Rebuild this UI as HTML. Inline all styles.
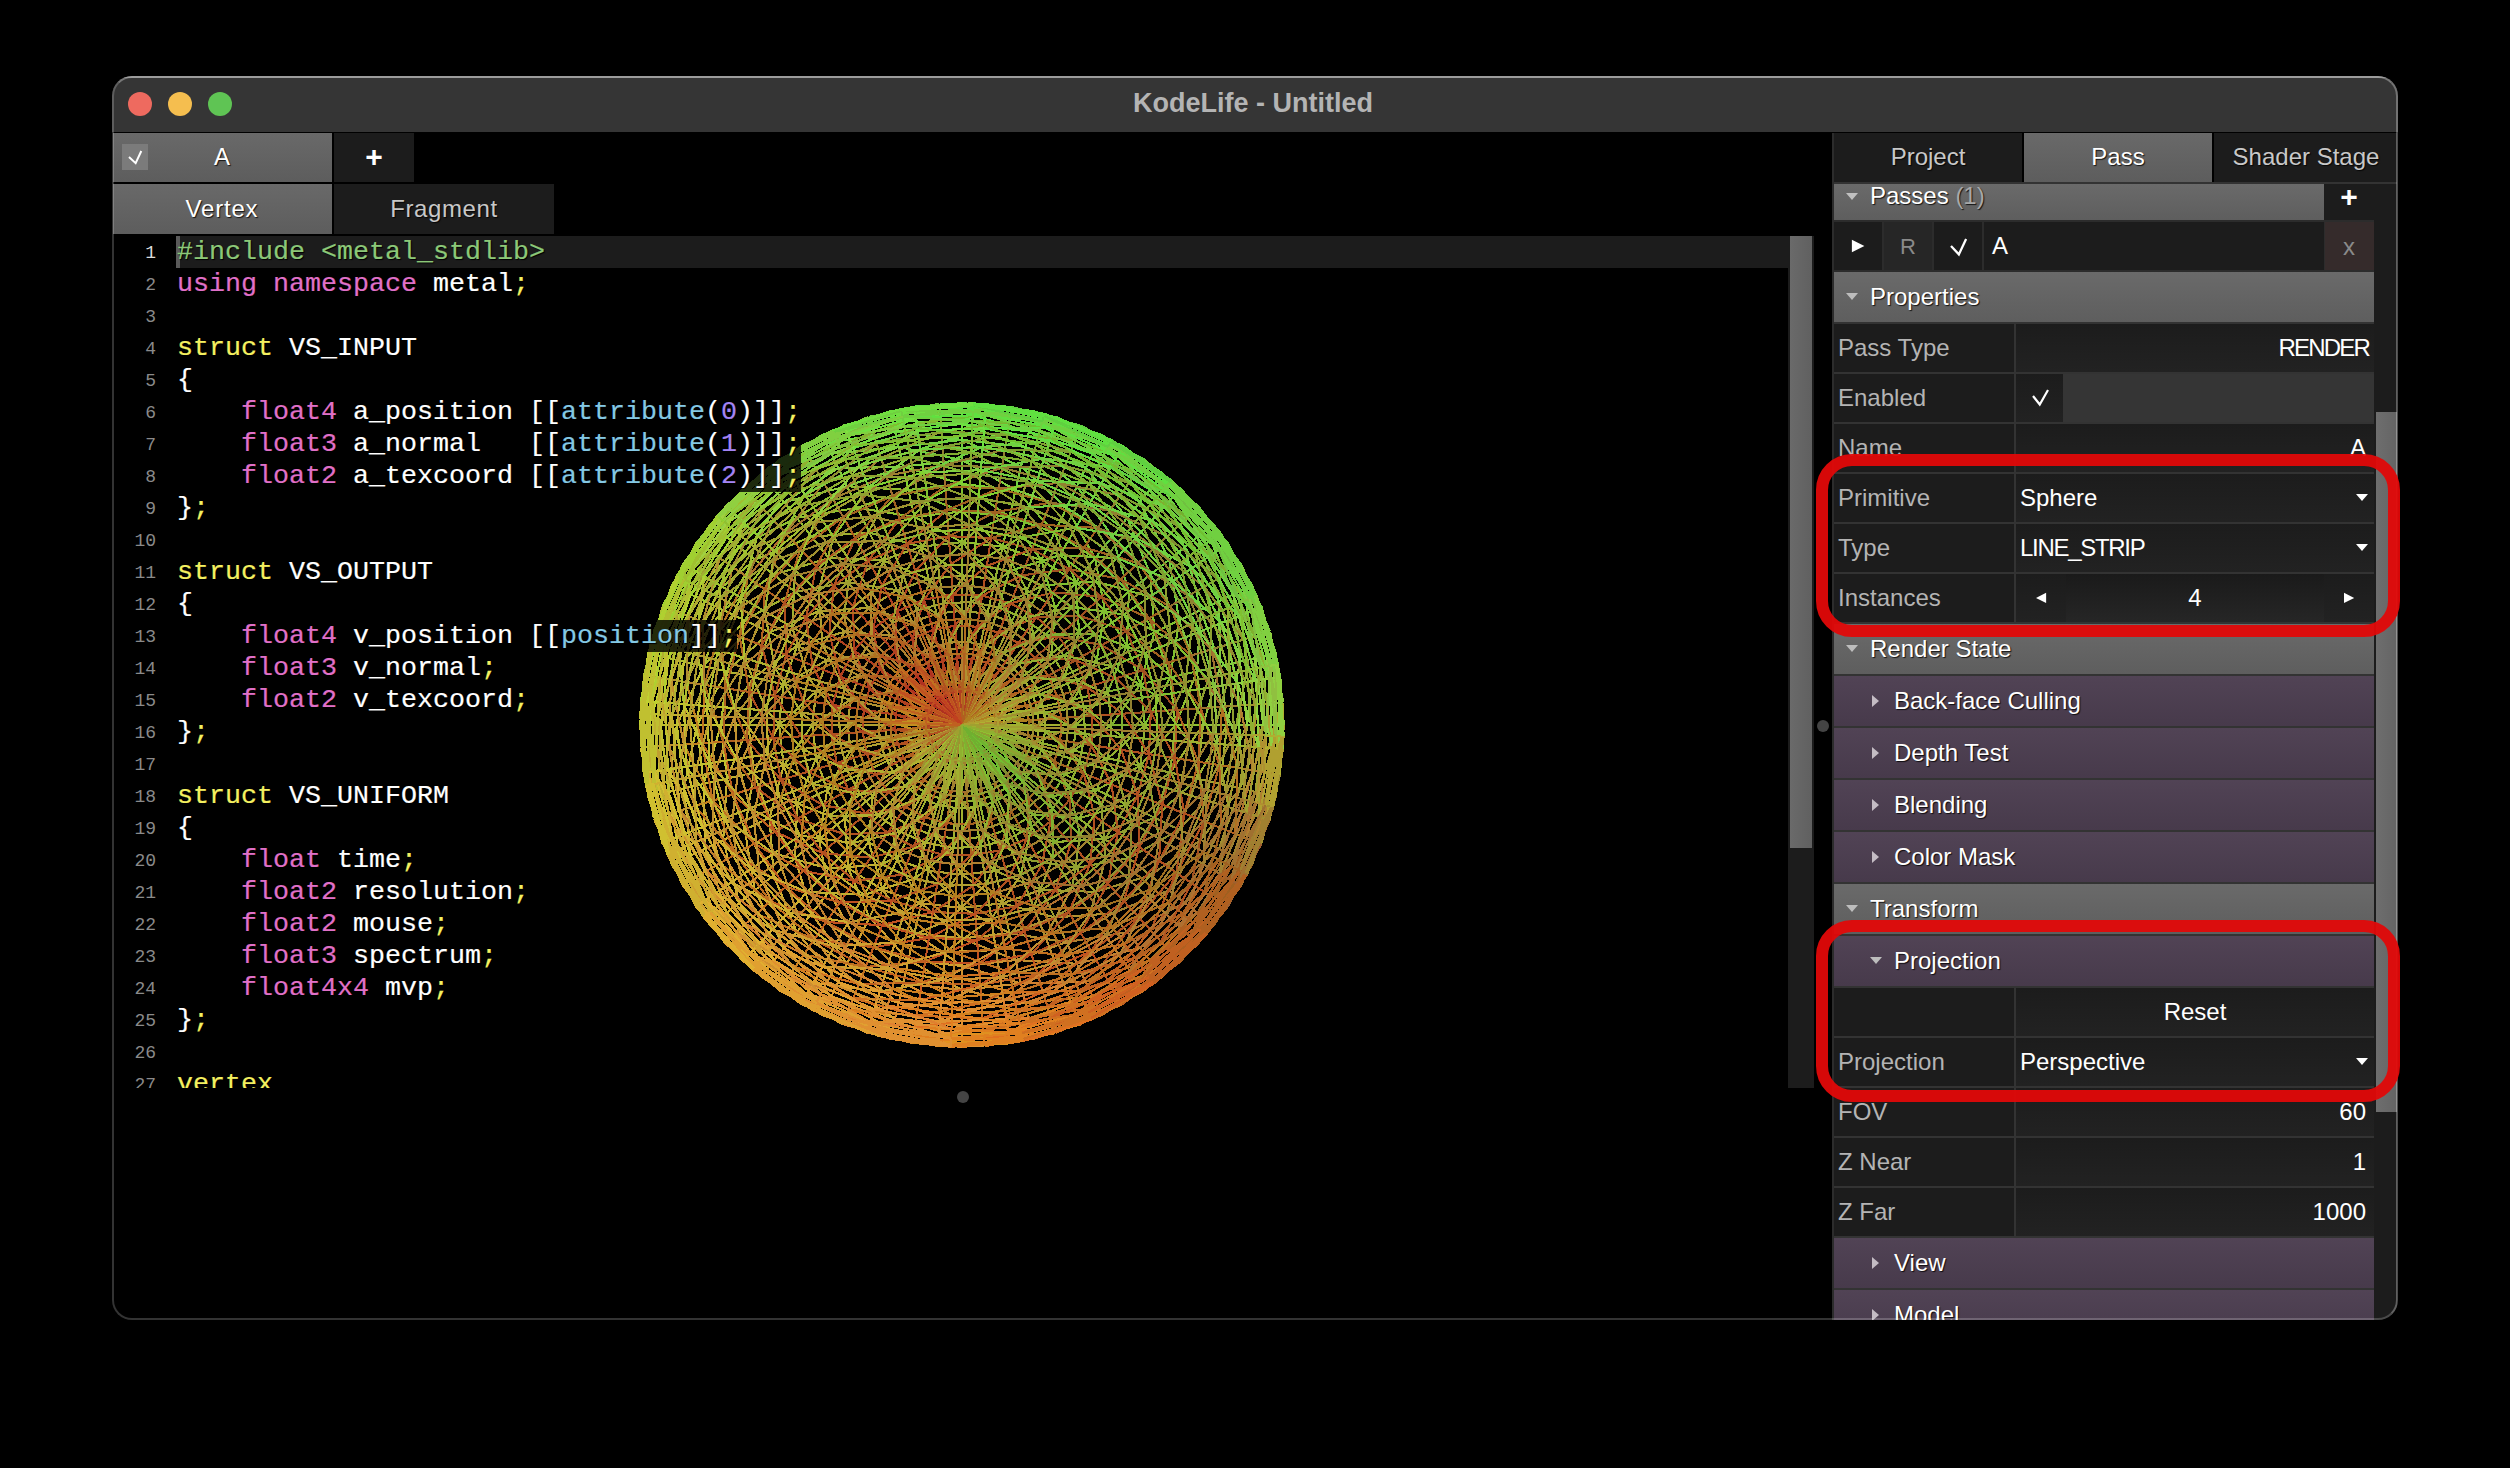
<!DOCTYPE html><html><head><meta charset="utf-8"><style>html,body{margin:0;padding:0;background:#000;}body{width:2510px;height:1468px;overflow:hidden;position:relative;font-family:'Liberation Sans',sans-serif;}div{box-sizing:border-box}</style></head><body>
<div style="position:absolute;left:112px;top:76px;width:2286px;height:1244px;border-radius:20px;overflow:hidden;background:#000;">
<div style="position:absolute;left:-112px;top:-76px;width:2510px;height:1468px;">
<div style="position:absolute;left:112px;top:76px;width:2286px;height:56px;background:#353535;"></div>
<div style="position:absolute;left:112px;top:76px;width:2286px;height:2px;background:#6e6e6e;"></div>
<div style="position:absolute;left:128px;top:92px;width:24px;height:24px;background:#ee6a5f;border-radius:50%;"></div>
<div style="position:absolute;left:168px;top:92px;width:24px;height:24px;background:#f5be4f;border-radius:50%;"></div>
<div style="position:absolute;left:208px;top:92px;width:24px;height:24px;background:#5fc454;border-radius:50%;"></div>
<div style="position:absolute;left:953.0px;width:600px;text-align:center;top:83.0px;height:40px;line-height:40px;font-size:27px;color:#b4b4b4;white-space:pre;font-weight:bold;">KodeLife - Untitled</div>
<div style="position:absolute;left:113px;top:133px;width:219px;height:49px;background:linear-gradient(#696969,#5d5d5d);"></div>
<div style="position:absolute;left:122px;top:144px;width:26px;height:26px;background:#7b7b7b;"></div>
<svg style="position:absolute;left:125.6px;top:148.2px" width="18.30000000000001" height="18.200000000000017"><polyline points="3,9.100000000000009 9.642000000000007,15.200000000000017 15.300000000000011,3" fill="none" stroke="#fff" stroke-width="2.0" stroke-linecap="butt" stroke-linejoin="miter"/></svg>
<div style="position:absolute;left:-78.0px;width:600px;text-align:center;top:137.0px;height:40px;line-height:40px;font-size:24px;color:#fff;white-space:pre;text-shadow:1px 1px 1px rgba(0,0,0,.8);">A</div>
<div style="position:absolute;left:334px;top:133px;width:80px;height:49px;background:#1c1c1c;"></div>
<div style="position:absolute;left:74.0px;width:600px;text-align:center;top:137.0px;height:40px;line-height:40px;font-size:30px;color:#fff;white-space:pre;font-weight:bold;">+</div>
<div style="position:absolute;left:113px;top:184px;width:219px;height:50px;background:linear-gradient(#696969,#5d5d5d);"></div>
<div style="position:absolute;left:-78.0px;width:600px;text-align:center;top:189.0px;height:40px;line-height:40px;font-size:24px;color:#fff;white-space:pre;text-shadow:1px 1px 1px rgba(0,0,0,.8);letter-spacing:0.8px;">Vertex</div>
<div style="position:absolute;left:334px;top:184px;width:220px;height:50px;background:#1c1c1c;"></div>
<div style="position:absolute;left:144.0px;width:600px;text-align:center;top:189.0px;height:40px;line-height:40px;font-size:24px;color:#c8c8c8;white-space:pre;text-shadow:1px 1px 1px rgba(0,0,0,.8);letter-spacing:0.6px;">Fragment</div>
<svg style="position:absolute;left:0;top:0" width="2510" height="1468" viewBox="0 0 2510 1468"><g stroke-width="2.1" fill="none" shape-rendering="crispEdges"><path stroke="rgb(176,176,48)" d="M1000.8 725.0L999.8 716.4M999.8 716.4L997.0 708.2M927.0 741.8L931.7 749.2M892.6 758.4L901.8 773.0M859.1 774.5L872.7 796.2M872.7 796.2L890.8 814.3M890.8 814.3L912.5 827.9M912.5 827.9L936.6 836.3M812.4 725.0L816.1 758.3M816.1 758.3L827.2 789.9M827.2 789.9L845.0 818.3M845.0 818.3L868.7 842.0M868.7 842.0L897.1 859.8M897.1 859.8L928.7 870.9M797.2 645.6L783.7 684.3M783.7 684.3L779.1 725.0M779.1 725.0L783.7 765.7M795.1 591.9L769.6 632.4M769.6 632.4L753.8 677.5M753.8 677.5L748.5 725.0M962.0 725.0L1000.8 725.0M962.0 725.0L999.8 716.4M962.0 725.0L999.8 716.4M927.0 741.8L901.8 773.0M892.6 758.4L859.1 774.5M892.6 758.4L872.7 796.2M901.8 773.0L872.7 796.2M901.8 773.0L890.8 814.3M914.0 785.2L890.8 814.3M914.0 785.2L912.5 827.9M850.7 750.4L827.2 789.9M859.1 774.5L827.2 789.9M859.1 774.5L845.0 818.3M872.7 796.2L845.0 818.3M872.7 796.2L868.7 842.0M890.8 814.3L868.7 842.0M890.8 814.3L897.1 859.8M912.5 827.9L897.1 859.8M912.5 827.9L928.7 870.9M936.6 836.3L928.7 870.9M936.6 836.3L962.0 874.6M816.1 691.7L779.1 725.0M812.4 725.0L779.1 725.0M812.4 725.0L783.7 765.7M816.1 758.3L783.7 765.7M816.1 758.3L797.2 804.4M827.2 789.9L797.2 804.4M819.0 611.0L769.6 632.4M797.2 645.6L769.6 632.4M797.2 645.6L753.8 677.5M783.7 684.3L753.8 677.5M783.7 684.3L748.5 725.0M779.1 725.0L748.5 725.0M769.6 632.4L744.8 620.4M769.6 632.4L727.0 671.4M753.8 677.5L727.0 671.4M753.8 677.5L721.0 725.0"/><path stroke="rgb(176,160,48)" d="M997.0 708.2L992.3 700.8M992.3 700.8L986.2 694.7M924.2 733.6L927.0 741.8M884.9 725.0L886.9 742.1M886.9 742.1L892.6 758.4M850.7 699.6L847.8 725.0M847.8 725.0L850.7 750.4M850.7 750.4L859.1 774.5M897.1 590.2L868.7 608.0M845.0 631.7L827.2 660.1M827.2 660.1L816.1 691.7M816.1 691.7L812.4 725.0M928.7 870.9L962.0 874.6M962.0 874.6L995.3 870.9M819.0 611.0L797.2 645.6M962.0 907.9L1002.7 903.3M1002.7 903.3L1041.4 889.8M1266.8 794.6L1274.6 725.0M1273.6 796.1L1281.7 725.0M1275.9 796.7L1284.0 725.0M962.0 725.0L997.0 708.2M962.0 725.0L997.0 708.2M962.0 725.0L992.3 700.8M962.0 725.0L992.3 700.8M962.0 725.0L927.0 741.8M962.0 725.0L927.0 741.8M924.2 733.6L886.9 742.1M924.2 733.6L892.6 758.4M927.0 741.8L892.6 758.4M884.9 725.0L847.8 725.0M884.9 725.0L850.7 750.4M886.9 742.1L850.7 750.4M886.9 742.1L859.1 774.5M850.7 699.6L816.1 691.7M850.7 699.6L812.4 725.0M847.8 725.0L812.4 725.0M847.8 725.0L816.1 758.3M850.7 750.4L816.1 758.3M962.0 839.2L962.0 874.6M868.7 608.0L819.0 611.0M845.0 631.7L819.0 611.0M845.0 631.7L797.2 645.6M827.2 660.1L797.2 645.6M827.2 660.1L783.7 684.3M816.1 691.7L783.7 684.3M897.1 859.8L921.3 903.3M928.7 870.9L921.3 903.3M928.7 870.9L962.0 907.9M962.0 874.6L962.0 907.9M962.0 874.6L1002.7 903.3M995.3 870.9L1002.7 903.3M1002.7 903.3L1009.5 933.2M1002.7 903.3L1054.6 917.4M1255.5 792.0L1274.6 725.0M1266.8 794.6L1281.7 725.0M1273.6 796.1L1284.0 725.0"/><path stroke="rgb(176,144,48)" d="M986.2 694.7L978.8 690.0M978.8 690.0L970.6 687.2M923.2 725.0L924.2 733.6M979.1 649.9L962.0 647.9M962.0 647.9L944.9 649.9M936.6 613.7L912.5 622.1M859.1 675.5L850.7 699.6M868.7 608.0L845.0 631.7M1009.5 933.2L1054.6 917.4M962.0 725.0L986.2 694.7M962.0 725.0L986.2 694.7M962.0 725.0L924.2 733.6M962.0 725.0L924.2 733.6M978.8 690.0L995.4 655.6M978.8 690.0L979.1 649.9M970.6 687.2L979.1 649.9M970.6 687.2L962.0 647.9M923.2 725.0L886.9 742.1M962.0 647.9L936.6 613.7M944.9 649.9L936.6 613.7M892.6 691.6L850.7 699.6M886.9 707.9L850.7 699.6M886.9 707.9L847.8 725.0M912.5 622.1L897.1 590.2M912.5 622.1L868.7 608.0M890.8 635.7L868.7 608.0M890.8 635.7L845.0 631.7M872.7 653.8L845.0 631.7M872.7 653.8L827.2 660.1M859.1 675.5L827.2 660.1M859.1 675.5L816.1 691.7M1009.5 933.2L1066.6 942.2M1054.6 917.4L1066.6 942.2M1054.6 917.4L1112.3 913.4"/><path stroke="rgb(176,128,32)" d="M970.6 687.2L962.0 686.2M962.0 725.0L970.6 687.2M962.0 725.0L970.6 687.2M962.0 686.2L944.9 649.9M953.4 687.2L944.9 649.9M901.8 677.0L872.7 653.8"/><path stroke="rgb(176,112,32)" d="M962.0 686.2L953.4 687.2M928.6 655.6L914.0 664.8M1149.7 960.4L1197.4 912.7M953.4 687.2L928.6 655.6M945.2 690.0L928.6 655.6M914.0 664.8L872.7 653.8"/><path stroke="rgb(192,112,32)" d="M953.4 687.2L945.2 690.0M927.0 708.2L924.2 716.4M914.0 664.8L901.8 677.0M901.8 677.0L892.6 691.6M1085.7 981.9L1139.8 947.9M1092.6 996.3L1149.7 960.4M962.0 725.0L962.0 686.2M962.0 725.0L962.0 686.2M962.0 725.0L953.4 687.2M962.0 725.0L953.4 687.2M962.0 725.0L924.2 716.4M962.0 725.0L924.2 716.4M945.2 690.0L914.0 664.8M931.7 700.8L892.6 691.6M927.0 708.2L892.6 691.6M1085.7 981.9L1149.7 960.4M1139.8 947.9L1149.7 960.4"/><path stroke="rgb(192,96,32)" d="M945.2 690.0L937.8 694.7M931.7 700.8L927.0 708.2M1156.9 969.4L1206.4 919.9M1161.3 974.9L1211.9 924.3M1162.8 976.7L1213.7 925.8M962.0 725.0L945.2 690.0M962.0 725.0L945.2 690.0M962.0 725.0L927.0 708.2M962.0 725.0L927.0 708.2M937.8 694.7L914.0 664.8M937.8 694.7L901.8 677.0M931.7 700.8L901.8 677.0M1149.7 960.4L1156.9 969.4M1149.7 960.4L1206.4 919.9M1156.9 969.4L1161.3 974.9M1156.9 969.4L1211.9 924.3M1161.3 974.9L1162.8 976.7M1161.3 974.9L1213.7 925.8"/><path stroke="rgb(192,80,32)" d="M937.8 694.7L931.7 700.8M962.0 725.0L937.8 694.7M962.0 725.0L937.8 694.7M962.0 725.0L931.7 700.8M962.0 725.0L931.7 700.8"/><path stroke="rgb(192,128,32)" d="M924.2 716.4L923.2 725.0M892.6 691.6L886.9 707.9M962.0 725.0L923.2 725.0M962.0 725.0L923.2 725.0M927.0 708.2L886.9 707.9M924.2 716.4L886.9 707.9"/><path stroke="rgb(160,192,48)" d="M931.7 749.2L937.8 755.3M937.8 755.3L945.2 760.0M796.8 517.8L754.8 559.8M754.8 559.8L723.2 610.0M739.1 547.2L705.1 601.3M962.0 725.0L937.8 755.3M962.0 725.0L937.8 755.3M811.7 536.6L754.8 559.8M773.6 574.7L754.8 559.8M773.6 574.7L723.2 610.0M754.8 559.8L739.1 547.2M754.8 559.8L705.1 601.3M723.2 610.0L705.1 601.3"/><path stroke="rgb(160,176,48)" d="M945.2 760.0L953.4 762.8M999.8 733.6L1000.8 725.0M1039.1 725.0L1037.1 707.9M1037.1 707.9L1031.4 691.6M1031.4 691.6L1022.2 677.0M901.8 773.0L914.0 785.2M914.0 785.2L928.6 794.4M928.6 794.4L944.9 800.1M944.9 800.1L962.0 802.1M1037.1 742.1L1039.1 725.0M936.6 836.3L962.0 839.2M962.0 839.2L987.4 836.3M995.3 579.1L962.0 575.4M962.0 575.4L928.7 579.1M921.3 546.7L882.6 560.2M869.4 532.6L828.9 558.1M828.9 558.1L795.1 591.9M811.7 536.6L773.6 574.7M773.6 574.7L744.8 620.4M1197.0 778.6L1203.0 725.0M1220.4 784.0L1227.0 725.0M962.0 725.0L931.7 749.2M962.0 725.0L931.7 749.2M962.0 725.0L1000.8 725.0M1000.8 725.0L1039.1 725.0M1000.8 725.0L1037.1 707.9M999.8 716.4L1037.1 707.9M999.8 716.4L1031.4 691.6M931.7 749.2L901.8 773.0M931.7 749.2L914.0 785.2M937.8 755.3L914.0 785.2M937.8 755.3L928.6 794.4M945.2 760.0L928.6 794.4M945.2 760.0L944.9 800.1M953.4 762.8L944.9 800.1M953.4 762.8L962.0 802.1M999.8 733.6L1039.1 725.0M1039.1 725.0L1076.2 725.0M1039.1 725.0L1073.3 699.6M1037.1 707.9L1073.3 699.6M928.6 794.4L912.5 827.9M928.6 794.4L936.6 836.3M944.9 800.1L936.6 836.3M944.9 800.1L962.0 839.2M962.0 802.1L962.0 839.2M962.0 802.1L987.4 836.3M987.4 613.7L995.3 579.1M962.0 839.2L995.3 870.9M987.4 836.3L995.3 870.9M987.4 836.3L1026.9 859.8M962.0 575.4L921.3 546.7M928.7 579.1L921.3 546.7M928.7 579.1L882.6 560.2M882.6 560.2L869.4 532.6M882.6 560.2L828.9 558.1M848.0 582.0L828.9 558.1M819.0 611.0L795.1 591.9M869.4 532.6L811.7 536.6M828.9 558.1L811.7 536.6M828.9 558.1L773.6 574.7M795.1 591.9L773.6 574.7M795.1 591.9L744.8 620.4M1170.2 772.5L1203.0 725.0M1197.0 778.6L1227.0 725.0M1220.4 784.0L1247.1 725.0M1240.0 788.4L1263.1 725.0"/><path stroke="rgb(144,176,48)" d="M953.4 762.8L962.0 763.8M962.0 763.8L970.6 762.8M997.0 741.8L999.8 733.6M962.0 802.1L979.1 800.1M979.1 800.1L995.4 794.4M1031.4 758.4L1037.1 742.1M1076.2 725.0L1073.3 699.6M1073.3 699.6L1064.9 675.5M1064.9 675.5L1051.3 653.8M1051.3 653.8L1033.2 635.7M1033.2 635.7L1011.5 622.1M987.4 836.3L1011.5 827.9M1011.5 827.9L1033.2 814.3M1064.9 774.5L1073.3 750.4M1073.3 750.4L1076.2 725.0M1111.6 725.0L1107.9 691.7M1055.3 608.0L1026.9 590.2M1026.9 590.2L995.3 579.1M1026.9 859.8L1055.3 842.0M1079.0 818.3L1096.8 789.9M1096.8 789.9L1107.9 758.3M1107.9 758.3L1111.6 725.0M962.0 542.1L921.3 546.7M1140.3 765.7L1144.9 725.0M1170.2 772.5L1175.5 725.0M962.0 725.0L999.8 733.6M962.0 725.0L999.8 733.6M962.0 763.8L962.0 802.1M962.0 763.8L979.1 800.1M970.6 762.8L979.1 800.1M997.0 741.8L1037.1 742.1M999.8 733.6L1037.1 742.1M1037.1 707.9L1064.9 675.5M1031.4 691.6L1064.9 675.5M1031.4 691.6L1051.3 653.8M1022.2 677.0L1051.3 653.8M979.1 800.1L987.4 836.3M979.1 800.1L1011.5 827.9M995.4 794.4L1011.5 827.9M1031.4 758.4L1073.3 750.4M1037.1 742.1L1073.3 750.4M1037.1 742.1L1076.2 725.0M1076.2 725.0L1111.6 725.0M1076.2 725.0L1107.9 691.7M1073.3 699.6L1107.9 691.7M1073.3 699.6L1096.8 660.1M1064.9 675.5L1096.8 660.1M1064.9 675.5L1079.0 631.7M1051.3 653.8L1079.0 631.7M1051.3 653.8L1055.3 608.0M1033.2 635.7L1055.3 608.0M1033.2 635.7L1026.9 590.2M1011.5 622.1L1026.9 590.2M1011.5 622.1L995.3 579.1M1011.5 827.9L1026.9 859.8M1011.5 827.9L1055.3 842.0M1064.9 774.5L1096.8 789.9M1064.9 774.5L1107.9 758.3M1073.3 750.4L1107.9 758.3M1073.3 750.4L1111.6 725.0M1026.9 590.2L1041.4 560.2M1026.9 590.2L1002.7 546.7M995.3 579.1L1002.7 546.7M995.3 579.1L962.0 542.1M962.0 575.4L962.0 542.1M1055.3 842.0L1105.0 839.0M1079.0 818.3L1105.0 839.0M1079.0 818.3L1126.8 804.4M1096.8 789.9L1126.8 804.4M1096.8 789.9L1140.3 765.7M1107.9 758.3L1140.3 765.7M1107.9 758.3L1144.9 725.0M921.3 546.7L914.5 516.8M921.3 546.7L869.4 532.6M1140.3 765.7L1175.5 725.0"/><path stroke="rgb(128,192,48)" d="M970.6 762.8L978.8 760.0M992.3 749.2L997.0 741.8M1144.9 725.0L1140.3 684.3M1140.3 684.3L1126.8 645.6M1126.8 645.6L1105.0 611.0M1105.0 611.0L1076.0 582.0M1076.0 582.0L1041.4 560.2M1170.2 677.5L1154.4 632.4M1154.4 632.4L1128.9 591.9M1095.1 558.1L1054.6 532.6M1054.6 532.6L1009.5 516.8M1009.5 516.8L962.0 511.5M962.0 484.0L908.4 490.0M962.0 725.0L970.6 762.8M962.0 725.0L970.6 762.8M962.0 725.0L997.0 741.8M962.0 725.0L997.0 741.8M978.8 760.0L995.4 794.4M978.8 760.0L1010.0 785.2M992.3 749.2L1031.4 758.4M1096.8 660.1L1105.0 611.0M1079.0 631.7L1105.0 611.0M1079.0 631.7L1076.0 582.0M1055.3 608.0L1076.0 582.0M1055.3 608.0L1041.4 560.2M1144.9 725.0L1170.2 677.5M1140.3 684.3L1170.2 677.5M1140.3 684.3L1154.4 632.4M1126.8 645.6L1154.4 632.4M1126.8 645.6L1128.9 591.9M1105.0 611.0L1128.9 591.9M1105.0 611.0L1095.1 558.1M1076.0 582.0L1095.1 558.1M1076.0 582.0L1054.6 532.6M1041.4 560.2L1054.6 532.6M1041.4 560.2L1009.5 516.8M1002.7 546.7L1009.5 516.8M1170.2 677.5L1197.0 671.4M1170.2 677.5L1179.2 620.4M1154.4 632.4L1179.2 620.4M1154.4 632.4L1150.4 574.7M1095.1 558.1L1066.6 507.8M1054.6 532.6L1066.6 507.8M1054.6 532.6L1015.6 490.0M1009.5 516.8L1015.6 490.0M1009.5 516.8L962.0 484.0M962.0 511.5L962.0 484.0M962.0 511.5L908.4 490.0"/><path stroke="rgb(112,192,48)" d="M978.8 760.0L986.2 755.3M986.2 755.3L992.3 749.2M1010.0 785.2L1022.2 773.0M962.0 725.0L978.8 760.0M962.0 725.0L978.8 760.0M962.0 725.0L986.2 755.3M962.0 725.0L986.2 755.3M962.0 725.0L992.3 749.2M962.0 725.0L992.3 749.2M986.2 755.3L1010.0 785.2M986.2 755.3L1022.2 773.0M992.3 749.2L1022.2 773.0"/><path stroke="rgb(160,160,48)" d="M1022.2 677.0L1010.0 664.8M1010.0 664.8L995.4 655.6M1011.5 622.1L987.4 613.7M987.4 613.7L962.0 610.8M962.0 610.8L936.6 613.7M928.7 579.1L897.1 590.2M995.3 870.9L1026.9 859.8M882.6 560.2L848.0 582.0M848.0 582.0L819.0 611.0M1041.4 889.8L1076.0 868.0M1240.0 788.4L1247.1 725.0M1255.5 792.0L1263.1 725.0M997.0 708.2L1031.4 691.6M997.0 708.2L1022.2 677.0M992.3 700.8L1022.2 677.0M992.3 700.8L1010.0 664.8M986.2 694.7L1010.0 664.8M1010.0 664.8L1033.2 635.7M1010.0 664.8L1011.5 622.1M995.4 655.6L1011.5 622.1M995.4 655.6L987.4 613.7M979.1 649.9L987.4 613.7M979.1 649.9L962.0 610.8M987.4 613.7L962.0 575.4M962.0 610.8L962.0 575.4M962.0 610.8L928.7 579.1M936.6 613.7L928.7 579.1M936.6 613.7L897.1 590.2M897.1 590.2L882.6 560.2M897.1 590.2L848.0 582.0M868.7 608.0L848.0 582.0M995.3 870.9L1041.4 889.8M1026.9 859.8L1041.4 889.8M848.0 582.0L795.1 591.9M1041.4 889.8L1054.6 917.4M1041.4 889.8L1095.1 891.9M1076.0 868.0L1095.1 891.9M1170.2 772.5L1197.0 778.6M1197.0 778.6L1220.4 784.0M1220.4 784.0L1240.0 788.4"/><path stroke="rgb(160,144,48)" d="M995.4 655.6L979.1 649.9M1054.6 917.4L1095.1 891.9M1112.3 913.4L1150.4 875.3M1179.2 829.6L1197.0 778.6M1200.8 840.0L1220.4 784.0M1218.9 848.7L1240.0 788.4M986.2 694.7L995.4 655.6M962.0 647.9L962.0 610.8M1095.1 891.9L1112.3 913.4M1095.1 891.9L1150.4 875.3M1128.9 858.1L1150.4 875.3M1179.2 829.6L1220.4 784.0M1200.8 840.0L1240.0 788.4M1240.0 788.4L1255.5 792.0M1255.5 792.0L1266.8 794.6M1266.8 794.6L1273.6 796.1M1273.6 796.1L1275.9 796.7"/><path stroke="rgb(176,128,48)" d="M944.9 649.9L928.6 655.6M912.5 622.1L890.8 635.7M890.8 635.7L872.7 653.8M872.7 653.8L859.1 675.5M1066.6 942.2L1112.3 913.4M1127.2 932.2L1169.2 890.2M962.0 725.0L978.8 690.0M962.0 725.0L978.8 690.0M962.0 686.2L962.0 647.9M944.9 649.9L912.5 622.1M928.6 655.6L912.5 622.1M928.6 655.6L890.8 635.7M914.0 664.8L890.8 635.7M901.8 677.0L859.1 675.5M892.6 691.6L859.1 675.5M1066.6 942.2L1127.2 932.2M1112.3 913.4L1127.2 932.2"/><path stroke="rgb(192,144,32)" d="M886.9 707.9L884.9 725.0M924.2 716.4L884.9 725.0M923.2 725.0L884.9 725.0"/><path stroke="rgb(128,176,48)" d="M995.4 794.4L1010.0 785.2M1022.2 773.0L1031.4 758.4M1033.2 814.3L1051.3 796.2M1051.3 796.2L1064.9 774.5M1107.9 691.7L1096.8 660.1M1096.8 660.1L1079.0 631.7M1079.0 631.7L1055.3 608.0M1055.3 842.0L1079.0 818.3M970.6 762.8L995.4 794.4M997.0 741.8L1031.4 758.4M995.4 794.4L1033.2 814.3M1010.0 785.2L1033.2 814.3M1010.0 785.2L1051.3 796.2M1022.2 773.0L1051.3 796.2M1022.2 773.0L1064.9 774.5M1031.4 758.4L1064.9 774.5M1033.2 814.3L1055.3 842.0M1033.2 814.3L1079.0 818.3M1051.3 796.2L1079.0 818.3M1051.3 796.2L1096.8 789.9M1111.6 725.0L1144.9 725.0M1111.6 725.0L1140.3 684.3M1107.9 691.7L1140.3 684.3M1107.9 691.7L1126.8 645.6M1096.8 660.1L1126.8 645.6"/><path stroke="rgb(144,192,48)" d="M1041.4 560.2L1002.7 546.7M1002.7 546.7L962.0 542.1M1175.5 725.0L1170.2 677.5M962.0 511.5L914.5 516.8M914.5 516.8L869.4 532.6M1203.0 725.0L1197.0 671.4M908.4 490.0L857.4 507.8M857.4 507.8L811.7 536.6M847.0 486.2L796.8 517.8M962.0 725.0L945.2 760.0M962.0 725.0L945.2 760.0M962.0 725.0L953.4 762.8M962.0 725.0L953.4 762.8M962.0 725.0L962.0 763.8M962.0 725.0L962.0 763.8M1144.9 725.0L1175.5 725.0M1002.7 546.7L962.0 511.5M962.0 542.1L962.0 511.5M962.0 542.1L914.5 516.8M1175.5 725.0L1203.0 725.0M1175.5 725.0L1197.0 671.4M914.5 516.8L908.4 490.0M914.5 516.8L857.4 507.8M869.4 532.6L857.4 507.8M908.4 490.0L847.0 486.2M857.4 507.8L847.0 486.2M857.4 507.8L796.8 517.8M811.7 536.6L796.8 517.8M796.8 517.8L784.2 502.1M796.8 517.8L739.1 547.2"/><path stroke="rgb(192,176,48)" d="M783.7 765.7L797.2 804.4M797.2 804.4L819.0 839.0M819.0 839.0L848.0 868.0M848.0 868.0L882.6 889.8M748.5 725.0L753.8 772.5M753.8 772.5L769.6 817.6M769.6 817.6L795.1 858.1M795.1 858.1L828.9 891.9M828.9 891.9L869.4 917.4M727.0 778.6L744.8 829.6M827.2 789.9L819.0 839.0M845.0 818.3L819.0 839.0M845.0 818.3L848.0 868.0M868.7 842.0L848.0 868.0M868.7 842.0L882.6 889.8M897.1 859.8L882.6 889.8M779.1 725.0L753.8 772.5M783.7 765.7L753.8 772.5M783.7 765.7L769.6 817.6M797.2 804.4L769.6 817.6M797.2 804.4L795.1 858.1M819.0 839.0L795.1 858.1M819.0 839.0L828.9 891.9M848.0 868.0L828.9 891.9M848.0 868.0L869.4 917.4M748.5 725.0L727.0 778.6M753.8 772.5L727.0 778.6M753.8 772.5L744.8 829.6M769.6 817.6L744.8 829.6M769.6 817.6L773.6 875.3M795.1 858.1L773.6 875.3M727.0 778.6L723.2 840.0"/><path stroke="rgb(192,160,48)" d="M882.6 889.8L921.3 903.3M921.3 903.3L962.0 907.9M869.4 917.4L914.5 933.2M914.5 933.2L962.0 938.5M962.0 938.5L1009.5 933.2M882.6 889.8L869.4 917.4M882.6 889.8L914.5 933.2M921.3 903.3L914.5 933.2M921.3 903.3L962.0 938.5M962.0 907.9L962.0 938.5M962.0 907.9L1009.5 933.2"/><path stroke="rgb(144,160,48)" d="M1076.0 868.0L1105.0 839.0M1105.0 839.0L1126.8 804.4M1126.8 804.4L1140.3 765.7M1154.4 817.6L1170.2 772.5M1022.2 677.0L1033.2 635.7M1026.9 859.8L1076.0 868.0M1055.3 842.0L1076.0 868.0M1076.0 868.0L1128.9 858.1M1105.0 839.0L1128.9 858.1M1105.0 839.0L1154.4 817.6M1126.8 804.4L1154.4 817.6M1126.8 804.4L1170.2 772.5M1140.3 765.7L1170.2 772.5M1154.4 817.6L1197.0 778.6"/><path stroke="rgb(112,192,64)" d="M1128.9 591.9L1095.1 558.1M1179.2 620.4L1150.4 574.7M1128.9 591.9L1150.4 574.7M1128.9 591.9L1112.3 536.6M1095.1 558.1L1112.3 536.6"/><path stroke="rgb(144,144,48)" d="M1095.1 891.9L1128.9 858.1M1128.9 858.1L1154.4 817.6M1128.9 858.1L1179.2 829.6M1154.4 817.6L1179.2 829.6"/><path stroke="rgb(128,192,64)" d="M1197.0 671.4L1179.2 620.4M1197.0 671.4L1220.4 666.0M1197.0 671.4L1200.8 610.0"/><path stroke="rgb(112,208,64)" d="M1150.4 574.7L1112.3 536.6M1112.3 536.6L1066.6 507.8M1200.8 610.0L1169.2 559.8M1169.2 559.8L1127.2 517.8M1127.2 517.8L1077.0 486.2M1077.0 486.2L1021.0 466.6M1021.0 466.6L962.0 460.0M1218.9 601.3L1184.9 547.2M1184.9 547.2L1139.8 502.1M1139.8 502.1L1085.7 468.1M1085.7 468.1L1025.4 447.0M1025.4 447.0L962.0 439.9M962.0 439.9L898.6 447.0M1233.3 594.4L1197.4 537.3M1197.4 537.3L1149.7 489.6M1243.7 589.3L1206.4 530.1M1206.4 530.1L1156.9 480.6M1250.0 586.3L1211.9 525.7M1211.9 525.7L1161.3 475.1M1252.1 585.3L1213.7 524.2M1213.7 524.2L1162.8 473.3M1179.2 620.4L1169.2 559.8M1150.4 574.7L1169.2 559.8M1150.4 574.7L1127.2 517.8M1112.3 536.6L1127.2 517.8M1112.3 536.6L1077.0 486.2M1066.6 507.8L1077.0 486.2M1066.6 507.8L1021.0 466.6M1015.6 490.0L1021.0 466.6M1200.8 610.0L1218.9 601.3M1200.8 610.0L1184.9 547.2M1169.2 559.8L1184.9 547.2M1169.2 559.8L1139.8 502.1M1127.2 517.8L1139.8 502.1M1127.2 517.8L1085.7 468.1M1077.0 486.2L1085.7 468.1M1077.0 486.2L1025.4 447.0M1021.0 466.6L1025.4 447.0M1021.0 466.6L962.0 439.9M962.0 460.0L962.0 439.9M962.0 460.0L898.6 447.0M1218.9 601.3L1233.3 594.4M1218.9 601.3L1197.4 537.3M1184.9 547.2L1197.4 537.3M1184.9 547.2L1149.7 489.6M1139.8 502.1L1149.7 489.6M1139.8 502.1L1092.6 453.7M1085.7 468.1L1029.0 431.5M962.0 439.9L895.0 431.5M898.6 447.0L895.0 431.5M1233.3 594.4L1243.7 589.3M1233.3 594.4L1206.4 530.1M1197.4 537.3L1206.4 530.1M1197.4 537.3L1156.9 480.6M1243.7 589.3L1250.0 586.3M1243.7 589.3L1211.9 525.7M1206.4 530.1L1211.9 525.7M1206.4 530.1L1161.3 475.1M1250.0 586.3L1252.1 585.3M1250.0 586.3L1213.7 524.2M1211.9 525.7L1213.7 524.2M1211.9 525.7L1162.8 473.3"/><path stroke="rgb(128,208,64)" d="M1066.6 507.8L1015.6 490.0M1220.4 666.0L1200.8 610.0M962.0 460.0L903.0 466.6M903.0 466.6L847.0 486.2M1240.0 661.6L1218.9 601.3M898.6 447.0L838.3 468.1M1255.5 658.0L1233.3 594.4M895.0 431.5L831.4 453.7M831.4 453.7L774.3 489.6M1266.8 655.4L1243.7 589.3M826.3 443.3L767.1 480.6M1273.6 653.9L1250.0 586.3M823.3 437.0L762.7 475.1M1275.9 653.3L1252.1 585.3M822.3 434.9L761.2 473.3M1179.2 620.4L1200.8 610.0M1015.6 490.0L962.0 460.0M962.0 484.0L962.0 460.0M1220.4 666.0L1240.0 661.6M1220.4 666.0L1218.9 601.3M903.0 466.6L898.6 447.0M903.0 466.6L838.3 468.1M847.0 486.2L838.3 468.1M1240.0 661.6L1255.5 658.0M1240.0 661.6L1233.3 594.4M898.6 447.0L831.4 453.7M838.3 468.1L831.4 453.7M1255.5 658.0L1266.8 655.4M1255.5 658.0L1243.7 589.3M831.4 453.7L767.1 480.6M1266.8 655.4L1273.6 653.9M1266.8 655.4L1250.0 586.3M826.3 443.3L762.7 475.1M1273.6 653.9L1275.9 653.3M1273.6 653.9L1252.1 585.3M823.3 437.0L761.2 473.3"/><path stroke="rgb(128,208,48)" d="M1015.6 490.0L962.0 484.0M962.0 484.0L903.0 466.6M908.4 490.0L903.0 466.6"/><path stroke="rgb(176,192,48)" d="M744.8 620.4L727.0 671.4M727.0 671.4L721.0 725.0M723.2 610.0L703.6 666.0M705.1 601.3L684.0 661.6M744.8 620.4L723.2 610.0M744.8 620.4L703.6 666.0M727.0 671.4L703.6 666.0M723.2 610.0L684.0 661.6M703.6 666.0L684.0 661.6M705.1 601.3L668.5 658.0M684.0 661.6L668.5 658.0"/><path stroke="rgb(192,192,48)" d="M721.0 725.0L727.0 778.6M703.6 666.0L697.0 725.0M697.0 725.0L703.6 784.0M684.0 661.6L676.9 725.0M676.9 725.0L684.0 788.4M668.5 658.0L660.9 725.0M660.9 725.0L668.5 792.0M649.4 725.0L657.2 794.6M642.3 725.0L650.4 796.1M640.0 725.0L648.1 796.7M748.5 725.0L721.0 725.0M727.0 671.4L697.0 725.0M721.0 725.0L697.0 725.0M721.0 725.0L703.6 784.0M727.0 778.6L703.6 784.0M703.6 666.0L676.9 725.0M697.0 725.0L676.9 725.0M697.0 725.0L684.0 788.4M703.6 784.0L684.0 788.4M684.0 661.6L660.9 725.0M676.9 725.0L660.9 725.0M676.9 725.0L668.5 792.0M660.9 725.0L649.4 725.0M660.9 725.0L657.2 794.6M649.4 725.0L642.3 725.0M649.4 725.0L650.4 796.1M642.3 725.0L640.0 725.0M642.3 725.0L648.1 796.7"/><path stroke="rgb(208,176,48)" d="M744.8 829.6L773.6 875.3M773.6 875.3L811.7 913.4M703.6 784.0L723.2 840.0M723.2 840.0L754.8 890.2M754.8 890.2L796.8 932.2M705.1 848.7L739.1 902.8M739.1 902.8L784.2 947.9M690.7 855.6L726.6 912.7M680.3 860.7L717.6 919.9M674.0 863.7L712.1 924.3M671.9 864.7L710.3 925.8M795.1 858.1L811.7 913.4M828.9 891.9L811.7 913.4M744.8 829.6L723.2 840.0M744.8 829.6L754.8 890.2M773.6 875.3L754.8 890.2M773.6 875.3L796.8 932.2M811.7 913.4L796.8 932.2M723.2 840.0L705.1 848.7M723.2 840.0L739.1 902.8M754.8 890.2L739.1 902.8M754.8 890.2L784.2 947.9M796.8 932.2L784.2 947.9M705.1 848.7L690.7 855.6M705.1 848.7L726.6 912.7M739.1 902.8L726.6 912.7M690.7 855.6L717.6 919.9M680.3 860.7L712.1 924.3M674.0 863.7L710.3 925.8"/><path stroke="rgb(208,160,48)" d="M811.7 913.4L857.4 942.2M857.4 942.2L908.4 960.0M908.4 960.0L962.0 966.0M796.8 932.2L847.0 963.8M847.0 963.8L903.0 983.4M828.9 891.9L857.4 942.2M869.4 917.4L857.4 942.2M869.4 917.4L908.4 960.0M914.5 933.2L908.4 960.0M914.5 933.2L962.0 966.0M962.0 938.5L962.0 966.0M811.7 913.4L847.0 963.8M857.4 942.2L847.0 963.8M857.4 942.2L903.0 983.4M908.4 960.0L903.0 983.4M908.4 960.0L962.0 990.0M796.8 932.2L838.3 981.9"/><path stroke="rgb(208,144,48)" d="M962.0 966.0L1015.6 960.0M903.0 983.4L962.0 990.0M962.0 990.0L1021.0 983.4M962.0 966.0L962.0 990.0M962.0 966.0L1021.0 983.4M1015.6 960.0L1021.0 983.4M962.0 990.0L1025.4 1003.0"/><path stroke="rgb(192,144,48)" d="M1015.6 960.0L1066.6 942.2M962.0 938.5L1015.6 960.0M1009.5 933.2L1015.6 960.0M1015.6 960.0L1077.0 963.8"/><path stroke="rgb(160,128,48)" d="M1150.4 875.3L1179.2 829.6M1169.2 890.2L1200.8 840.0M1233.3 855.6L1255.5 792.0M1243.7 860.7L1266.8 794.6M1250.0 863.7L1273.6 796.1M1252.1 864.7L1275.9 796.7M1112.3 913.4L1169.2 890.2M1150.4 875.3L1169.2 890.2M1150.4 875.3L1200.8 840.0M1179.2 829.6L1200.8 840.0M1200.8 840.0L1218.9 848.7M1218.9 848.7L1255.5 792.0M1233.3 855.6L1266.8 794.6M1243.7 860.7L1273.6 796.1M1250.0 863.7L1275.9 796.7"/><path stroke="rgb(144,192,64)" d="M1227.0 725.0L1220.4 666.0M1203.0 725.0L1227.0 725.0M1203.0 725.0L1220.4 666.0M1227.0 725.0L1247.1 725.0"/><path stroke="rgb(192,128,48)" d="M1021.0 983.4L1077.0 963.8M1077.0 963.8L1127.2 932.2M1066.6 942.2L1077.0 963.8M1077.0 963.8L1085.7 981.9M1077.0 963.8L1139.8 947.9"/><path stroke="rgb(144,208,64)" d="M1247.1 725.0L1240.0 661.6M838.3 468.1L784.2 502.1M1263.1 725.0L1255.5 658.0M774.3 489.6L726.6 537.3M1274.6 725.0L1266.8 655.4M767.1 480.6L717.6 530.1M1281.7 725.0L1273.6 653.9M762.7 475.1L712.1 525.7M1284.0 725.0L1275.9 653.3M761.2 473.3L710.3 524.2M1227.0 725.0L1240.0 661.6M847.0 486.2L784.2 502.1M1247.1 725.0L1263.1 725.0M1247.1 725.0L1255.5 658.0M838.3 468.1L774.3 489.6M784.2 502.1L774.3 489.6M784.2 502.1L726.6 537.3M1263.1 725.0L1274.6 725.0M1263.1 725.0L1266.8 655.4M774.3 489.6L767.1 480.6M774.3 489.6L717.6 530.1M726.6 537.3L717.6 530.1M1274.6 725.0L1281.7 725.0M1274.6 725.0L1273.6 653.9M767.1 480.6L762.7 475.1M767.1 480.6L712.1 525.7M717.6 530.1L712.1 525.7M1281.7 725.0L1284.0 725.0M1281.7 725.0L1275.9 653.3M762.7 475.1L761.2 473.3M762.7 475.1L710.3 524.2M712.1 525.7L710.3 524.2"/><path stroke="rgb(144,208,48)" d="M784.2 502.1L739.1 547.2"/><path stroke="rgb(208,192,48)" d="M684.0 788.4L705.1 848.7M668.5 792.0L690.7 855.6M657.2 794.6L680.3 860.7M650.4 796.1L674.0 863.7M648.1 796.7L671.9 864.7M703.6 784.0L705.1 848.7M684.0 788.4L668.5 792.0M684.0 788.4L690.7 855.6M668.5 792.0L657.2 794.6M668.5 792.0L680.3 860.7M690.7 855.6L680.3 860.7M657.2 794.6L650.4 796.1M657.2 794.6L674.0 863.7M680.3 860.7L674.0 863.7M650.4 796.1L648.1 796.7M650.4 796.1L671.9 864.7M674.0 863.7L671.9 864.7"/><path stroke="rgb(224,160,48)" d="M784.2 947.9L838.3 981.9M838.3 981.9L898.6 1003.0M774.3 960.4L831.4 996.3M831.4 996.3L895.0 1018.5M767.1 969.4L826.3 1006.7M826.3 1006.7L892.4 1029.8M762.7 974.9L823.3 1013.0M823.3 1013.0L890.9 1036.6M761.2 976.7L822.3 1015.1M822.3 1015.1L890.3 1038.9M847.0 963.8L838.3 981.9M847.0 963.8L898.6 1003.0M903.0 983.4L898.6 1003.0M784.2 947.9L774.3 960.4M784.2 947.9L831.4 996.3M838.3 981.9L831.4 996.3M838.3 981.9L895.0 1018.5M774.3 960.4L767.1 969.4M774.3 960.4L826.3 1006.7M831.4 996.3L826.3 1006.7M831.4 996.3L892.4 1029.8M767.1 969.4L762.7 974.9M767.1 969.4L823.3 1013.0M826.3 1006.7L823.3 1013.0M826.3 1006.7L890.9 1036.6M762.7 974.9L761.2 976.7M762.7 974.9L822.3 1015.1M823.3 1013.0L822.3 1015.1M823.3 1013.0L890.3 1038.9"/><path stroke="rgb(224,144,48)" d="M898.6 1003.0L962.0 1010.1M962.0 1010.1L1025.4 1003.0M895.0 1018.5L962.0 1026.1M892.4 1029.8L962.0 1037.6M890.9 1036.6L962.0 1044.7M890.3 1038.9L962.0 1047.0M903.0 983.4L962.0 1010.1M962.0 990.0L962.0 1010.1M898.6 1003.0L895.0 1018.5M898.6 1003.0L962.0 1026.1M962.0 1010.1L962.0 1026.1M895.0 1018.5L892.4 1029.8M895.0 1018.5L962.0 1037.6M892.4 1029.8L890.9 1036.6M892.4 1029.8L962.0 1044.7M890.9 1036.6L890.3 1038.9M890.9 1036.6L962.0 1047.0"/><path stroke="rgb(208,128,48)" d="M1025.4 1003.0L1085.7 981.9M1021.0 983.4L1025.4 1003.0M1021.0 983.4L1085.7 981.9"/><path stroke="rgb(176,112,48)" d="M1139.8 947.9L1184.9 902.8M1127.2 932.2L1139.8 947.9M1127.2 932.2L1184.9 902.8M1139.8 947.9L1197.4 912.7M1184.9 902.8L1197.4 912.7"/><path stroke="rgb(160,112,48)" d="M1184.9 902.8L1218.9 848.7M1197.4 912.7L1233.3 855.6M1169.2 890.2L1184.9 902.8M1169.2 890.2L1218.9 848.7M1184.9 902.8L1233.3 855.6M1218.9 848.7L1233.3 855.6M1233.3 855.6L1243.7 860.7M1243.7 860.7L1250.0 863.7M1250.0 863.7L1252.1 864.7"/><path stroke="rgb(96,208,64)" d="M1149.7 489.6L1092.6 453.7M1085.7 468.1L1092.6 453.7"/><path stroke="rgb(96,224,64)" d="M1092.6 453.7L1029.0 431.5M1029.0 431.5L962.0 423.9M1156.9 480.6L1097.7 443.3M1097.7 443.3L1031.6 420.2M1031.6 420.2L962.0 412.4M1161.3 475.1L1100.7 437.0M1100.7 437.0L1033.1 413.4M1033.1 413.4L962.0 405.3M1162.8 473.3L1101.7 434.9M1101.7 434.9L1033.7 411.1M1033.7 411.1L962.0 403.0M1149.7 489.6L1156.9 480.6M1149.7 489.6L1097.7 443.3M1092.6 453.7L1097.7 443.3M1092.6 453.7L1031.6 420.2M1029.0 431.5L1031.6 420.2M1029.0 431.5L962.0 412.4M962.0 423.9L962.0 412.4M1156.9 480.6L1161.3 475.1M1156.9 480.6L1100.7 437.0M1097.7 443.3L1100.7 437.0M1097.7 443.3L1033.1 413.4M1031.6 420.2L1033.1 413.4M1031.6 420.2L962.0 405.3M962.0 412.4L962.0 405.3M1161.3 475.1L1162.8 473.3M1161.3 475.1L1101.7 434.9M1100.7 437.0L1101.7 434.9M1100.7 437.0L1033.7 411.1M1033.1 413.4L1033.7 411.1M1033.1 413.4L962.0 403.0M962.0 405.3L962.0 403.0"/><path stroke="rgb(112,224,64)" d="M962.0 423.9L895.0 431.5M962.0 412.4L892.4 420.2M892.4 420.2L826.3 443.3M962.0 405.3L890.9 413.4M890.9 413.4L823.3 437.0M962.0 403.0L890.3 411.1M890.3 411.1L822.3 434.9M1025.4 447.0L1029.0 431.5M1025.4 447.0L962.0 423.9M962.0 439.9L962.0 423.9M962.0 423.9L892.4 420.2M895.0 431.5L892.4 420.2M895.0 431.5L826.3 443.3M962.0 412.4L890.9 413.4M892.4 420.2L890.9 413.4M892.4 420.2L823.3 437.0M962.0 405.3L890.3 411.1M890.9 413.4L890.3 411.1M890.9 413.4L822.3 434.9"/><path stroke="rgb(160,208,48)" d="M726.6 537.3L690.7 594.4M717.6 530.1L680.3 589.3M712.1 525.7L674.0 586.3M710.3 524.2L671.9 585.3M739.1 547.2L726.6 537.3M739.1 547.2L690.7 594.4M705.1 601.3L690.7 594.4M726.6 537.3L680.3 589.3M690.7 594.4L680.3 589.3M717.6 530.1L674.0 586.3M680.3 589.3L674.0 586.3M712.1 525.7L671.9 585.3M674.0 586.3L671.9 585.3"/><path stroke="rgb(176,208,48)" d="M690.7 594.4L668.5 658.0M680.3 589.3L657.2 655.4M674.0 586.3L650.4 653.9M671.9 585.3L648.1 653.3M690.7 594.4L657.2 655.4M668.5 658.0L657.2 655.4M680.3 589.3L650.4 653.9M657.2 655.4L650.4 653.9M674.0 586.3L648.1 653.3M650.4 653.9L648.1 653.3"/><path stroke="rgb(224,176,48)" d="M726.6 912.7L774.3 960.4M717.6 919.9L767.1 969.4M712.1 924.3L762.7 974.9M710.3 925.8L761.2 976.7M739.1 902.8L774.3 960.4M726.6 912.7L717.6 919.9M726.6 912.7L767.1 969.4M717.6 919.9L712.1 924.3M717.6 919.9L762.7 974.9M712.1 924.3L710.3 925.8M712.1 924.3L761.2 976.7"/><path stroke="rgb(224,128,32)" d="M962.0 1026.1L1029.0 1018.5M962.0 1037.6L1031.6 1029.8M962.0 1044.7L1033.1 1036.6M962.0 1047.0L1033.7 1038.9M962.0 1026.1L1031.6 1029.8M1029.0 1018.5L1031.6 1029.8M962.0 1037.6L1033.1 1036.6M1031.6 1029.8L1033.1 1036.6M962.0 1044.7L1033.7 1038.9M1033.1 1036.6L1033.7 1038.9"/><path stroke="rgb(208,128,32)" d="M1029.0 1018.5L1092.6 996.3M1025.4 1003.0L1029.0 1018.5M1025.4 1003.0L1092.6 996.3"/><path stroke="rgb(192,208,48)" d="M657.2 655.4L649.4 725.0M650.4 653.9L642.3 725.0M648.1 653.3L640.0 725.0M668.5 658.0L649.4 725.0M657.2 655.4L642.3 725.0M650.4 653.9L640.0 725.0"/><path stroke="rgb(208,112,32)" d="M1031.6 1029.8L1097.7 1006.7M1097.7 1006.7L1156.9 969.4M1033.1 1036.6L1100.7 1013.0M1100.7 1013.0L1161.3 974.9M1033.7 1038.9L1101.7 1015.1M1101.7 1015.1L1162.8 976.7M1085.7 981.9L1092.6 996.3M1029.0 1018.5L1097.7 1006.7M1092.6 996.3L1097.7 1006.7M1092.6 996.3L1156.9 969.4M1031.6 1029.8L1100.7 1013.0M1097.7 1006.7L1100.7 1013.0M1097.7 1006.7L1161.3 974.9M1033.1 1036.6L1101.7 1015.1M1100.7 1013.0L1101.7 1015.1M1100.7 1013.0L1162.8 976.7"/><path stroke="rgb(160,96,32)" d="M1206.4 919.9L1243.7 860.7M1211.9 924.3L1250.0 863.7M1213.7 925.8L1252.1 864.7M1197.4 912.7L1243.7 860.7M1206.4 919.9L1250.0 863.7M1211.9 924.3L1252.1 864.7"/><path stroke="rgb(224,128,48)" d="M962.0 1010.1L1029.0 1018.5"/><path stroke="rgb(128,224,64)" d="M831.4 453.7L826.3 443.3M826.3 443.3L823.3 437.0M823.3 437.0L822.3 434.9"/><path stroke="rgb(224,144,32)" d="M962.0 1026.1L962.0 1037.6M962.0 1037.6L962.0 1044.7M962.0 1044.7L962.0 1047.0"/><path stroke="rgb(176,96,32)" d="M1197.4 912.7L1206.4 919.9M1206.4 919.9L1211.9 924.3M1211.9 924.3L1213.7 925.8"/><path stroke="rgb(176,128,32)" d="M995.6 722.6L994.2 715.2M962.0 725.0L994.2 715.2M962.0 725.0L994.2 715.2M995.6 722.6L1028.8 720.3M994.2 715.2L1028.8 720.3"/><path stroke="rgb(176,112,32)" d="M994.2 715.2L991.2 708.3M991.2 708.3L986.8 702.2M1028.8 720.3L1026.1 705.6M1026.1 705.6L1020.1 691.8M924.0 780.1L937.2 787.2M937.2 787.2L951.7 791.2M747.5 577.2L720.0 628.7M720.0 628.7L704.6 684.9M1219.4 765.1L1221.9 706.8M1221.1 828.1L1237.5 767.9M962.0 725.0L991.2 708.3M962.0 725.0L991.2 708.3M994.2 715.2L1026.1 705.6M991.2 708.3L1020.1 691.8M991.2 708.3L1026.1 705.6M937.2 747.8L912.7 770.3M942.9 752.7L924.0 780.1M942.9 752.7L912.7 770.3M1028.8 720.3L1061.3 718.0M1026.1 705.6L1061.3 718.0M951.7 791.2L946.7 823.3M966.7 791.8L946.7 823.3M800.1 548.8L785.7 533.2M764.9 589.3L747.5 577.2M764.9 589.3L785.7 533.2M739.7 636.5L720.0 628.7M739.7 636.5L747.5 577.2M725.6 688.2L704.6 684.9M725.6 688.2L720.0 628.7M723.3 741.7L704.6 684.9M1221.9 706.8L1237.5 767.9M1219.4 765.1L1237.5 767.9M1237.5 767.9L1235.3 833.8M1235.3 833.8L1246.5 838.2"/><path stroke="rgb(176,96,32)" d="M986.8 702.2L981.1 697.3M929.8 734.8L932.8 741.7M932.8 741.7L937.2 747.8M1020.1 691.8L1011.3 679.7M1011.3 679.7L1000.0 669.9M903.9 758.2L912.7 770.3M912.7 770.3L924.0 780.1M1061.3 718.0L1057.2 696.1M1057.2 696.1L1048.4 675.7M1048.4 675.7L1035.3 657.7M888.7 792.3L905.6 806.9M905.6 806.9L925.2 817.4M925.2 817.4L946.7 823.3M946.7 823.3L969.0 824.3M1060.3 740.3L1061.3 718.0M899.5 518.8L855.2 537.9M761.8 645.3L749.1 691.9M749.1 691.9L747.1 740.1M747.1 740.1L755.8 787.5M843.3 517.2L800.1 548.8M800.1 548.8L764.9 589.3M764.9 589.3L739.7 636.5M739.7 636.5L725.6 688.2M725.6 688.2L723.3 741.7M1184.3 813.5L1198.4 761.8M1198.4 761.8L1200.7 708.3M1204.0 821.3L1219.4 765.1M1161.0 941.6L1204.2 891.9M1169.2 950.5L1214.2 898.7M1175.1 956.9L1221.4 903.7M1178.7 960.8L1225.7 906.7M1179.9 962.1L1227.2 907.7M962.0 725.0L986.8 702.2M962.0 725.0L981.1 697.3M962.0 725.0L986.8 702.2M962.0 725.0L981.1 697.3M962.0 725.0L932.8 741.7M962.0 725.0L932.8 741.7M986.8 702.2L1011.3 679.7M986.8 702.2L1020.1 691.8M981.1 697.3L1011.3 679.7M932.8 741.7L903.9 758.2M937.2 747.8L903.9 758.2M1026.1 705.6L1057.2 696.1M1020.1 691.8L1048.4 675.7M1020.1 691.8L1057.2 696.1M1011.3 679.7L1035.3 657.7M1011.3 679.7L1048.4 675.7M1000.0 669.9L1035.3 657.7M912.7 770.3L888.7 792.3M912.7 770.3L875.6 774.3M924.0 780.1L905.6 806.9M924.0 780.1L888.7 792.3M937.2 787.2L925.2 817.4M937.2 787.2L905.6 806.9M951.7 791.2L925.2 817.4M1061.3 718.0L1091.4 745.1M969.0 824.3L971.2 855.6M969.0 824.3L941.9 854.4M990.9 820.2L1000.0 850.3M990.9 820.2L971.2 855.6M1176.9 709.9L1198.4 761.8M855.2 537.9L843.3 517.2M816.2 566.4L800.1 548.8M816.2 566.4L843.3 517.2M784.6 602.8L764.9 589.3M784.6 602.8L800.1 548.8M761.8 645.3L739.7 636.5M761.8 645.3L764.9 589.3M749.1 691.9L725.6 688.2M749.1 691.9L739.7 636.5M747.1 740.1L723.3 741.7M747.1 740.1L725.6 688.2M755.8 787.5L723.3 741.7M1174.9 758.1L1198.4 761.8M1200.7 708.3L1219.4 765.1M1198.4 761.8L1219.4 765.1M1198.4 761.8L1204.0 821.3M1204.0 821.3L1221.1 828.1M1219.4 765.1L1221.1 828.1M1150.7 930.3L1161.0 941.6M1221.1 828.1L1235.3 833.8M1204.2 891.9L1214.2 898.7M1204.2 891.9L1169.2 950.5M1214.2 898.7L1221.4 903.7M1214.2 898.7L1175.1 956.9M1221.4 903.7L1225.7 906.7M1221.4 903.7L1178.7 960.8M1225.7 906.7L1227.2 907.7M1225.7 906.7L1179.9 962.1"/><path stroke="rgb(176,80,32)" d="M981.1 697.3L974.4 693.7M974.4 693.7L967.2 691.7M928.4 727.4L929.8 734.8M1000.0 669.9L986.8 662.8M986.8 662.8L972.3 658.8M895.2 729.7L897.9 744.4M897.9 744.4L903.9 758.2M1035.3 657.7L1018.4 643.1M1018.4 643.1L998.8 632.6M998.8 632.6L977.3 626.7M977.3 626.7L955.0 625.7M862.7 732.0L866.8 753.9M866.8 753.9L875.6 774.3M875.6 774.3L888.7 792.3M1092.6 715.8L1087.3 687.0M1058.4 636.4L1036.3 617.1M1036.3 617.1L1010.4 603.3M1010.4 603.3L982.1 595.6M982.1 595.6L952.8 594.4M832.6 704.9L831.4 734.2M831.4 734.2L836.7 763.0M836.7 763.0L848.3 789.9M848.3 789.9L865.6 813.6M865.6 813.6L887.7 832.9M887.7 832.9L913.6 846.7M913.6 846.7L941.9 854.4M941.9 854.4L971.2 855.6M971.2 855.6L1000.0 850.3M1000.0 850.3L1026.9 838.7M1091.4 745.1L1092.6 715.8M1053.3 592.4L1021.5 575.4M1021.5 575.4L986.8 565.9M986.8 565.9L950.7 564.4M950.7 564.4L915.3 570.9M915.3 570.9L882.2 585.2M882.2 585.2L853.1 606.5M829.4 633.7L812.4 665.5M812.4 665.5L802.9 700.2M802.9 700.2L801.4 736.3M801.4 736.3L807.9 771.7M807.9 771.7L822.2 804.8M822.2 804.8L843.5 833.9M843.5 833.9L870.7 857.6M870.7 857.6L902.5 874.6M902.5 874.6L937.2 884.1M937.2 884.1L973.3 885.6M973.3 885.6L1008.7 879.1M1008.7 879.1L1041.8 864.8M1041.8 864.8L1070.9 843.5M1094.6 816.3L1111.6 784.5M1111.6 784.5L1121.1 749.8M1121.1 749.8L1122.6 713.7M991.1 538.0L948.8 536.2M948.8 536.2L907.1 543.9M907.1 543.9L868.2 560.6M868.2 560.6L833.9 585.6M833.9 585.6L806.1 617.6M806.1 617.6L786.2 655.0M786.2 655.0L775.0 695.9M775.0 695.9L773.2 738.2M773.2 738.2L780.9 779.9M780.9 779.9L797.6 818.8M797.6 818.8L822.6 853.1M822.6 853.1L854.6 880.9M854.6 880.9L892.0 900.8M892.0 900.8L932.9 912.0M932.9 912.0L975.2 913.8M975.2 913.8L1016.9 906.1M1016.9 906.1L1055.8 889.4M1055.8 889.4L1090.1 864.4M1090.1 864.4L1117.9 832.4M1117.9 832.4L1137.8 795.0M1137.8 795.0L1149.0 754.1M1149.0 754.1L1150.8 711.8M855.2 537.9L816.2 566.4M816.2 566.4L784.6 602.8M784.6 602.8L761.8 645.3M977.1 939.9L1024.5 931.2M1024.5 931.2L1068.8 912.1M1068.8 912.1L1107.8 883.6M1107.8 883.6L1139.4 847.2M1139.4 847.2L1162.2 804.7M1162.2 804.7L1174.9 758.1M1174.9 758.1L1176.9 709.9M1031.4 954.0L1080.7 932.8M1080.7 932.8L1123.9 901.2M1123.9 901.2L1159.1 860.7M1159.1 860.7L1184.3 813.5M1091.2 951.2L1138.3 916.8M1138.3 916.8L1176.5 872.8M1176.5 872.8L1204.0 821.3M1100.3 967.2L1150.7 930.3M1150.7 930.3L1191.6 883.2M962.0 725.0L974.4 693.7M962.0 725.0L974.4 693.7M962.0 725.0L928.4 727.4M962.0 725.0L929.8 734.8M962.0 725.0L928.4 727.4M962.0 725.0L929.8 734.8M981.1 697.3L1000.0 669.9M974.4 693.7L986.8 662.8M974.4 693.7L1000.0 669.9M967.2 691.7L972.3 658.8M967.2 691.7L986.8 662.8M928.4 727.4L895.2 729.7M929.8 734.8L897.9 744.4M929.8 734.8L895.2 729.7M932.8 741.7L897.9 744.4M1000.0 669.9L1018.4 643.1M986.8 662.8L998.8 632.6M986.8 662.8L1018.4 643.1M972.3 658.8L977.3 626.7M972.3 658.8L998.8 632.6M895.2 729.7L862.7 732.0M897.9 744.4L866.8 753.9M897.9 744.4L862.7 732.0M903.9 758.2L875.6 774.3M903.9 758.2L866.8 753.9M1018.4 643.1L1036.3 617.1M1018.4 643.1L1058.4 636.4M998.8 632.6L1010.4 603.3M998.8 632.6L1036.3 617.1M977.3 626.7L982.1 595.6M977.3 626.7L1010.4 603.3M955.0 625.7L982.1 595.6M862.7 732.0L831.4 734.2M866.8 753.9L836.7 763.0M866.8 753.9L831.4 734.2M875.6 774.3L848.3 789.9M875.6 774.3L836.7 763.0M888.7 792.3L865.6 813.6M888.7 792.3L848.3 789.9M905.6 806.9L887.7 832.9M905.6 806.9L865.6 813.6M925.2 817.4L913.6 846.7M925.2 817.4L887.7 832.9M946.7 823.3L941.9 854.4M946.7 823.3L913.6 846.7M1092.6 715.8L1122.6 713.7M1092.6 715.8L1121.1 749.8M1087.3 687.0L1116.1 678.3M1087.3 687.0L1122.6 713.7M1075.7 660.1L1116.1 678.3M1036.3 617.1L1053.3 592.4M1010.4 603.3L1021.5 575.4M1010.4 603.3L1053.3 592.4M982.1 595.6L986.8 565.9M982.1 595.6L1021.5 575.4M952.8 594.4L950.7 564.4M952.8 594.4L986.8 565.9M924.0 599.7L915.3 570.9M924.0 599.7L950.7 564.4M832.6 704.9L802.9 700.2M831.4 734.2L801.4 736.3M831.4 734.2L802.9 700.2M836.7 763.0L807.9 771.7M836.7 763.0L801.4 736.3M848.3 789.9L822.2 804.8M848.3 789.9L807.9 771.7M865.6 813.6L843.5 833.9M865.6 813.6L822.2 804.8M887.7 832.9L870.7 857.6M887.7 832.9L843.5 833.9M913.6 846.7L902.5 874.6M913.6 846.7L870.7 857.6M941.9 854.4L937.2 884.1M941.9 854.4L902.5 874.6M971.2 855.6L973.3 885.6M971.2 855.6L937.2 884.1M1000.0 850.3L1008.7 879.1M1000.0 850.3L973.3 885.6M1026.9 838.7L1041.8 864.8M1026.9 838.7L1008.7 879.1M1050.6 821.4L1041.8 864.8M1069.9 799.3L1094.6 816.3M1083.7 773.4L1111.6 784.5M1083.7 773.4L1094.6 816.3M1091.4 745.1L1121.1 749.8M1091.4 745.1L1111.6 784.5M1122.6 713.7L1149.0 754.1M986.8 565.9L991.1 538.0M986.8 565.9L1032.0 549.2M950.7 564.4L948.8 536.2M950.7 564.4L991.1 538.0M915.3 570.9L907.1 543.9M915.3 570.9L948.8 536.2M882.2 585.2L868.2 560.6M882.2 585.2L907.1 543.9M853.1 606.5L833.9 585.6M853.1 606.5L868.2 560.6M829.4 633.7L806.1 617.6M829.4 633.7L833.9 585.6M812.4 665.5L786.2 655.0M812.4 665.5L806.1 617.6M802.9 700.2L775.0 695.9M802.9 700.2L786.2 655.0M801.4 736.3L773.2 738.2M801.4 736.3L775.0 695.9M807.9 771.7L780.9 779.9M807.9 771.7L773.2 738.2M822.2 804.8L797.6 818.8M822.2 804.8L780.9 779.9M843.5 833.9L822.6 853.1M843.5 833.9L797.6 818.8M870.7 857.6L854.6 880.9M870.7 857.6L822.6 853.1M902.5 874.6L892.0 900.8M902.5 874.6L854.6 880.9M937.2 884.1L932.9 912.0M937.2 884.1L892.0 900.8M973.3 885.6L975.2 913.8M973.3 885.6L932.9 912.0M1008.7 879.1L1016.9 906.1M1008.7 879.1L975.2 913.8M1041.8 864.8L1055.8 889.4M1041.8 864.8L1016.9 906.1M1070.9 843.5L1090.1 864.4M1070.9 843.5L1055.8 889.4M1094.6 816.3L1117.9 832.4M1094.6 816.3L1090.1 864.4M1111.6 784.5L1137.8 795.0M1111.6 784.5L1117.9 832.4M1121.1 749.8L1149.0 754.1M1121.1 749.8L1137.8 795.0M1150.8 711.8L1174.9 758.1M907.1 543.9L899.5 518.8M907.1 543.9L946.9 510.1M868.2 560.6L855.2 537.9M868.2 560.6L899.5 518.8M833.9 585.6L816.2 566.4M833.9 585.6L855.2 537.9M806.1 617.6L784.6 602.8M806.1 617.6L816.2 566.4M786.2 655.0L761.8 645.3M786.2 655.0L784.6 602.8M775.0 695.9L749.1 691.9M775.0 695.9L761.8 645.3M773.2 738.2L747.1 740.1M773.2 738.2L749.1 691.9M780.9 779.9L755.8 787.5M780.9 779.9L747.1 740.1M797.6 818.8L774.9 831.8M797.6 818.8L755.8 787.5M975.2 913.8L977.1 939.9M1016.9 906.1L1024.5 931.2M1016.9 906.1L977.1 939.9M1055.8 889.4L1068.8 912.1M1055.8 889.4L1024.5 931.2M1090.1 864.4L1107.8 883.6M1090.1 864.4L1068.8 912.1M1117.9 832.4L1139.4 847.2M1117.9 832.4L1107.8 883.6M1137.8 795.0L1162.2 804.7M1137.8 795.0L1139.4 847.2M1149.0 754.1L1174.9 758.1M1149.0 754.1L1162.2 804.7M1024.5 931.2L1031.4 954.0M1068.8 912.1L1080.7 932.8M1068.8 912.1L1031.4 954.0M1107.8 883.6L1123.9 901.2M1107.8 883.6L1080.7 932.8M1139.4 847.2L1159.1 860.7M1139.4 847.2L1123.9 901.2M1162.2 804.7L1184.3 813.5M1162.2 804.7L1159.1 860.7M1174.9 758.1L1184.3 813.5M1080.7 932.8L1091.2 951.2M1123.9 901.2L1138.3 916.8M1123.9 901.2L1091.2 951.2M1159.1 860.7L1176.5 872.8M1159.1 860.7L1138.3 916.8M1184.3 813.5L1204.0 821.3M1184.3 813.5L1176.5 872.8M1138.3 916.8L1150.7 930.3M1138.3 916.8L1100.3 967.2M1176.5 872.8L1191.6 883.2M1176.5 872.8L1150.7 930.3M1191.6 883.2L1204.2 891.9M1191.6 883.2L1161.0 941.6"/><path stroke="rgb(176,64,32)" d="M967.2 691.7L959.6 691.4M959.6 691.4L952.2 692.8M952.2 692.8L945.3 695.8M934.3 705.9L930.7 712.6M930.7 712.6L928.7 719.8M928.7 719.8L928.4 727.4M972.3 658.8L957.3 658.2M957.3 658.2L942.6 660.9M942.6 660.9L928.8 666.9M928.8 666.9L916.7 675.7M916.7 675.7L906.9 687.0M906.9 687.0L899.8 700.2M899.8 700.2L895.8 714.7M895.8 714.7L895.2 729.7M955.0 625.7L933.1 629.8M933.1 629.8L912.7 638.6M912.7 638.6L894.7 651.7M894.7 651.7L880.1 668.6M880.1 668.6L869.6 688.2M869.6 688.2L863.7 709.7M863.7 709.7L862.7 732.0M952.8 594.4L924.0 599.7M924.0 599.7L897.1 611.3M897.1 611.3L873.4 628.6M873.4 628.6L854.1 650.7M854.1 650.7L840.3 676.6M840.3 676.6L832.6 704.9M853.1 606.5L829.4 633.7M962.0 725.0L967.2 691.7M962.0 725.0L959.6 691.4M962.0 725.0L967.2 691.7M962.0 725.0L952.2 692.8M962.0 725.0L959.6 691.4M962.0 725.0L952.2 692.8M962.0 725.0L930.7 712.6M962.0 725.0L928.7 719.8M962.0 725.0L930.7 712.6M962.0 725.0L928.7 719.8M959.6 691.4L957.3 658.2M959.6 691.4L972.3 658.8M952.2 692.8L942.6 660.9M952.2 692.8L957.3 658.2M945.3 695.8L928.8 666.9M945.3 695.8L942.6 660.9M930.7 712.6L899.8 700.2M930.7 712.6L906.9 687.0M928.7 719.8L895.8 714.7M928.7 719.8L899.8 700.2M928.4 727.4L895.8 714.7M957.3 658.2L955.0 625.7M957.3 658.2L977.3 626.7M942.6 660.9L933.1 629.8M942.6 660.9L955.0 625.7M928.8 666.9L912.7 638.6M928.8 666.9L933.1 629.8M916.7 675.7L894.7 651.7M916.7 675.7L912.7 638.6M906.9 687.0L880.1 668.6M906.9 687.0L894.7 651.7M899.8 700.2L869.6 688.2M899.8 700.2L880.1 668.6M895.8 714.7L863.7 709.7M895.8 714.7L869.6 688.2M895.2 729.7L863.7 709.7M955.0 625.7L952.8 594.4M933.1 629.8L924.0 599.7M933.1 629.8L952.8 594.4M912.7 638.6L897.1 611.3M912.7 638.6L924.0 599.7M894.7 651.7L873.4 628.6M894.7 651.7L897.1 611.3M880.1 668.6L854.1 650.7M880.1 668.6L873.4 628.6M869.6 688.2L840.3 676.6M869.6 688.2L854.1 650.7M863.7 709.7L832.6 704.9M863.7 709.7L840.3 676.6M862.7 732.0L832.6 704.9M897.1 611.3L882.2 585.2M897.1 611.3L915.3 570.9M873.4 628.6L853.1 606.5M873.4 628.6L882.2 585.2M854.1 650.7L829.4 633.7M854.1 650.7L853.1 606.5M840.3 676.6L812.4 665.5M840.3 676.6L829.4 633.7M832.6 704.9L812.4 665.5"/><path stroke="rgb(176,48,32)" d="M945.3 695.8L939.2 700.2M939.2 700.2L934.3 705.9M962.0 725.0L945.3 695.8M962.0 725.0L939.2 700.2M962.0 725.0L945.3 695.8M962.0 725.0L934.3 705.9M962.0 725.0L939.2 700.2M962.0 725.0L934.3 705.9M939.2 700.2L916.7 675.7M939.2 700.2L928.8 666.9M934.3 705.9L906.9 687.0M934.3 705.9L916.7 675.7"/><path stroke="rgb(176,112,48)" d="M937.2 747.8L942.9 752.7M785.7 533.2L747.5 577.2M1235.3 833.8L1252.7 770.2M962.0 725.0L937.2 747.8M962.0 725.0L937.2 747.8M949.6 756.3L924.0 780.1M1252.7 770.2L1246.5 838.2M1246.5 838.2L1254.6 841.5"/><path stroke="rgb(160,128,48)" d="M942.9 752.7L949.6 756.3M949.6 756.3L956.8 758.3M966.7 791.8L981.4 789.1M1024.2 749.8L1028.2 735.3M943.8 465.1L886.4 475.7M886.4 475.7L832.8 498.8M773.3 519.7L732.4 566.8M962.0 725.0L942.9 752.7M962.0 725.0L942.9 752.7M995.6 722.6L1028.2 735.3M956.8 758.3L951.7 791.2M956.8 758.3L937.2 787.2M964.4 758.6L966.7 791.8M964.4 758.6L951.7 791.2M971.8 757.2L966.7 791.8M995.3 730.2L1028.2 735.3M995.3 730.2L1024.2 749.8M1221.9 706.8L1240.2 705.5M1211.3 649.4L1240.2 705.5M832.8 498.8L823.7 482.8M832.8 498.8L881.1 458.1M785.7 533.2L773.3 519.7M785.7 533.2L823.7 482.8M747.5 577.2L773.3 519.7M1259.5 843.4L1261.2 844.1"/><path stroke="rgb(160,144,48)" d="M956.8 758.3L964.4 758.6M993.3 737.4L995.3 730.2M995.3 730.2L995.6 722.6M1240.2 705.5L1228.9 644.1M823.7 482.8L773.3 519.7M1261.2 844.1L1280.2 774.5M962.0 725.0L949.6 756.3M962.0 725.0L956.8 758.3M962.0 725.0L949.6 756.3M962.0 725.0L956.8 758.3M1240.2 705.5L1255.4 704.4M773.3 519.7L763.0 508.4M773.3 519.7L816.1 469.5M732.4 566.8L719.8 558.1M732.4 566.8L763.0 508.4M1278.4 774.2L1261.2 844.1"/><path stroke="rgb(144,144,48)" d="M964.4 758.6L971.8 757.2M971.8 757.2L978.7 754.2M989.7 744.1L993.3 737.4M1228.9 644.1L1204.2 586.7M1204.2 586.7L1167.3 536.3M1167.3 536.3L1120.2 495.4M1120.2 495.4L1065.1 465.9M1065.1 465.9L1004.9 449.5M1004.9 449.5L942.5 446.8M942.5 446.8L881.1 458.1M881.1 458.1L823.7 482.8M978.7 754.2L995.2 783.1M978.7 754.2L981.4 789.1M984.8 749.8L995.2 783.1M989.7 744.1L1017.1 763.0M993.3 737.4L1024.2 749.8M993.3 737.4L1017.1 763.0M1228.9 644.1L1243.5 639.6M1228.9 644.1L1255.4 704.4M1204.2 586.7L1243.5 639.6M823.7 482.8L816.1 469.5M823.7 482.8L876.6 443.5"/><path stroke="rgb(128,160,48)" d="M978.7 754.2L984.8 749.8M984.8 749.8L989.7 744.1M1217.5 579.1L1178.6 526.0M1178.6 526.0L1128.9 482.8M1128.9 482.8L1070.8 451.7M1070.8 451.7L1007.2 434.3M1007.2 434.3L941.4 431.6M941.4 431.6L876.6 443.5M962.0 725.0L978.7 754.2M962.0 725.0L978.7 754.2M962.0 725.0L989.7 744.1M962.0 725.0L989.7 744.1M1204.2 586.7L1217.5 579.1M1167.3 536.3L1178.6 526.0M1120.2 495.4L1128.9 482.8M1120.2 495.4L1178.6 526.0M1065.1 465.9L1070.8 451.7M1065.1 465.9L1128.9 482.8M1004.9 449.5L1007.2 434.3M1004.9 449.5L1070.8 451.7M942.5 446.8L941.4 431.6M942.5 446.8L1007.2 434.3"/><path stroke="rgb(160,112,48)" d="M951.7 791.2L966.7 791.8M1138.2 563.1L1097.7 527.9M1221.9 706.8L1211.3 649.4M832.8 498.8L785.7 533.2M949.6 756.3L937.2 787.2M995.2 783.1L1011.3 811.4M1200.7 708.3L1221.9 706.8M1191.0 655.6L1211.3 649.4M1191.0 655.6L1221.9 706.8M1169.8 606.3L1211.3 649.4M998.8 488.6L1002.1 467.6M998.8 488.6L1058.3 483.0M945.3 486.3L943.8 465.1M945.3 486.3L1002.1 467.6M892.6 496.0L886.4 475.7M892.6 496.0L943.8 465.1M843.3 517.2L832.8 498.8M843.3 517.2L886.4 475.7M1254.6 841.5L1259.5 843.4"/><path stroke="rgb(144,128,48)" d="M981.4 789.1L995.2 783.1M995.2 783.1L1007.3 774.3M1007.3 774.3L1017.1 763.0M1017.1 763.0L1024.2 749.8M1211.3 649.4L1188.2 595.8M1188.2 595.8L1153.8 548.7M1153.8 548.7L1109.8 510.5M1109.8 510.5L1058.3 483.0M1058.3 483.0L1002.1 467.6M1002.1 467.6L943.8 465.1M971.8 757.2L981.4 789.1M1211.3 649.4L1228.9 644.1M1188.2 595.8L1204.2 586.7M1188.2 595.8L1228.9 644.1M1153.8 548.7L1167.3 536.3M1153.8 548.7L1204.2 586.7M1109.8 510.5L1120.2 495.4M1109.8 510.5L1167.3 536.3M1058.3 483.0L1065.1 465.9M1058.3 483.0L1120.2 495.4M1002.1 467.6L1004.9 449.5M1002.1 467.6L1065.1 465.9M943.8 465.1L942.5 446.8M943.8 465.1L1004.9 449.5M886.4 475.7L881.1 458.1M886.4 475.7L942.5 446.8"/><path stroke="rgb(160,112,32)" d="M1028.2 735.3L1028.8 720.3M1011.3 811.4L1029.3 798.3M1029.3 798.3L1043.9 781.4M1043.9 781.4L1054.4 761.8M1200.7 708.3L1191.0 655.6M1191.0 655.6L1169.8 606.3M1169.8 606.3L1138.2 563.1M1097.7 527.9L1050.5 502.7M1050.5 502.7L998.8 488.6M998.8 488.6L945.3 486.3M945.3 486.3L892.6 496.0M1028.8 720.3L1060.3 740.3M966.7 791.8L969.0 824.3M981.4 789.1L990.9 820.2M981.4 789.1L969.0 824.3M995.2 783.1L990.9 820.2M1024.2 749.8L1054.4 761.8M1024.2 749.8L1043.9 781.4M1028.2 735.3L1060.3 740.3M1028.2 735.3L1054.4 761.8M800.1 548.8L832.8 498.8"/><path stroke="rgb(160,96,32)" d="M969.0 824.3L990.9 820.2M990.9 820.2L1011.3 811.4M1054.4 761.8L1060.3 740.3M1176.9 709.9L1168.2 662.5M1168.2 662.5L1149.1 618.2M1149.1 618.2L1120.6 579.2M1120.6 579.2L1084.2 547.6M1084.2 547.6L1041.7 524.8M1041.7 524.8L995.1 512.1M995.1 512.1L946.9 510.1M946.9 510.1L899.5 518.8M892.6 496.0L843.3 517.2M1191.6 883.2L1221.1 828.1M1204.2 891.9L1235.3 833.8M1214.2 898.7L1246.5 838.2M1221.4 903.7L1254.6 841.5M1061.3 718.0L1092.6 715.8M1057.2 696.1L1087.3 687.0M1057.2 696.1L1092.6 715.8M1011.3 811.4L1026.9 838.7M1011.3 811.4L1000.0 850.3M1029.3 798.3L1050.6 821.4M1029.3 798.3L1026.9 838.7M1043.9 781.4L1069.9 799.3M1043.9 781.4L1050.6 821.4M1054.4 761.8L1083.7 773.4M1054.4 761.8L1069.9 799.3M1060.3 740.3L1091.4 745.1M1060.3 740.3L1083.7 773.4M1143.1 670.1L1168.2 662.5M1126.4 631.2L1149.1 618.2M1126.4 631.2L1168.2 662.5M1101.4 596.9L1120.6 579.2M1101.4 596.9L1149.1 618.2M1069.4 569.1L1084.2 547.6M1069.4 569.1L1120.6 579.2M1032.0 549.2L1041.7 524.8M1032.0 549.2L1084.2 547.6M991.1 538.0L995.1 512.1M991.1 538.0L1041.7 524.8M948.8 536.2L946.9 510.1M948.8 536.2L995.1 512.1M1176.9 709.9L1200.7 708.3M1168.2 662.5L1191.0 655.6M1168.2 662.5L1200.7 708.3M1149.1 618.2L1169.8 606.3M1149.1 618.2L1191.0 655.6M1120.6 579.2L1138.2 563.1M1120.6 579.2L1169.8 606.3M1084.2 547.6L1097.7 527.9M1084.2 547.6L1138.2 563.1M1041.7 524.8L1050.5 502.7M1041.7 524.8L1097.7 527.9M995.1 512.1L998.8 488.6M995.1 512.1L1050.5 502.7M946.9 510.1L945.3 486.3M946.9 510.1L998.8 488.6M899.5 518.8L892.6 496.0M899.5 518.8L945.3 486.3M855.2 537.9L892.6 496.0M1221.1 828.1L1204.2 891.9M1235.3 833.8L1214.2 898.7M1246.5 838.2L1221.4 903.7M1254.6 841.5L1225.7 906.7"/><path stroke="rgb(160,80,32)" d="M1087.3 687.0L1075.7 660.1M1075.7 660.1L1058.4 636.4M1026.9 838.7L1050.6 821.4M1050.6 821.4L1069.9 799.3M1069.9 799.3L1083.7 773.4M1083.7 773.4L1091.4 745.1M1122.6 713.7L1116.1 678.3M1116.1 678.3L1101.8 645.2M1101.8 645.2L1080.5 616.1M1080.5 616.1L1053.3 592.4M1070.9 843.5L1094.6 816.3M1150.8 711.8L1143.1 670.1M1143.1 670.1L1126.4 631.2M1126.4 631.2L1101.4 596.9M1101.4 596.9L1069.4 569.1M1069.4 569.1L1032.0 549.2M1032.0 549.2L991.1 538.0M1048.4 675.7L1075.7 660.1M1048.4 675.7L1087.3 687.0M1035.3 657.7L1058.4 636.4M1035.3 657.7L1075.7 660.1M1075.7 660.1L1101.8 645.2M1058.4 636.4L1080.5 616.1M1058.4 636.4L1101.8 645.2M1036.3 617.1L1080.5 616.1M1050.6 821.4L1070.9 843.5M1069.9 799.3L1070.9 843.5M1122.6 713.7L1150.8 711.8M1116.1 678.3L1143.1 670.1M1116.1 678.3L1150.8 711.8M1101.8 645.2L1126.4 631.2M1101.8 645.2L1143.1 670.1M1080.5 616.1L1101.4 596.9M1080.5 616.1L1126.4 631.2M1053.3 592.4L1069.4 569.1M1053.3 592.4L1101.4 596.9M1021.5 575.4L1032.0 549.2M1021.5 575.4L1069.4 569.1M1150.8 711.8L1176.9 709.9M1143.1 670.1L1176.9 709.9M1204.0 821.3L1191.6 883.2"/><path stroke="rgb(192,80,32)" d="M755.8 787.5L774.9 831.8M774.9 831.8L803.4 870.8M803.4 870.8L839.8 902.4M839.8 902.4L882.3 925.2M882.3 925.2L928.9 937.9M928.9 937.9L977.1 939.9M925.2 961.4L978.7 963.7M978.7 963.7L1031.4 954.0M1037.6 974.3L1091.2 951.2M822.6 853.1L803.4 870.8M822.6 853.1L774.9 831.8M854.6 880.9L839.8 902.4M854.6 880.9L803.4 870.8M892.0 900.8L882.3 925.2M892.0 900.8L839.8 902.4M932.9 912.0L928.9 937.9M932.9 912.0L882.3 925.2M975.2 913.8L928.9 937.9M882.3 925.2L873.5 947.3M882.3 925.2L826.3 922.1M928.9 937.9L925.2 961.4M928.9 937.9L873.5 947.3M977.1 939.9L978.7 963.7M977.1 939.9L925.2 961.4M1024.5 931.2L978.7 963.7M1031.4 954.0L1037.6 974.3M1031.4 954.0L980.2 984.9M1080.7 932.8L1037.6 974.3M1091.2 951.2L1100.3 967.2"/><path stroke="rgb(192,96,32)" d="M723.3 741.7L733.0 794.4M733.0 794.4L754.2 843.7M754.2 843.7L785.8 886.9M785.8 886.9L826.3 922.1M826.3 922.1L873.5 947.3M873.5 947.3L925.2 961.4M814.2 939.5L865.7 967.0M865.7 967.0L921.9 982.4M921.9 982.4L980.2 984.9M980.2 984.9L1037.6 974.3M981.5 1003.2L1042.9 991.9M1042.9 991.9L1100.3 967.2M1047.4 1006.5L1107.9 980.5M1107.9 980.5L1161.0 941.6M1113.8 990.9L1169.2 950.5M1118.2 998.5L1175.1 956.9M1120.8 1003.1L1178.7 960.8M1121.7 1004.6L1179.9 962.1M755.8 787.5L733.0 794.4M774.9 831.8L754.2 843.7M774.9 831.8L733.0 794.4M803.4 870.8L785.8 886.9M803.4 870.8L754.2 843.7M839.8 902.4L826.3 922.1M839.8 902.4L785.8 886.9M785.8 886.9L770.2 901.3M785.8 886.9L735.8 854.2M826.3 922.1L814.2 939.5M826.3 922.1L770.2 901.3M873.5 947.3L865.7 967.0M873.5 947.3L814.2 939.5M925.2 961.4L921.9 982.4M925.2 961.4L865.7 967.0M978.7 963.7L980.2 984.9M978.7 963.7L921.9 982.4M921.9 982.4L858.9 984.1M980.2 984.9L981.5 1003.2M1037.6 974.3L1042.9 991.9M1037.6 974.3L981.5 1003.2M1091.2 951.2L1042.9 991.9M1042.9 991.9L1047.4 1006.5M1100.3 967.2L1107.9 980.5M1100.3 967.2L1047.4 1006.5M1150.7 930.3L1107.9 980.5M1107.9 980.5L1113.8 990.9M1161.0 941.6L1169.2 950.5M1161.0 941.6L1113.8 990.9M1169.2 950.5L1175.1 956.9M1169.2 950.5L1118.2 998.5M1175.1 956.9L1178.7 960.8M1175.1 956.9L1120.8 1003.1M1178.7 960.8L1179.9 962.1M1178.7 960.8L1121.7 1004.6"/><path stroke="rgb(192,112,32)" d="M704.6 684.9L702.1 743.2M702.1 743.2L712.7 800.6M712.7 800.6L735.8 854.2M735.8 854.2L770.2 901.3M770.2 901.3L814.2 939.5M723.3 741.7L702.1 743.2M733.0 794.4L712.7 800.6M733.0 794.4L702.1 743.2M754.2 843.7L735.8 854.2M754.2 843.7L712.7 800.6M735.8 854.2L719.8 863.3M735.8 854.2L695.1 805.9M770.2 901.3L756.7 913.7M770.2 901.3L719.8 863.3M814.2 939.5L803.8 954.6M814.2 939.5L756.7 913.7M865.7 967.0L858.9 984.1M865.7 967.0L803.8 954.6"/><path stroke="rgb(176,128,48)" d="M732.4 566.8L702.9 621.9M702.9 621.9L686.5 682.1M1237.5 767.9L1240.2 705.5M1246.5 838.2L1264.6 772.1M1254.6 841.5L1273.2 773.4M747.5 577.2L732.4 566.8M720.0 628.7L702.9 621.9M720.0 628.7L732.4 566.8M704.6 684.9L686.5 682.1M704.6 684.9L702.9 621.9M1240.2 705.5L1252.7 770.2M1237.5 767.9L1252.7 770.2M1252.7 770.2L1264.6 772.1M1264.6 772.1L1254.6 841.5M1273.2 773.4L1259.5 843.4"/><path stroke="rgb(192,128,48)" d="M686.5 682.1L683.8 744.5M683.8 744.5L695.1 805.9M695.1 805.9L719.8 863.3M719.8 863.3L756.7 913.7M719.8 863.3L680.5 810.4"/><path stroke="rgb(208,112,32)" d="M756.7 913.7L803.8 954.6M803.8 954.6L858.9 984.1M858.9 984.1L919.1 1000.5M919.1 1000.5L981.5 1003.2M853.2 998.3L916.8 1015.7M916.8 1015.7L982.6 1018.4M982.6 1018.4L1047.4 1006.5M983.4 1030.5L1050.9 1018.1M1053.4 1026.4L1118.2 998.5M1054.9 1031.5L1120.8 1003.1M1055.4 1033.1L1121.7 1004.6M858.9 984.1L853.2 998.3M858.9 984.1L795.1 967.2M919.1 1000.5L916.8 1015.7M919.1 1000.5L853.2 998.3M981.5 1003.2L982.6 1018.4M981.5 1003.2L916.8 1015.7M982.6 1018.4L983.4 1030.5M1047.4 1006.5L1050.9 1018.1M1047.4 1006.5L983.4 1030.5M1050.9 1018.1L1053.4 1026.4M1053.4 1026.4L1054.9 1031.5M1118.2 998.5L1054.9 1031.5M1120.8 1003.1L1121.7 1004.6M1120.8 1003.1L1055.4 1033.1"/><path stroke="rgb(144,160,48)" d="M1255.4 704.4L1243.5 639.6M1243.5 639.6L1217.5 579.1M876.6 443.5L816.1 469.5M816.1 469.5L763.0 508.4M962.0 725.0L964.4 758.6M962.0 725.0L971.8 757.2M962.0 725.0L964.4 758.6M962.0 725.0L971.8 757.2M962.0 725.0L993.3 737.4M962.0 725.0L993.3 737.4M881.1 458.1L876.6 443.5M881.1 458.1L941.4 431.6M1243.5 639.6L1267.5 703.6"/><path stroke="rgb(160,160,48)" d="M763.0 508.4L719.8 558.1M962.0 725.0L995.3 730.2M962.0 725.0L995.3 730.2M719.8 558.1L709.8 551.3M719.8 558.1L754.8 499.5M688.7 616.2L709.8 551.3"/><path stroke="rgb(176,160,48)" d="M719.8 558.1L688.7 616.2M688.7 616.2L671.3 679.8M1264.6 772.1L1267.5 703.6M1273.2 773.4L1276.2 703.0M688.7 616.2L677.5 611.8M671.3 679.8L659.4 677.9M671.3 679.8L677.5 611.8M1267.5 703.6L1273.2 773.4M1273.2 773.4L1278.4 774.2M1278.4 774.2L1280.2 774.5"/><path stroke="rgb(192,160,48)" d="M671.3 679.8L668.6 745.6M656.5 746.4L668.9 813.9M668.6 745.6L656.5 746.4M668.6 745.6L659.4 677.9M680.5 810.4L668.9 813.9M680.5 810.4L656.5 746.4"/><path stroke="rgb(192,144,48)" d="M668.6 745.6L680.5 810.4M680.5 810.4L706.5 870.9M683.8 744.5L668.6 745.6M683.8 744.5L671.3 679.8M695.1 805.9L680.5 810.4M695.1 805.9L668.6 745.6"/><path stroke="rgb(208,144,48)" d="M706.5 870.9L745.4 924.0M736.5 932.2L788.3 977.2M706.5 870.9L696.1 876.8M706.5 870.9L668.9 813.9M745.4 924.0L736.5 932.2M745.4 924.0L696.1 876.8M795.1 967.2L788.3 977.2M795.1 967.2L736.5 932.2M788.3 977.2L730.1 938.1"/><path stroke="rgb(208,128,48)" d="M745.4 924.0L795.1 967.2M719.8 863.3L706.5 870.9M756.7 913.7L745.4 924.0M756.7 913.7L706.5 870.9M803.8 954.6L745.4 924.0M853.2 998.3L848.8 1009.5M853.2 998.3L788.3 977.2"/><path stroke="rgb(208,128,32)" d="M795.1 967.2L853.2 998.3M803.8 954.6L795.1 967.2M916.8 1015.7L848.8 1009.5"/><path stroke="rgb(176,144,48)" d="M1252.7 770.2L1255.4 704.4M1259.5 843.4L1278.4 774.2M962.0 725.0L995.6 722.6M962.0 725.0L995.6 722.6M702.9 621.9L688.7 616.2M702.9 621.9L719.8 558.1M686.5 682.1L671.3 679.8M686.5 682.1L688.7 616.2M1255.4 704.4L1264.6 772.1M1264.6 772.1L1273.2 773.4"/><path stroke="rgb(144,176,48)" d="M1267.5 703.6L1255.1 636.1M810.2 459.1L754.8 499.5M1243.5 639.6L1255.1 636.1M816.1 469.5L810.2 459.1M816.1 469.5L873.1 431.9M763.0 508.4L754.8 499.5M763.0 508.4L810.2 459.1M1255.1 636.1L1276.2 703.0"/><path stroke="rgb(128,176,48)" d="M1255.1 636.1L1227.9 573.2M1227.9 573.2L1187.5 517.8M873.1 431.9L810.2 459.1M1217.5 579.1L1227.9 573.2M1217.5 579.1L1255.1 636.1M1178.6 526.0L1187.5 517.8M1178.6 526.0L1227.9 573.2M1128.9 482.8L1187.5 517.8M1070.8 451.7L1135.7 472.8M1007.2 434.3L1075.2 440.5M941.4 431.6L940.6 419.5M941.4 431.6L1009.1 422.4M876.6 443.5L873.1 431.9M876.6 443.5L940.6 419.5"/><path stroke="rgb(112,176,48)" d="M1187.5 517.8L1135.7 472.8M962.0 725.0L984.8 749.8M962.0 725.0L984.8 749.8M1128.9 482.8L1135.7 472.8M1070.8 451.7L1075.2 440.5M1007.2 434.3L1009.1 422.4"/><path stroke="rgb(112,192,48)" d="M1135.7 472.8L1075.2 440.5M1075.2 440.5L1009.1 422.4M1009.1 422.4L940.6 419.5M1187.5 517.8L1235.5 568.8M1135.7 472.8L1193.9 511.9M1075.2 440.5L1140.7 465.6M1009.1 422.4L1078.5 432.4M940.6 419.5L1010.4 413.8"/><path stroke="rgb(128,192,48)" d="M940.6 419.5L873.1 431.9M1227.9 573.2L1263.4 633.6M873.1 431.9L940.0 410.8M810.2 459.1L870.6 423.6"/><path stroke="rgb(160,176,48)" d="M754.8 499.5L709.8 551.3M709.8 551.3L677.5 611.8M1255.4 704.4L1267.5 703.6M677.5 611.8L702.6 546.3"/><path stroke="rgb(176,176,48)" d="M677.5 611.8L659.4 677.9M1278.4 774.2L1281.5 702.6M1280.2 774.5L1283.2 702.5M677.5 611.8L669.4 608.5M659.4 677.9L669.4 608.5M1276.2 703.0L1278.4 774.2M1281.5 702.6L1280.2 774.5"/><path stroke="rgb(192,176,48)" d="M659.4 677.9L656.5 746.4M647.8 747.0L660.6 816.4M659.4 677.9L650.8 676.6M656.5 746.4L647.8 747.0M656.5 746.4L650.8 676.6M668.9 813.9L647.8 747.0"/><path stroke="rgb(208,160,48)" d="M668.9 813.9L696.1 876.8M696.1 876.8L736.5 932.2M688.5 881.2L730.1 938.1M696.1 876.8L688.5 881.2M696.1 876.8L660.6 816.4M736.5 932.2L730.1 938.1M736.5 932.2L688.5 881.2M730.1 938.1L683.9 883.8"/><path stroke="rgb(224,144,48)" d="M788.3 977.2L848.8 1009.5M783.3 984.4L845.5 1017.6M845.5 1017.6L913.6 1036.2M843.6 1022.5L912.8 1041.4M842.9 1024.2L912.5 1043.2M912.5 1043.2L984.5 1046.2M788.3 977.2L783.3 984.4M848.8 1009.5L845.5 1017.6M848.8 1009.5L783.3 984.4M845.5 1017.6L843.6 1022.5M845.5 1017.6L780.3 988.7M913.6 1036.2L912.8 1041.4M913.6 1036.2L843.6 1022.5M912.8 1041.4L912.5 1043.2M912.8 1041.4L842.9 1024.2"/><path stroke="rgb(224,128,32)" d="M848.8 1009.5L914.9 1027.6M914.9 1027.6L983.4 1030.5M913.6 1036.2L984.0 1039.2M984.4 1044.5L1054.9 1031.5M984.5 1046.2L1055.4 1033.1M916.8 1015.7L914.9 1027.6M914.9 1027.6L913.6 1036.2M983.4 1030.5L984.0 1039.2M983.4 1030.5L913.6 1036.2M984.0 1039.2L984.4 1044.5M984.0 1039.2L912.8 1041.4M1053.4 1026.4L984.4 1044.5M984.4 1044.5L984.5 1046.2M1054.9 1031.5L984.5 1046.2"/><path stroke="rgb(208,96,32)" d="M1050.9 1018.1L1113.8 990.9M921.9 982.4L919.1 1000.5M980.2 984.9L919.1 1000.5M1042.9 991.9L982.6 1018.4M1107.9 980.5L1050.9 1018.1M1113.8 990.9L1118.2 998.5M1113.8 990.9L1053.4 1026.4M1118.2 998.5L1120.8 1003.1"/><path stroke="rgb(144,192,64)" d="M1276.2 703.0L1263.4 633.6M1267.5 703.6L1276.2 703.0M1276.2 703.0L1281.5 702.6M1263.4 633.6L1281.5 702.6"/><path stroke="rgb(128,192,64)" d="M1263.4 633.6L1235.5 568.8M870.6 423.6L805.8 451.5M1255.1 636.1L1263.4 633.6M873.1 431.9L870.6 423.6M810.2 459.1L805.8 451.5M1235.5 568.8L1268.5 632.1"/><path stroke="rgb(112,192,64)" d="M1235.5 568.8L1193.9 511.9M1193.9 511.9L1140.7 465.6M1227.9 573.2L1235.5 568.8M1187.5 517.8L1193.9 511.9M1135.7 472.8L1140.7 465.6M1075.2 440.5L1078.5 432.4M1009.1 422.4L1010.4 413.8M940.6 419.5L940.0 410.8"/><path stroke="rgb(112,208,64)" d="M1140.7 465.6L1078.5 432.4M1078.5 432.4L1010.4 413.8M1010.4 413.8L940.0 410.8M940.0 410.8L870.6 423.6M1240.1 566.2L1197.8 508.3M1197.8 508.3L1143.7 461.3M939.6 405.5L869.1 418.5M1241.6 565.3L1199.1 507.1M1199.1 507.1L1144.7 459.8M939.5 403.8L868.6 416.9M1235.5 568.8L1240.1 566.2M1193.9 511.9L1197.8 508.3M1193.9 511.9L1240.1 566.2M1140.7 465.6L1143.7 461.3M1140.7 465.6L1197.8 508.3M1078.5 432.4L1143.7 461.3M1010.4 413.8L1080.4 427.5M940.0 410.8L939.6 405.5M940.0 410.8L1011.2 408.6M870.6 423.6L939.6 405.5M1240.1 566.2L1241.6 565.3M1197.8 508.3L1199.1 507.1M1197.8 508.3L1241.6 565.3M1143.7 461.3L1199.1 507.1M869.1 418.5L939.5 403.8"/><path stroke="rgb(144,192,48)" d="M805.8 451.5L748.9 493.1M754.8 499.5L748.9 493.1M754.8 499.5L805.8 451.5M702.6 546.3L745.3 489.2"/><path stroke="rgb(160,192,48)" d="M748.9 493.1L702.6 546.3M702.6 546.3L669.4 608.5M698.3 543.3L664.5 606.6M709.8 551.3L702.6 546.3M709.8 551.3L748.9 493.1M702.6 546.3L698.3 543.3M669.4 608.5L698.3 543.3M664.5 606.6L696.8 542.3"/><path stroke="rgb(176,192,48)" d="M669.4 608.5L650.8 676.6M664.5 606.6L645.6 675.8M662.8 605.9L643.8 675.5M669.4 608.5L664.5 606.6M650.8 676.6L664.5 606.6M645.6 675.8L662.8 605.9"/><path stroke="rgb(192,192,48)" d="M650.8 676.6L647.8 747.0M645.6 675.8L642.5 747.4M643.8 675.5L640.8 747.5M650.8 676.6L645.6 675.8M647.8 747.0L642.5 747.4M647.8 747.0L645.6 675.8M645.6 675.8L643.8 675.5M642.5 747.4L640.8 747.5M642.5 747.4L643.8 675.5"/><path stroke="rgb(208,176,48)" d="M660.6 816.4L688.5 881.2M655.5 817.9L683.9 883.8M683.9 883.8L726.2 941.7M653.9 818.4L682.4 884.7M668.9 813.9L660.6 816.4M660.6 816.4L655.5 817.9M660.6 816.4L642.5 747.4M688.5 881.2L683.9 883.8M688.5 881.2L655.5 817.9M683.9 883.8L682.4 884.7M683.9 883.8L653.9 818.4M726.2 941.7L682.4 884.7"/><path stroke="rgb(224,160,48)" d="M730.1 938.1L783.3 984.4M726.2 941.7L780.3 988.7M780.3 988.7L843.6 1022.5M724.9 942.9L779.3 990.2M779.3 990.2L842.9 1024.2M730.1 938.1L726.2 941.7M783.3 984.4L780.3 988.7M783.3 984.4L726.2 941.7M780.3 988.7L779.3 990.2M780.3 988.7L724.9 942.9M843.6 1022.5L842.9 1024.2M843.6 1022.5L779.3 990.2"/><path stroke="rgb(224,112,32)" d="M984.0 1039.2L1053.4 1026.4M982.6 1018.4L914.9 1027.6M1050.9 1018.1L984.0 1039.2M1054.9 1031.5L1055.4 1033.1"/><path stroke="rgb(144,208,64)" d="M1281.5 702.6L1268.5 632.1M803.2 446.9L745.3 489.2M1283.2 702.5L1270.1 631.6M802.3 445.4L744.1 487.9M744.1 487.9L696.8 542.3M748.9 493.1L745.3 489.2M748.9 493.1L803.2 446.9M1281.5 702.6L1283.2 702.5M1268.5 632.1L1283.2 702.5M745.3 489.2L744.1 487.9M745.3 489.2L802.3 445.4"/><path stroke="rgb(128,208,64)" d="M1268.5 632.1L1240.1 566.2M869.1 418.5L803.2 446.9M1270.1 631.6L1241.6 565.3M868.6 416.9L802.3 445.4M1263.4 633.6L1268.5 632.1M870.6 423.6L869.1 418.5M805.8 451.5L803.2 446.9M805.8 451.5L869.1 418.5M1268.5 632.1L1270.1 631.6M1240.1 566.2L1270.1 631.6M803.2 446.9L802.3 445.4M803.2 446.9L868.6 416.9"/><path stroke="rgb(96,208,64)" d="M1143.7 461.3L1080.4 427.5M1080.4 427.5L1011.2 408.6M1011.2 408.6L939.6 405.5M1144.7 459.8L1081.1 425.8M1081.1 425.8L1011.5 406.8M1078.5 432.4L1080.4 427.5M1010.4 413.8L1011.2 408.6M1143.7 461.3L1144.7 459.8M1080.4 427.5L1144.7 459.8M1011.2 408.6L1081.1 425.8M939.6 405.5L1011.5 406.8"/><path stroke="rgb(144,208,48)" d="M745.3 489.2L698.3 543.3M698.3 543.3L744.1 487.9"/><path stroke="rgb(208,192,48)" d="M642.5 747.4L655.5 817.9M640.8 747.5L653.9 818.4M655.5 817.9L653.9 818.4M655.5 817.9L640.8 747.5"/><path stroke="rgb(224,144,32)" d="M912.8 1041.4L984.4 1044.5M984.4 1044.5L912.5 1043.2"/><path stroke="rgb(160,96,48)" d="M1225.7 906.7L1259.5 843.4M1227.2 907.7L1261.2 844.1M1259.5 843.4L1227.2 907.7"/><path stroke="rgb(96,224,64)" d="M1011.5 406.8L939.5 403.8M1080.4 427.5L1081.1 425.8M1011.2 408.6L1011.5 406.8"/><path stroke="rgb(160,208,48)" d="M696.8 542.3L662.8 605.9M698.3 543.3L696.8 542.3"/><path stroke="rgb(224,176,48)" d="M682.4 884.7L724.9 942.9M726.2 941.7L724.9 942.9"/><path stroke="rgb(128,144,48)" d="M984.8 749.8L1007.3 774.3M989.7 744.1L1007.3 774.3M1167.3 536.3L1217.5 579.1"/><path stroke="rgb(144,112,48)" d="M1007.3 774.3L1029.3 798.3M1007.3 774.3L1011.3 811.4M1017.1 763.0L1043.9 781.4M1017.1 763.0L1029.3 798.3M1169.8 606.3L1188.2 595.8M1138.2 563.1L1153.8 548.7M1138.2 563.1L1188.2 595.8M1097.7 527.9L1109.8 510.5M1097.7 527.9L1153.8 548.7M1050.5 502.7L1058.3 483.0M1050.5 502.7L1109.8 510.5"/><path stroke="rgb(192,128,32)" d="M702.1 743.2L683.8 744.5M702.1 743.2L686.5 682.1M712.7 800.6L695.1 805.9M712.7 800.6L683.8 744.5"/><path stroke="rgb(224,128,48)" d="M914.9 1027.6L845.5 1017.6"/><path stroke="rgb(112,224,64)" d="M939.6 405.5L939.5 403.8M869.1 418.5L868.6 416.9"/><path stroke="rgb(176,208,48)" d="M664.5 606.6L662.8 605.9"/><path stroke="rgb(176,176,48)" d="M1003.6 718.7L1001.1 709.6M1003.9 728.1L1003.6 718.7M884.4 755.5L893.2 772.0M893.2 772.0L905.3 786.1M847.3 770.1L860.2 794.5M860.2 794.5L878.2 815.4M878.2 815.4L900.4 831.7M900.4 831.7L925.7 842.8M925.7 842.8L952.8 847.9M801.4 713.0L802.8 749.1M802.8 749.1L812.2 783.9M812.2 783.9L829.0 815.7M829.0 815.7L852.5 843.1M852.5 843.1L881.6 864.5M881.6 864.5L914.6 878.9M792.2 627.1L774.7 667.3M774.7 667.3L766.5 710.4M764.8 611.2L744.4 658.0M744.4 658.0L734.9 708.1M962.0 725.0L1003.6 718.7M962.0 725.0L1003.6 718.7M927.3 748.7L893.2 772.0M933.4 755.8L893.2 772.0M893.2 772.0L860.2 794.5M893.2 772.0L847.3 770.1M905.3 786.1L878.2 815.4M905.3 786.1L860.2 794.5M920.4 797.2L900.4 831.7M920.4 797.2L878.2 815.4M937.5 804.6L900.4 831.7M847.3 770.1L812.2 783.9M847.3 770.1L802.8 749.1M860.2 794.5L829.0 815.7M860.2 794.5L812.2 783.9M878.2 815.4L852.5 843.1M878.2 815.4L829.0 815.7M900.4 831.7L881.6 864.5M900.4 831.7L852.5 843.1M925.7 842.8L914.6 878.9M925.7 842.8L881.6 864.5M952.8 847.9L914.6 878.9M808.1 677.6L774.7 667.3M801.4 713.0L766.5 710.4M801.4 713.0L774.7 667.3M802.8 749.1L768.2 754.3M802.8 749.1L766.5 710.4M792.2 627.1L764.8 611.2M774.7 667.3L744.4 658.0M774.7 667.3L764.8 611.2M766.5 710.4L734.9 708.1M766.5 710.4L744.4 658.0M1258.7 747.1L1272.2 748.1M1272.2 748.1L1280.4 748.7M1280.4 748.7L1283.1 748.9"/><path stroke="rgb(176,160,48)" d="M1001.1 709.6L996.7 701.3M996.7 701.3L990.6 694.2M920.4 731.3L922.9 740.4M922.9 740.4L927.3 748.7M879.6 737.5L884.4 755.5M844.2 688.7L839.1 715.8M839.1 715.8L840.2 743.4M840.2 743.4L847.3 770.1M871.3 592.0L843.9 615.5M843.9 615.5L822.5 644.6M822.5 644.6L808.1 677.6M808.1 677.6L801.4 713.0M914.6 878.9L950.0 885.6M950.0 885.6L986.1 884.2M818.3 591.7L792.2 627.1M991.3 918.8L1033.7 907.4M1259.2 816.6L1272.2 748.1M1267.1 819.0L1280.4 748.7M1269.7 819.8L1283.1 748.9M962.0 725.0L1001.1 709.6M962.0 725.0L996.7 701.3M962.0 725.0L1001.1 709.6M962.0 725.0L996.7 701.3M962.0 725.0L922.9 740.4M962.0 725.0L922.9 740.4M922.9 740.4L884.4 755.5M922.9 740.4L879.6 737.5M927.3 748.7L884.4 755.5M879.6 737.5L840.2 743.4M879.6 737.5L839.1 715.8M884.4 755.5L847.3 770.1M884.4 755.5L840.2 743.4M844.2 688.7L808.1 677.6M844.2 688.7L822.5 644.6M839.1 715.8L801.4 713.0M839.1 715.8L808.1 677.6M840.2 743.4L802.8 749.1M840.2 743.4L801.4 713.0M952.8 847.9L950.0 885.6M980.4 846.8L950.0 885.6M843.9 615.5L818.3 591.7M822.5 644.6L792.2 627.1M822.5 644.6L818.3 591.7M808.1 677.6L792.2 627.1M986.1 884.2L991.3 918.8M1020.9 874.8L991.3 918.8M1272.2 748.1L1267.1 819.0M1280.4 748.7L1269.7 819.8"/><path stroke="rgb(176,144,48)" d="M990.6 694.2L983.0 688.6M983.0 688.6L974.4 684.8M968.2 641.9L949.5 642.6M878.9 718.8L879.6 737.5M916.9 610.3L892.5 623.2M871.6 641.2L855.3 663.4M855.3 663.4L844.2 688.7M1045.3 936.9L1090.3 913.1M962.0 725.0L990.6 694.2M962.0 725.0L983.0 688.6M962.0 725.0L990.6 694.2M962.0 725.0L983.0 688.6M962.0 725.0L920.4 731.3M962.0 725.0L920.4 731.3M974.4 684.8L986.5 645.4M965.1 683.1L968.2 641.9M965.1 683.1L986.5 645.4M920.4 731.3L879.6 737.5M949.5 642.6L943.6 603.2M931.5 647.4L916.9 610.3M931.5 647.4L943.6 603.2M882.4 700.5L844.2 688.7M878.9 718.8L839.1 715.8M878.9 718.8L844.2 688.7M892.5 623.2L871.3 592.0M871.6 641.2L843.9 615.5M871.6 641.2L871.3 592.0M855.3 663.4L822.5 644.6M855.3 663.4L843.9 615.5M1033.7 907.4L1045.3 936.9M1033.7 907.4L996.0 950.1M1072.5 886.9L1045.3 936.9M1090.3 913.1L1055.4 962.8"/><path stroke="rgb(176,128,48)" d="M974.4 684.8L965.1 683.1M949.5 642.6L931.5 647.4M931.5 647.4L915.0 656.2M892.5 623.2L871.6 641.2M1106.0 936.0L1149.3 898.7M955.7 683.4L949.5 642.6M955.7 683.4L968.2 641.9M915.0 656.2L892.5 623.2M915.0 656.2L916.9 610.3M900.9 668.3L871.6 641.2M900.9 668.3L892.5 623.2M889.8 683.4L855.3 663.4M889.8 683.4L871.6 641.2M882.4 700.5L855.3 663.4M1090.3 913.1L1106.0 936.0M1149.3 898.7L1166.5 914.6M1149.3 898.7L1119.2 955.3"/><path stroke="rgb(176,128,32)" d="M965.1 683.1L955.7 683.4M962.0 725.0L974.4 684.8M962.0 725.0L965.1 683.1M962.0 725.0L974.4 684.8M962.0 725.0L965.1 683.1M946.6 685.9L949.5 642.6"/><path stroke="rgb(176,112,32)" d="M955.7 683.4L946.6 685.9M915.0 656.2L900.9 668.3M946.6 685.9L931.5 647.4M938.3 690.3L931.5 647.4"/><path stroke="rgb(192,96,32)" d="M946.6 685.9L938.3 690.3M938.3 690.3L931.2 696.4M931.2 696.4L925.6 704.0M1137.3 981.9L1190.1 936.5M1141.9 988.7L1196.1 942.0M1143.5 991.0L1198.1 943.9M962.0 725.0L946.6 685.9M962.0 725.0L946.6 685.9M962.0 725.0L925.6 704.0M962.0 725.0L925.6 704.0M931.2 696.4L900.9 668.3M931.2 696.4L915.0 656.2M1190.1 936.5L1141.9 988.7M1196.1 942.0L1143.5 991.0"/><path stroke="rgb(192,112,32)" d="M925.6 704.0L921.8 712.6M900.9 668.3L889.8 683.4M1129.7 970.7L1180.2 927.3M962.0 725.0L955.7 683.4M962.0 725.0L955.7 683.4M962.0 725.0L921.8 712.6M962.0 725.0L921.8 712.6M938.3 690.3L915.0 656.2M925.6 704.0L889.8 683.4M925.6 704.0L900.9 668.3M921.8 712.6L889.8 683.4M1119.2 955.3L1129.7 970.7M1119.2 955.3L1070.8 1001.9M1129.7 970.7L1137.3 981.9M1180.2 927.3L1137.3 981.9M1137.3 981.9L1141.9 988.7M1141.9 988.7L1143.5 991.0"/><path stroke="rgb(192,128,32)" d="M921.8 712.6L920.1 721.9M889.8 683.4L882.4 700.5M962.0 725.0L920.1 721.9M962.0 725.0L920.1 721.9M921.8 712.6L882.4 700.5M920.1 721.9L882.4 700.5"/><path stroke="rgb(192,144,32)" d="M920.1 721.9L920.4 731.3M920.1 721.9L878.9 718.8M920.4 731.3L878.9 718.8"/><path stroke="rgb(160,176,48)" d="M927.3 748.7L933.4 755.8M941.0 761.4L949.6 765.2M1044.4 712.5L1039.6 694.5M1039.6 694.5L1030.8 678.0M905.3 786.1L920.4 797.2M920.4 797.2L937.5 804.6M937.5 804.6L955.8 808.1M955.8 808.1L974.5 807.4M1045.1 731.2L1044.4 712.5M952.8 847.9L980.4 846.8M980.4 846.8L1007.1 839.7M974.0 564.4L937.9 565.8M937.9 565.8L903.1 575.2M890.3 542.6L851.5 563.1M833.7 536.9L795.0 570.2M795.0 570.2L764.8 611.2M962.0 725.0L1003.9 728.1M962.0 725.0L927.3 748.7M962.0 725.0L927.3 748.7M962.0 725.0L1003.9 728.1M1003.6 718.7L1044.4 712.5M1003.6 718.7L1045.1 731.2M1001.1 709.6L1039.6 694.5M1001.1 709.6L1044.4 712.5M996.7 701.3L1039.6 694.5M933.4 755.8L905.3 786.1M941.0 761.4L920.4 797.2M941.0 761.4L905.3 786.1M949.6 765.2L937.5 804.6M949.6 765.2L920.4 797.2M958.9 766.9L955.8 808.1M958.9 766.9L937.5 804.6M968.3 766.6L955.8 808.1M1003.9 728.1L1045.1 731.2M937.5 804.6L925.7 842.8M955.8 808.1L952.8 847.9M955.8 808.1L925.7 842.8M974.5 807.4L980.4 846.8M974.5 807.4L952.8 847.9M971.2 602.1L974.0 564.4M943.6 603.2L974.0 564.4M1007.1 839.7L1020.9 874.8M1007.1 839.7L986.1 884.2M903.1 575.2L890.3 542.6M903.1 575.2L932.7 531.2M871.3 592.0L890.3 542.6M851.5 563.1L833.7 536.9M851.5 563.1L878.7 513.1M818.3 591.7L795.0 570.2M818.3 591.7L833.7 536.9M792.2 627.1L795.0 570.2M1157.5 739.6L1189.1 741.9M795.0 570.2L774.7 551.3M764.8 611.2L740.7 597.4M764.8 611.2L774.7 551.3M1189.1 741.9L1216.8 744.0M1216.8 744.0L1240.1 745.7M1240.1 745.7L1258.7 747.1"/><path stroke="rgb(160,192,48)" d="M933.4 755.8L941.0 761.4M818.0 514.0L774.7 551.3M774.7 551.3L740.7 597.4M757.5 535.4L720.4 585.7M962.0 725.0L933.4 755.8M962.0 725.0L933.4 755.8M795.0 570.2L818.0 514.0M774.7 551.3L757.5 535.4M740.7 597.4L720.4 585.7M740.7 597.4L757.5 535.4M720.4 585.7L704.3 576.4M720.4 585.7L743.8 522.7"/><path stroke="rgb(144,176,48)" d="M949.6 765.2L958.9 766.9M958.9 766.9L968.3 766.6M1002.2 737.4L1003.9 728.1M974.5 807.4L992.5 802.6M1034.2 766.6L1041.6 749.5M1041.6 749.5L1045.1 731.2M1083.8 706.6L1076.7 679.9M1076.7 679.9L1063.8 655.5M1063.8 655.5L1045.8 634.6M1045.8 634.6L1023.6 618.3M1023.6 618.3L998.3 607.2M1007.1 839.7L1031.5 826.8M1068.7 786.6L1079.8 761.3M1079.8 761.3L1084.9 734.2M1084.9 734.2L1083.8 706.6M1042.4 585.5L1009.4 571.1M1009.4 571.1L974.0 564.4M1052.7 858.0L1080.1 834.5M1080.1 834.5L1101.5 805.4M1101.5 805.4L1115.9 772.4M1115.9 772.4L1122.6 737.0M932.7 531.2L890.3 542.6M968.3 766.6L974.5 807.4M977.4 764.1L974.5 807.4M1002.2 737.4L1041.6 749.5M1003.9 728.1L1041.6 749.5M1044.4 712.5L1083.8 706.6M1044.4 712.5L1084.9 734.2M1039.6 694.5L1076.7 679.9M1039.6 694.5L1083.8 706.6M1030.8 678.0L1063.8 655.5M1030.8 678.0L1076.7 679.9M1018.7 663.9L1045.8 634.6M1018.7 663.9L1063.8 655.5M992.5 802.6L1007.1 839.7M992.5 802.6L980.4 846.8M1009.0 793.8L1007.1 839.7M1041.6 749.5L1079.8 761.3M1041.6 749.5L1068.7 786.6M1045.1 731.2L1084.9 734.2M1045.1 731.2L1079.8 761.3M1083.8 706.6L1121.2 700.9M1083.8 706.6L1122.6 737.0M1076.7 679.9L1111.8 666.1M1076.7 679.9L1121.2 700.9M1063.8 655.5L1111.8 666.1M1023.6 618.3L1042.4 585.5M1023.6 618.3L1071.5 606.9M998.3 607.2L1009.4 571.1M998.3 607.2L1042.4 585.5M971.2 602.1L1009.4 571.1M1031.5 826.8L1052.7 858.0M1031.5 826.8L1020.9 874.8M1068.7 786.6L1101.5 805.4M1079.8 761.3L1115.9 772.4M1079.8 761.3L1101.5 805.4M1084.9 734.2L1122.6 737.0M1084.9 734.2L1115.9 772.4M1121.2 700.9L1157.5 739.6M937.9 565.8L932.7 531.2M937.9 565.8L976.6 529.5M1122.6 737.0L1157.5 739.6M1122.6 737.0L1149.3 782.7M890.3 542.6L878.7 513.1"/><path stroke="rgb(128,192,48)" d="M968.3 766.6L977.4 764.1M977.4 764.1L985.7 759.7M998.4 746.0L1002.2 737.4M1155.8 695.7L1144.4 653.3M1144.4 653.3L1123.9 614.5M1123.9 614.5L1095.3 581.3M1095.3 581.3L1059.9 555.2M1059.9 555.2L1019.7 537.7M1187.1 691.0L1173.9 641.7M1173.9 641.7L1150.1 596.7M1075.8 527.8L1029.0 507.4M1029.0 507.4L978.9 497.9M978.9 497.9L928.0 499.9M962.0 725.0L968.3 766.6M962.0 725.0L977.4 764.1M962.0 725.0L968.3 766.6M962.0 725.0L977.4 764.1M962.0 725.0L998.4 746.0M962.0 725.0L998.4 746.0M985.7 759.7L1009.0 793.8M1111.8 666.1L1144.4 653.3M1111.8 666.1L1155.8 695.7M1095.0 634.3L1123.9 614.5M1095.0 634.3L1144.4 653.3M1071.5 606.9L1095.3 581.3M1071.5 606.9L1123.9 614.5M1042.4 585.5L1059.9 555.2M1042.4 585.5L1095.3 581.3M1009.4 571.1L1059.9 555.2M1155.8 695.7L1187.1 691.0M1144.4 653.3L1173.9 641.7M1144.4 653.3L1187.1 691.0M1123.9 614.5L1150.1 596.7M1123.9 614.5L1173.9 641.7M1095.3 581.3L1116.8 558.0M1095.3 581.3L1150.1 596.7M1059.9 555.2L1075.8 527.8M1059.9 555.2L1116.8 558.0M1019.7 537.7L1029.0 507.4M1019.7 537.7L1075.8 527.8M976.6 529.5L978.9 497.9M976.6 529.5L1029.0 507.4M1173.9 641.7L1214.6 686.8M928.0 499.9L923.8 472.4"/><path stroke="rgb(112,192,48)" d="M985.7 759.7L992.8 753.6M992.8 753.6L998.4 746.0M962.0 725.0L985.7 759.7M962.0 725.0L992.8 753.6M962.0 725.0L985.7 759.7M962.0 725.0L992.8 753.6M992.8 753.6L1023.1 781.7M992.8 753.6L1009.0 793.8M998.4 746.0L1023.1 781.7"/><path stroke="rgb(160,160,48)" d="M1030.8 678.0L1018.7 663.9M1018.7 663.9L1003.6 652.8M1003.6 652.8L986.5 645.4M998.3 607.2L971.2 602.1M971.2 602.1L943.6 603.2M943.6 603.2L916.9 610.3M903.1 575.2L871.3 592.0M986.1 884.2L1020.9 874.8M851.5 563.1L818.3 591.7M1033.7 907.4L1072.5 886.9M1179.6 792.0L1189.1 741.9M1206.1 800.2L1216.8 744.0M1228.5 807.1L1240.1 745.7M1246.3 812.6L1258.7 747.1M996.7 701.3L1030.8 678.0M990.6 694.2L1018.7 663.9M990.6 694.2L1030.8 678.0M983.0 688.6L1018.7 663.9M1003.6 652.8L1023.6 618.3M986.5 645.4L998.3 607.2M986.5 645.4L1023.6 618.3M968.2 641.9L971.2 602.1M968.2 641.9L998.3 607.2M949.5 642.6L971.2 602.1M943.6 603.2L937.9 565.8M916.9 610.3L903.1 575.2M916.9 610.3L937.9 565.8M892.5 623.2L903.1 575.2M980.4 846.8L986.1 884.2M871.3 592.0L851.5 563.1M843.9 615.5L851.5 563.1M1020.9 874.8L1033.7 907.4M1052.7 858.0L1033.7 907.4M1179.6 792.0L1206.1 800.2M1189.1 741.9L1206.1 800.2M1216.8 744.0L1228.5 807.1M1240.1 745.7L1246.3 812.6M1258.7 747.1L1259.2 816.6"/><path stroke="rgb(160,144,48)" d="M986.5 645.4L968.2 641.9M1090.3 913.1L1129.0 879.8M1129.0 879.8L1159.2 838.8M1183.3 852.6L1206.1 800.2M983.0 688.6L1003.6 652.8M974.4 684.8L1003.6 652.8M1072.5 886.9L1090.3 913.1M1105.7 858.3L1090.3 913.1M1179.6 792.0L1183.3 852.6M1206.1 800.2L1228.5 807.1M1228.5 807.1L1246.3 812.6M1246.3 812.6L1259.2 816.6M1259.2 816.6L1267.1 819.0M1267.1 819.0L1269.7 819.8"/><path stroke="rgb(192,144,48)" d="M882.4 700.5L878.9 718.8M996.0 950.1L1045.3 936.9M1000.2 977.6L1055.4 962.8M996.0 950.1L1000.2 977.6M1045.3 936.9L1055.4 962.8M1045.3 936.9L1000.2 977.6"/><path stroke="rgb(128,176,48)" d="M992.5 802.6L1009.0 793.8M1009.0 793.8L1023.1 781.7M1023.1 781.7L1034.2 766.6M1031.5 826.8L1052.4 808.8M1052.4 808.8L1068.7 786.6M1121.2 700.9L1111.8 666.1M1111.8 666.1L1095.0 634.3M1095.0 634.3L1071.5 606.9M1071.5 606.9L1042.4 585.5M1122.6 737.0L1121.2 700.9M977.4 764.1L992.5 802.6M985.7 759.7L992.5 802.6M998.4 746.0L1034.2 766.6M1002.2 737.4L1034.2 766.6M1009.0 793.8L1031.5 826.8M1023.1 781.7L1052.4 808.8M1023.1 781.7L1031.5 826.8M1034.2 766.6L1068.7 786.6M1034.2 766.6L1052.4 808.8M1063.8 655.5L1095.0 634.3M1045.8 634.6L1071.5 606.9M1045.8 634.6L1095.0 634.3M1052.4 808.8L1080.1 834.5M1052.4 808.8L1052.7 858.0M1068.7 786.6L1080.1 834.5M1121.2 700.9L1155.8 695.7"/><path stroke="rgb(144,160,48)" d="M1020.9 874.8L1052.7 858.0M1072.5 886.9L1105.7 858.3M1105.7 858.3L1131.8 822.9M1131.8 822.9L1149.3 782.7M1149.3 782.7L1157.5 739.6M1003.6 652.8L1045.8 634.6M1052.7 858.0L1072.5 886.9M1080.1 834.5L1105.7 858.3M1080.1 834.5L1072.5 886.9M1101.5 805.4L1131.8 822.9M1101.5 805.4L1105.7 858.3M1115.9 772.4L1149.3 782.7M1115.9 772.4L1131.8 822.9M1149.3 782.7L1179.6 792.0M1149.3 782.7L1159.2 838.8M1157.5 739.6L1179.6 792.0"/><path stroke="rgb(144,192,48)" d="M1019.7 537.7L976.6 529.5M976.6 529.5L932.7 531.2M1157.5 739.6L1155.8 695.7M928.0 499.9L878.7 513.1M878.7 513.1L833.7 536.9M1189.1 741.9L1187.1 691.0M868.6 487.2L818.0 514.0M804.8 494.7L757.5 535.4M962.0 725.0L941.0 761.4M962.0 725.0L949.6 765.2M962.0 725.0L941.0 761.4M962.0 725.0L958.9 766.9M962.0 725.0L949.6 765.2M962.0 725.0L958.9 766.9M962.0 725.0L1002.2 737.4M962.0 725.0L1002.2 737.4M1009.4 571.1L1019.7 537.7M974.0 564.4L976.6 529.5M974.0 564.4L1019.7 537.7M1155.8 695.7L1189.1 741.9M932.7 531.2L928.0 499.9M932.7 531.2L978.9 497.9M890.3 542.6L928.0 499.9M1187.1 691.0L1214.6 686.8M1187.1 691.0L1216.8 744.0M878.7 513.1L868.6 487.2M878.7 513.1L923.8 472.4M833.7 536.9L818.0 514.0M833.7 536.9L868.6 487.2M818.0 514.0L804.8 494.7M774.7 551.3L804.8 494.7"/><path stroke="rgb(192,176,48)" d="M766.5 710.4L768.2 754.3M768.2 754.3L779.6 796.7M779.6 796.7L800.1 835.5M800.1 835.5L828.7 868.7M828.7 868.7L864.1 894.8M734.9 708.1L736.9 759.0M736.9 759.0L750.1 808.3M750.1 808.3L773.9 853.3M773.9 853.3L807.2 892.0M812.2 783.9L779.6 796.7M812.2 783.9L768.2 754.3M829.0 815.7L800.1 835.5M829.0 815.7L779.6 796.7M852.5 843.1L828.7 868.7M852.5 843.1L800.1 835.5M881.6 864.5L864.1 894.8M881.6 864.5L828.7 868.7M914.6 878.9L864.1 894.8M768.2 754.3L736.9 759.0M768.2 754.3L734.9 708.1M779.6 796.7L750.1 808.3M779.6 796.7L736.9 759.0M800.1 835.5L773.9 853.3M800.1 835.5L750.1 808.3M828.7 868.7L807.2 892.0M828.7 868.7L773.9 853.3M864.1 894.8L807.2 892.0M750.1 808.3L724.2 818.4M750.1 808.3L709.4 763.2M773.9 853.3L724.2 818.4"/><path stroke="rgb(192,160,48)" d="M864.1 894.8L904.3 912.3M904.3 912.3L947.4 920.5M947.4 920.5L991.3 918.8M914.6 878.9L904.3 912.3M950.0 885.6L947.4 920.5M950.0 885.6L904.3 912.3M986.1 884.2L947.4 920.5M864.1 894.8L848.2 922.2M904.3 912.3L895.0 942.6M904.3 912.3L848.2 922.2M947.4 920.5L945.1 952.1M947.4 920.5L895.0 942.6M991.3 918.8L996.0 950.1M991.3 918.8L945.1 952.1"/><path stroke="rgb(112,192,64)" d="M1150.1 596.7L1116.8 558.0M1116.8 558.0L1075.8 527.8M1150.1 596.7L1173.0 581.0"/><path stroke="rgb(208,176,48)" d="M807.2 892.0L848.2 922.2M724.2 818.4L751.0 869.0M751.0 869.0L788.3 912.3M788.3 912.3L834.4 946.3M702.5 827.0L731.7 882.2M731.7 882.2L772.4 929.5M685.1 833.8L716.3 892.7M672.5 838.7L705.1 900.3M664.9 841.8L698.3 904.9M662.3 842.8L696.0 906.5M773.9 853.3L751.0 869.0M807.2 892.0L788.3 912.3M807.2 892.0L751.0 869.0M848.2 922.2L788.3 912.3M724.2 818.4L702.5 827.0M751.0 869.0L731.7 882.2M751.0 869.0L702.5 827.0M788.3 912.3L772.4 929.5M788.3 912.3L731.7 882.2M731.7 882.2L716.3 892.7M731.7 882.2L685.1 833.8M772.4 929.5L716.3 892.7M716.3 892.7L672.5 838.7M705.1 900.3L664.9 841.8M698.3 904.9L662.3 842.8"/><path stroke="rgb(208,160,48)" d="M848.2 922.2L895.0 942.6M895.0 942.6L945.1 952.1M945.1 952.1L996.0 950.1M834.4 946.3L886.8 969.1M886.8 969.1L943.0 979.8M772.4 929.5L822.7 966.6M848.2 922.2L834.4 946.3M895.0 942.6L886.8 969.1M895.0 942.6L834.4 946.3M945.1 952.1L943.0 979.8M945.1 952.1L886.8 969.1M834.4 946.3L822.7 966.6M834.4 946.3L772.4 929.5M886.8 969.1L879.9 991.5M886.8 969.1L822.7 966.6M943.0 979.8L879.9 991.5"/><path stroke="rgb(144,144,48)" d="M1159.2 838.8L1179.6 792.0M1105.7 858.3L1129.0 879.8M1131.8 822.9L1159.2 838.8M1131.8 822.9L1129.0 879.8"/><path stroke="rgb(128,192,64)" d="M1214.6 686.8L1199.8 631.6M1173.9 641.7L1199.8 631.6M1150.1 596.7L1199.8 631.6"/><path stroke="rgb(112,208,64)" d="M1199.8 631.6L1173.0 581.0M1173.0 581.0L1135.7 537.7M1135.7 537.7L1089.6 503.7M1089.6 503.7L1037.2 480.9M1037.2 480.9L981.0 470.2M1221.5 623.0L1192.3 567.8M1192.3 567.8L1151.6 520.5M1151.6 520.5L1101.3 483.4M1101.3 483.4L1044.1 458.5M1044.1 458.5L982.7 446.9M982.7 446.9L920.3 449.3M1238.9 616.2L1207.7 557.3M1207.7 557.3L1164.3 506.8M1164.3 506.8L1110.6 467.3M917.5 430.9L853.2 448.1M1251.5 611.3L1218.9 549.7M1218.9 549.7L1173.5 496.9M1259.1 608.2L1225.7 545.1M1225.7 545.1L1179.0 490.9M1261.7 607.2L1228.0 543.5M1228.0 543.5L1180.9 488.9M1116.8 558.0L1135.7 537.7M1116.8 558.0L1173.0 581.0M1075.8 527.8L1089.6 503.7M1075.8 527.8L1135.7 537.7M1029.0 507.4L1089.6 503.7M1173.0 581.0L1192.3 567.8M1173.0 581.0L1221.5 623.0M1135.7 537.7L1151.6 520.5M1135.7 537.7L1192.3 567.8M1089.6 503.7L1101.3 483.4M1089.6 503.7L1151.6 520.5M1037.2 480.9L1044.1 458.5M1037.2 480.9L1101.3 483.4M981.0 470.2L982.7 446.9M981.0 470.2L1044.1 458.5M923.8 472.4L982.7 446.9M1192.3 567.8L1207.7 557.3M1192.3 567.8L1238.9 616.2M1151.6 520.5L1164.3 506.8M1151.6 520.5L1207.7 557.3M1101.3 483.4L1110.6 467.3M1101.3 483.4L1164.3 506.8M1044.1 458.5L1049.6 440.7M1044.1 458.5L1110.6 467.3M982.7 446.9L1049.6 440.7M920.3 449.3L917.5 430.9M920.3 449.3L984.1 428.3M1207.7 557.3L1218.9 549.7M1207.7 557.3L1251.5 611.3M1164.3 506.8L1173.5 496.9M1164.3 506.8L1218.9 549.7M1218.9 549.7L1225.7 545.1M1218.9 549.7L1259.1 608.2M1173.5 496.9L1179.0 490.9M1173.5 496.9L1225.7 545.1M1225.7 545.1L1228.0 543.5M1225.7 545.1L1261.7 607.2M1179.0 490.9L1180.9 488.9M1179.0 490.9L1228.0 543.5"/><path stroke="rgb(128,208,64)" d="M981.0 470.2L923.8 472.4M1237.7 683.3L1221.5 623.0M920.3 449.3L860.0 465.5M860.0 465.5L804.8 494.7M1256.1 680.5L1238.9 616.2M853.2 448.1L794.3 479.3M1269.5 678.5L1251.5 611.3M848.3 435.5L786.7 468.1M1277.7 677.3L1259.1 608.2M845.2 427.9L782.1 461.3M1280.4 676.9L1261.7 607.2M844.2 425.3L780.5 459.0M1029.0 507.4L1037.2 480.9M1199.8 631.6L1221.5 623.0M1199.8 631.6L1237.7 683.3M923.8 472.4L920.3 449.3M868.6 487.2L860.0 465.5M868.6 487.2L920.3 449.3M1221.5 623.0L1238.9 616.2M1221.5 623.0L1256.1 680.5M860.0 465.5L853.2 448.1M860.0 465.5L917.5 430.9M804.8 494.7L853.2 448.1M1238.9 616.2L1251.5 611.3M1238.9 616.2L1269.5 678.5M794.3 479.3L786.7 468.1M794.3 479.3L848.3 435.5M1251.5 611.3L1259.1 608.2M1251.5 611.3L1277.7 677.3M786.7 468.1L782.1 461.3M786.7 468.1L845.2 427.9M1259.1 608.2L1261.7 607.2M1259.1 608.2L1280.4 676.9M782.1 461.3L780.5 459.0M782.1 461.3L844.2 425.3"/><path stroke="rgb(128,208,48)" d="M923.8 472.4L868.6 487.2M978.9 497.9L981.0 470.2M978.9 497.9L1037.2 480.9M928.0 499.9L981.0 470.2"/><path stroke="rgb(176,192,48)" d="M740.7 597.4L717.9 649.8M717.9 649.8L707.2 706.0M720.4 585.7L695.5 642.9M695.5 642.9L683.9 704.3M677.7 637.4L665.3 702.9M744.4 658.0L717.9 649.8M744.4 658.0L740.7 597.4M734.9 708.1L717.9 649.8M717.9 649.8L695.5 642.9M717.9 649.8L720.4 585.7M707.2 706.0L695.5 642.9M695.5 642.9L677.7 637.4M695.5 642.9L704.3 576.4M683.9 704.3L677.7 637.4"/><path stroke="rgb(192,192,48)" d="M707.2 706.0L709.4 763.2M709.4 763.2L724.2 818.4M683.9 704.3L686.3 766.7M665.3 702.9L667.9 769.5M651.8 701.9L654.5 771.5M643.6 701.3L646.3 772.7M640.9 701.1L643.6 773.1M734.9 708.1L707.2 706.0M736.9 759.0L709.4 763.2M736.9 759.0L707.2 706.0M707.2 706.0L683.9 704.3M709.4 763.2L686.3 766.7M709.4 763.2L683.9 704.3M724.2 818.4L686.3 766.7M683.9 704.3L665.3 702.9M686.3 766.7L667.9 769.5M686.3 766.7L665.3 702.9M667.9 769.5L651.8 701.9M654.5 771.5L643.6 701.3M646.3 772.7L640.9 701.1"/><path stroke="rgb(208,144,48)" d="M943.0 979.8L1000.2 977.6M996.0 950.1L943.0 979.8M1000.2 977.6L1003.7 1000.7M1000.2 977.6L941.3 1003.1"/><path stroke="rgb(192,128,48)" d="M1055.4 962.8L1106.0 936.0M1064.0 984.5L1119.2 955.3M1055.4 962.8L1064.0 984.5M1106.0 936.0L1119.2 955.3M1106.0 936.0L1064.0 984.5"/><path stroke="rgb(160,128,48)" d="M1149.3 898.7L1183.3 852.6M1203.6 864.3L1228.5 807.1M1219.7 873.6L1246.3 812.6M1129.0 879.8L1149.3 898.7M1129.0 879.8L1106.0 936.0M1159.2 838.8L1183.3 852.6M1159.2 838.8L1149.3 898.7M1183.3 852.6L1203.6 864.3M1183.3 852.6L1166.5 914.6M1206.1 800.2L1203.6 864.3M1228.5 807.1L1219.7 873.6"/><path stroke="rgb(144,192,64)" d="M1216.8 744.0L1214.6 686.8M1214.6 686.8L1237.7 683.3M1214.6 686.8L1240.1 745.7"/><path stroke="rgb(208,192,48)" d="M686.3 766.7L702.5 827.0M667.9 769.5L685.1 833.8M654.5 771.5L672.5 838.7M646.3 772.7L664.9 841.8M643.6 773.1L662.3 842.8M702.5 827.0L685.1 833.8M702.5 827.0L667.9 769.5M667.9 769.5L654.5 771.5M685.1 833.8L672.5 838.7M685.1 833.8L654.5 771.5M654.5 771.5L646.3 772.7M672.5 838.7L664.9 841.8M672.5 838.7L646.3 772.7M646.3 772.7L643.6 773.1M664.9 841.8L662.3 842.8M664.9 841.8L643.6 773.1"/><path stroke="rgb(224,160,48)" d="M822.7 966.6L879.9 991.5M759.7 943.2L813.4 982.7M813.4 982.7L874.4 1009.3M750.5 953.1L806.6 994.4M806.6 994.4L870.4 1022.2M745.0 959.1L802.5 1001.5M802.5 1001.5L868.0 1030.1M743.1 961.1L801.1 1003.9M801.1 1003.9L867.2 1032.7M822.7 966.6L813.4 982.7M822.7 966.6L759.7 943.2M879.9 991.5L874.4 1009.3M879.9 991.5L813.4 982.7M813.4 982.7L806.6 994.4M813.4 982.7L750.5 953.1M874.4 1009.3L806.6 994.4M806.6 994.4L802.5 1001.5M806.6 994.4L745.0 959.1M870.4 1022.2L802.5 1001.5M802.5 1001.5L801.1 1003.9M802.5 1001.5L743.1 961.1M868.0 1030.1L801.1 1003.9"/><path stroke="rgb(224,144,48)" d="M879.9 991.5L941.3 1003.1M941.3 1003.1L1003.7 1000.7M874.4 1009.3L939.9 1021.7M939.9 1021.7L1006.5 1019.1M870.4 1022.2L938.9 1035.2M868.0 1030.1L938.3 1043.4M867.2 1032.7L938.1 1046.1M943.0 979.8L941.3 1003.1M941.3 1003.1L939.9 1021.7M941.3 1003.1L874.4 1009.3M1003.7 1000.7L939.9 1021.7M874.4 1009.3L870.4 1022.2M939.9 1021.7L938.9 1035.2M939.9 1021.7L870.4 1022.2M1006.5 1019.1L938.9 1035.2M870.4 1022.2L868.0 1030.1M938.9 1035.2L938.3 1043.4M938.9 1035.2L868.0 1030.1M868.0 1030.1L867.2 1032.7M938.3 1043.4L938.1 1046.1M938.3 1043.4L867.2 1032.7"/><path stroke="rgb(208,128,48)" d="M1003.7 1000.7L1064.0 984.5M1055.4 962.8L1003.7 1000.7M1064.0 984.5L1006.5 1019.1"/><path stroke="rgb(176,112,48)" d="M1119.2 955.3L1166.5 914.6M1180.2 927.3L1219.7 873.6M1166.5 914.6L1180.2 927.3M1166.5 914.6L1129.7 970.7M1203.6 864.3L1180.2 927.3"/><path stroke="rgb(160,112,48)" d="M1166.5 914.6L1203.6 864.3M1231.4 880.4L1259.2 816.6M1238.5 884.5L1267.1 819.0M1240.9 885.9L1269.7 819.8M1203.6 864.3L1219.7 873.6M1246.3 812.6L1231.4 880.4M1259.2 816.6L1238.5 884.5M1267.1 819.0L1240.9 885.9"/><path stroke="rgb(144,208,64)" d="M1240.1 745.7L1237.7 683.3M794.3 479.3L743.8 522.7M1258.7 747.1L1256.1 680.5M786.7 468.1L733.9 513.5M1272.2 748.1L1269.5 678.5M782.1 461.3L727.9 508.0M1280.4 748.7L1277.7 677.3M780.5 459.0L725.9 506.1M1283.1 748.9L1280.4 676.9M818.0 514.0L860.0 465.5M1237.7 683.3L1256.1 680.5M1237.7 683.3L1258.7 747.1M804.8 494.7L794.3 479.3M757.5 535.4L794.3 479.3M1256.1 680.5L1269.5 678.5M1256.1 680.5L1272.2 748.1M743.8 522.7L733.9 513.5M743.8 522.7L786.7 468.1M1269.5 678.5L1277.7 677.3M1269.5 678.5L1280.4 748.7M733.9 513.5L727.9 508.0M733.9 513.5L782.1 461.3M1277.7 677.3L1280.4 676.9M1277.7 677.3L1283.1 748.9M727.9 508.0L725.9 506.1M727.9 508.0L780.5 459.0"/><path stroke="rgb(96,224,64)" d="M1110.6 467.3L1049.6 440.7M1049.6 440.7L984.1 428.3M1173.5 496.9L1117.4 455.6M1117.4 455.6L1053.6 427.8M1053.6 427.8L985.1 414.8M985.1 414.8L915.5 417.5M1179.0 490.9L1121.5 448.5M1121.5 448.5L1056.0 419.9M1056.0 419.9L985.7 406.6M985.7 406.6L914.3 409.3M1180.9 488.9L1122.9 446.1M1122.9 446.1L1056.8 417.3M1056.8 417.3L985.9 403.9M985.9 403.9L913.9 406.6M1110.6 467.3L1117.4 455.6M1049.6 440.7L1053.6 427.8M1049.6 440.7L1117.4 455.6M984.1 428.3L985.1 414.8M984.1 428.3L1053.6 427.8M917.5 430.9L985.1 414.8M1117.4 455.6L1121.5 448.5M1117.4 455.6L1179.0 490.9M1053.6 427.8L1056.0 419.9M1053.6 427.8L1121.5 448.5M985.1 414.8L985.7 406.6M985.1 414.8L1056.0 419.9M915.5 417.5L985.7 406.6M1121.5 448.5L1122.9 446.1M1121.5 448.5L1180.9 488.9M1056.0 419.9L1056.8 417.3M1056.0 419.9L1122.9 446.1M985.7 406.6L985.9 403.9M985.7 406.6L1056.8 417.3M914.3 409.3L985.9 403.9"/><path stroke="rgb(112,224,64)" d="M984.1 428.3L917.5 430.9M915.5 417.5L848.3 435.5M914.3 409.3L845.2 427.9M913.9 406.6L844.2 425.3M982.7 446.9L984.1 428.3M917.5 430.9L915.5 417.5M853.2 448.1L915.5 417.5M915.5 417.5L914.3 409.3M848.3 435.5L914.3 409.3M914.3 409.3L913.9 406.6M845.2 427.9L913.9 406.6"/><path stroke="rgb(160,208,48)" d="M743.8 522.7L704.3 576.4M692.6 569.6L664.8 633.4M685.5 565.5L656.9 631.0M683.1 564.1L654.3 630.2M704.3 576.4L692.6 569.6M704.3 576.4L733.9 513.5M677.7 637.4L692.6 569.6M692.6 569.6L685.5 565.5M664.8 633.4L685.5 565.5M685.5 565.5L683.1 564.1M656.9 631.0L683.1 564.1"/><path stroke="rgb(176,208,48)" d="M704.3 576.4L677.7 637.4M664.8 633.4L651.8 701.9M656.9 631.0L643.6 701.3M654.3 630.2L640.9 701.1M677.7 637.4L664.8 633.4M665.3 702.9L664.8 633.4M664.8 633.4L656.9 631.0M651.8 701.9L656.9 631.0M656.9 631.0L654.3 630.2M643.6 701.3L654.3 630.2"/><path stroke="rgb(224,176,48)" d="M716.3 892.7L759.7 943.2M705.1 900.3L750.5 953.1M698.3 904.9L745.0 959.1M696.0 906.5L743.1 961.1M772.4 929.5L759.7 943.2M716.3 892.7L705.1 900.3M759.7 943.2L750.5 953.1M759.7 943.2L705.1 900.3M705.1 900.3L698.3 904.9M750.5 953.1L745.0 959.1M750.5 953.1L698.3 904.9M698.3 904.9L696.0 906.5M745.0 959.1L743.1 961.1M745.0 959.1L696.0 906.5"/><path stroke="rgb(208,128,32)" d="M1006.5 1019.1L1070.8 1001.9M1064.0 984.5L1070.8 1001.9"/><path stroke="rgb(208,112,32)" d="M1070.8 1001.9L1129.7 970.7M1075.7 1014.5L1137.3 981.9M1078.8 1022.1L1141.9 988.7M1079.8 1024.7L1143.5 991.0M1070.8 1001.9L1075.7 1014.5M1129.7 970.7L1075.7 1014.5M1075.7 1014.5L1078.8 1022.1M1137.3 981.9L1078.8 1022.1M1078.8 1022.1L1079.8 1024.7M1141.9 988.7L1079.8 1024.7"/><path stroke="rgb(160,208,64)" d="M733.9 513.5L692.6 569.6M727.9 508.0L685.5 565.5M725.9 506.1L683.1 564.1M692.6 569.6L727.9 508.0M685.5 565.5L725.9 506.1"/><path stroke="rgb(224,144,32)" d="M938.9 1035.2L1008.5 1032.5M938.3 1043.4L1009.7 1040.7M938.1 1046.1L1010.1 1043.4M1008.5 1032.5L938.3 1043.4M1009.7 1040.7L938.1 1046.1"/><path stroke="rgb(224,128,32)" d="M1008.5 1032.5L1075.7 1014.5M1009.7 1040.7L1078.8 1022.1M1010.1 1043.4L1079.8 1024.7M1006.5 1019.1L1008.5 1032.5M1070.8 1001.9L1008.5 1032.5M1008.5 1032.5L1009.7 1040.7M1075.7 1014.5L1009.7 1040.7M1009.7 1040.7L1010.1 1043.4M1078.8 1022.1L1010.1 1043.4"/><path stroke="rgb(176,96,32)" d="M1190.1 936.5L1231.4 880.4M1196.1 942.0L1238.5 884.5M1198.1 943.9L1240.9 885.9M1180.2 927.3L1190.1 936.5M1219.7 873.6L1190.1 936.5M1190.1 936.5L1196.1 942.0M1231.4 880.4L1196.1 942.0M1196.1 942.0L1198.1 943.9M1238.5 884.5L1198.1 943.9"/><path stroke="rgb(192,80,32)" d="M962.0 725.0L938.3 690.3M962.0 725.0L931.2 696.4M962.0 725.0L938.3 690.3M962.0 725.0L931.2 696.4"/><path stroke="rgb(144,208,48)" d="M757.5 535.4L743.8 522.7"/><path stroke="rgb(224,128,48)" d="M1003.7 1000.7L1006.5 1019.1"/><path stroke="rgb(96,208,64)" d="M1110.6 467.3L1173.5 496.9"/><path stroke="rgb(128,224,64)" d="M853.2 448.1L848.3 435.5M848.3 435.5L845.2 427.9M845.2 427.9L844.2 425.3"/><path stroke="rgb(192,208,48)" d="M665.3 702.9L651.8 701.9M651.8 701.9L643.6 701.3M643.6 701.3L640.9 701.1"/><path stroke="rgb(160,96,48)" d="M1219.7 873.6L1231.4 880.4M1231.4 880.4L1238.5 884.5M1238.5 884.5L1240.9 885.9"/><path stroke="rgb(176,144,48)" d="M997.4 718.2L995.0 710.5M995.0 710.5L990.9 703.5M904.5 767.7L915.4 779.4M915.4 779.4L928.7 788.4M876.6 788.4L892.9 805.8M892.9 805.8L912.6 819.2M912.6 819.2L934.8 827.8M789.0 577.0L760.4 619.2M760.4 619.2L741.9 666.7M741.9 666.7L734.4 717.2M739.1 608.0L718.6 660.6M718.6 660.6L710.4 716.3M1255.8 802.8L1265.8 735.5M962.0 725.0L995.0 710.5M962.0 725.0L995.0 710.5M997.4 718.2L1027.6 696.2M995.0 710.5L1027.6 696.2M929.0 739.5L904.5 767.7M933.1 746.5L904.5 767.7M904.5 767.7L892.9 805.8M915.4 779.4L892.9 805.8M915.4 779.4L912.6 819.2M928.7 788.4L912.6 819.2M928.7 788.4L934.8 827.8M767.9 673.6L741.9 666.7M767.9 673.6L734.4 717.2M761.4 718.1L734.4 717.2M789.0 577.0L739.1 608.0M760.4 619.2L739.1 608.0M760.4 619.2L718.6 660.6M741.9 666.7L718.6 660.6M741.9 666.7L710.4 716.3M1242.5 799.2L1265.8 735.5M1255.8 802.8L1265.5 805.3"/><path stroke="rgb(176,128,48)" d="M990.9 703.5L985.4 697.6M929.0 739.5L933.1 746.5M896.4 753.8L904.5 767.7M864.7 767.8L876.6 788.4M934.8 827.8L958.3 831.3M871.2 831.2L897.1 848.7M897.1 848.7L926.2 860.1M926.2 860.1L957.2 864.6M957.2 864.6L988.4 862.2M893.0 568.2L859.9 587.5M994.4 893.2L1031.0 881.8M842.3 563.8L809.4 594.5M809.4 594.5L784.2 631.7M784.2 631.7L767.9 673.6M767.9 673.6L761.4 718.1M761.4 718.1L764.8 762.9M962.0 725.0L929.0 739.5M962.0 725.0L929.0 739.5M995.0 710.5L1019.5 682.3M990.9 703.5L1019.5 682.3M990.9 703.5L1008.6 670.6M985.4 697.6L1008.6 670.6M929.0 739.5L896.4 753.8M896.4 753.8L876.6 788.4M904.5 767.7L876.6 788.4M876.6 788.4L849.8 808.3M876.6 788.4L871.2 831.2M892.9 805.8L871.2 831.2M892.9 805.8L897.1 848.7M912.6 819.2L897.1 848.7M912.6 819.2L926.2 860.1M934.8 827.8L926.2 860.1M934.8 827.8L957.2 864.6M958.3 831.3L957.2 864.6M958.3 831.3L988.4 862.2M905.7 597.1L893.0 568.2M988.4 862.2L994.4 893.2M859.9 587.5L842.3 563.8M859.9 587.5L809.4 594.5M831.8 613.6L809.4 594.5M831.8 613.6L784.2 631.7M810.3 645.4L784.2 631.7M810.3 645.4L767.9 673.6M796.4 681.2L767.9 673.6M796.4 681.2L761.4 718.1M790.8 719.1L761.4 718.1M793.8 757.4L764.8 762.9M809.4 594.5L789.0 577.0M809.4 594.5L760.4 619.2M784.2 631.7L760.4 619.2M784.2 631.7L741.9 666.7"/><path stroke="rgb(176,112,32)" d="M985.4 697.6L978.8 693.1M978.8 693.1L971.2 690.1M926.0 723.8L926.6 731.8M995.3 661.6L980.3 655.7M980.3 655.7L964.5 653.4M964.5 653.4L948.5 654.6M892.7 706.7L890.4 722.5M890.4 722.5L891.6 738.5M965.7 618.7L941.9 620.6M941.9 620.6L919.2 627.7M867.8 675.6L859.2 697.8M859.2 697.8L855.7 721.3M855.7 721.3L857.6 745.1M935.6 587.8L905.7 597.1M905.7 597.1L878.7 612.8M878.7 612.8L855.8 634.2M855.8 634.2L838.3 660.1M838.3 660.1L826.9 689.2M826.9 689.2L822.4 720.2M859.9 587.5L831.8 613.6M831.8 613.6L810.3 645.4M999.9 922.2L1042.8 908.8M1053.7 933.4L1097.8 907.8M1063.4 955.4L1112.1 927.1M1112.1 927.1L1153.3 888.6M1124.6 943.9L1169.2 902.2M962.0 725.0L978.8 693.1M962.0 725.0L978.8 693.1M962.0 725.0L926.6 731.8M962.0 725.0L926.6 731.8M978.8 693.1L995.3 661.6M978.8 693.1L980.3 655.7M971.2 690.1L980.3 655.7M971.2 690.1L964.5 653.4M926.0 723.8L891.6 738.5M926.6 731.8L891.6 738.5M980.3 655.7L989.2 622.2M980.3 655.7L965.7 618.7M964.5 653.4L965.7 618.7M964.5 653.4L941.9 620.6M948.5 654.6L941.9 620.6M892.7 706.7L859.2 697.8M892.7 706.7L855.7 721.3M890.4 722.5L855.7 721.3M890.4 722.5L857.6 745.1M965.7 618.7L935.6 587.8M941.9 620.6L935.6 587.8M941.9 620.6L905.7 597.1M919.2 627.7L905.7 597.1M919.2 627.7L878.7 612.8M881.2 655.9L838.3 660.1M867.8 675.6L838.3 660.1M867.8 675.6L826.9 689.2M859.2 697.8L826.9 689.2M859.2 697.8L822.4 720.2M855.7 721.3L822.4 720.2M905.7 597.1L859.9 587.5M878.7 612.8L859.9 587.5M878.7 612.8L831.8 613.6M855.8 634.2L831.8 613.6M855.8 634.2L810.3 645.4M838.3 660.1L810.3 645.4M838.3 660.1L796.4 681.2M956.1 896.2L999.9 922.2M994.4 893.2L999.9 922.2M994.4 893.2L1042.8 908.8M999.9 922.2L1053.7 933.4M1042.8 908.8L1053.7 933.4M1042.8 908.8L1097.8 907.8M1053.7 933.4L1063.4 955.4M1053.7 933.4L1112.1 927.1M1097.8 907.8L1112.1 927.1M1112.1 927.1L1124.6 943.9M1112.1 927.1L1169.2 902.2M1153.3 888.6L1169.2 902.2"/><path stroke="rgb(176,96,32)" d="M971.2 690.1L963.2 689.0M963.2 689.0L955.2 689.6M948.5 654.6L933.2 659.4M933.2 659.4L919.3 667.5M898.6 691.7L892.7 706.7M919.2 627.7L898.6 639.6M898.6 639.6L881.2 655.9M881.2 655.9L867.8 675.6M1135.0 957.9L1182.5 913.6M1182.5 913.6L1218.9 859.8M1193.0 922.6L1231.1 866.2M1200.6 929.1L1240.0 870.9M1205.2 933.0L1245.3 873.7M1206.7 934.3L1247.1 874.6M962.0 725.0L971.2 690.1M962.0 725.0L971.2 690.1M962.0 725.0L963.2 689.0M962.0 725.0L963.2 689.0M963.2 689.0L964.5 653.4M963.2 689.0L948.5 654.6M955.2 689.6L948.5 654.6M955.2 689.6L933.2 659.4M948.5 654.6L919.2 627.7M933.2 659.4L919.2 627.7M933.2 659.4L898.6 639.6M919.3 667.5L898.6 639.6M907.6 678.4L881.2 655.9M907.6 678.4L867.8 675.6M898.6 691.7L867.8 675.6M898.6 691.7L859.2 697.8M898.6 639.6L878.7 612.8M898.6 639.6L855.8 634.2M881.2 655.9L855.8 634.2M1124.6 943.9L1182.5 913.6M1169.2 902.2L1182.5 913.6M1135.0 957.9L1193.0 922.6M1182.5 913.6L1193.0 922.6M1182.5 913.6L1231.1 866.2M1193.0 922.6L1200.6 929.1M1193.0 922.6L1240.0 870.9M1200.6 929.1L1205.2 933.0M1200.6 929.1L1245.3 873.7M1205.2 933.0L1206.7 934.3M1205.2 933.0L1247.1 874.6"/><path stroke="rgb(176,80,32)" d="M955.2 689.6L947.5 692.0M919.3 667.5L907.6 678.4M907.6 678.4L898.6 691.7M947.5 692.0L933.2 659.4M947.5 692.0L919.3 667.5M919.3 667.5L881.2 655.9"/><path stroke="rgb(192,80,32)" d="M947.5 692.0L940.5 696.1M934.6 701.6L930.1 708.2M930.1 708.2L927.1 715.8M962.0 725.0L955.2 689.6M962.0 725.0L955.2 689.6M962.0 725.0L947.5 692.0M962.0 725.0L947.5 692.0M962.0 725.0L930.1 708.2M962.0 725.0L930.1 708.2M940.5 696.1L919.3 667.5M940.5 696.1L907.6 678.4M934.6 701.6L907.6 678.4M934.6 701.6L898.6 691.7M930.1 708.2L898.6 691.7"/><path stroke="rgb(192,64,32)" d="M940.5 696.1L934.6 701.6M962.0 725.0L940.5 696.1M962.0 725.0L940.5 696.1M962.0 725.0L934.6 701.6M962.0 725.0L934.6 701.6"/><path stroke="rgb(192,96,32)" d="M927.1 715.8L926.0 723.8M1078.8 990.6L1135.0 957.9M1143.2 969.0L1193.0 922.6M1149.2 977.0L1200.6 929.1M1152.8 981.9L1205.2 933.0M1154.0 983.5L1206.7 934.3M962.0 725.0L927.1 715.8M962.0 725.0L927.1 715.8M962.0 725.0L926.0 723.8M962.0 725.0L926.0 723.8M930.1 708.2L892.7 706.7M927.1 715.8L892.7 706.7M927.1 715.8L890.4 722.5M1071.8 974.6L1135.0 957.9M1124.6 943.9L1135.0 957.9M1078.8 990.6L1143.2 969.0M1135.0 957.9L1143.2 969.0M1143.2 969.0L1149.2 977.0M1143.2 969.0L1200.6 929.1M1149.2 977.0L1152.8 981.9M1149.2 977.0L1205.2 933.0M1152.8 981.9L1154.0 983.5M1152.8 981.9L1206.7 934.3"/><path stroke="rgb(176,128,32)" d="M926.6 731.8L929.0 739.5M891.6 738.5L896.4 753.8M857.6 745.1L864.7 767.8M822.4 720.2L824.8 751.4M824.8 751.4L834.1 781.3M834.1 781.3L849.8 808.3M849.8 808.3L871.2 831.2M810.3 645.4L796.4 681.2M796.4 681.2L790.8 719.1M790.8 719.1L793.8 757.4M793.8 757.4L805.2 794.0M805.2 794.0L824.5 827.1M850.6 855.2L882.4 876.7M882.4 876.7L918.2 890.6M918.2 890.6L956.1 896.2M956.1 896.2L994.4 893.2M962.0 725.0L990.9 703.5M962.0 725.0L990.9 703.5M962.0 725.0L985.4 697.6M962.0 725.0L985.4 697.6M985.4 697.6L995.3 661.6M926.6 731.8L896.4 753.8M891.6 738.5L857.6 745.1M891.6 738.5L864.7 767.8M896.4 753.8L864.7 767.8M855.7 721.3L824.8 751.4M857.6 745.1L824.8 751.4M857.6 745.1L834.1 781.3M864.7 767.8L834.1 781.3M864.7 767.8L849.8 808.3M826.9 689.2L796.4 681.2M826.9 689.2L790.8 719.1M822.4 720.2L790.8 719.1M822.4 720.2L793.8 757.4M824.8 751.4L793.8 757.4M824.8 751.4L805.2 794.0M834.1 781.3L805.2 794.0M834.1 781.3L824.5 827.1M849.8 808.3L824.5 827.1M849.8 808.3L850.6 855.2M871.2 831.2L850.6 855.2M871.2 831.2L882.4 876.7M897.1 848.7L882.4 876.7M897.1 848.7L918.2 890.6M926.2 860.1L918.2 890.6M926.2 860.1L956.1 896.2M957.2 864.6L956.1 896.2M957.2 864.6L994.4 893.2M790.8 719.1L764.8 762.9M793.8 757.4L778.2 805.8"/><path stroke="rgb(160,144,48)" d="M933.1 746.5L938.6 752.4M1032.4 711.5L1027.6 696.2M928.7 788.4L943.7 794.3M943.7 794.3L959.5 796.6M959.5 796.6L975.5 795.4M1031.3 743.3L1033.6 727.5M1033.6 727.5L1032.4 711.5M1066.4 704.9L1059.3 682.2M982.1 829.4L1004.8 822.3M1064.8 752.2L1068.3 728.7M1068.3 728.7L1066.4 704.9M968.9 524.4L924.1 527.8M924.1 527.8L881.2 541.2M919.0 501.4L870.3 516.6M870.3 516.6L826.2 542.2M826.2 542.2L789.0 577.0M811.9 522.9L770.7 561.4M770.7 561.4L739.1 608.0M1225.6 794.8L1234.5 734.4M1242.5 799.2L1251.9 735.0M962.0 725.0L933.1 746.5M962.0 725.0L933.1 746.5M997.4 718.2L1032.4 711.5M933.1 746.5L915.4 779.4M938.6 752.4L915.4 779.4M938.6 752.4L928.7 788.4M945.2 756.9L928.7 788.4M998.0 726.2L1032.4 711.5M1032.4 711.5L1066.4 704.9M1032.4 711.5L1059.3 682.2M1027.6 696.2L1059.3 682.2M943.7 794.3L934.8 827.8M943.7 794.3L958.3 831.3M959.5 796.6L958.3 831.3M959.5 796.6L982.1 829.4M975.5 795.4L982.1 829.4M1031.3 743.3L1064.8 752.2M1031.3 743.3L1068.3 728.7M1033.6 727.5L1068.3 728.7M1033.6 727.5L1066.4 704.9M1068.3 728.7L1099.2 698.6M1005.8 559.4L968.9 524.4M967.9 553.8L968.9 524.4M967.9 553.8L924.1 527.8M924.1 527.8L919.0 501.4M924.1 527.8L870.3 516.6M881.2 541.2L870.3 516.6M881.2 541.2L826.2 542.2M870.3 516.6L860.6 494.6M870.3 516.6L811.9 522.9M826.2 542.2L811.9 522.9M826.2 542.2L770.7 561.4M789.0 577.0L770.7 561.4M1189.6 732.8L1213.6 733.7M1205.4 789.4L1234.5 734.4M1213.6 733.7L1234.5 734.4M1225.6 794.8L1251.9 735.0M1265.5 805.3L1271.3 806.9M1271.3 806.9L1273.3 807.4"/><path stroke="rgb(160,160,48)" d="M938.6 752.4L945.2 756.9M945.2 756.9L952.8 759.9M952.8 759.9L960.8 761.0M996.9 734.2L998.0 726.2M860.6 494.6L811.9 522.9M799.4 506.1L754.8 547.8M754.8 547.8L720.6 598.3M962.0 725.0L938.6 752.4M962.0 725.0L938.6 752.4M962.0 725.0L945.2 756.9M962.0 725.0L945.2 756.9M962.0 725.0L998.0 726.2M962.0 725.0L998.0 726.2M945.2 756.9L943.7 794.3M952.8 759.9L943.7 794.3M952.8 759.9L959.5 796.6M960.8 761.0L959.5 796.6M996.9 734.2L1033.6 727.5M998.0 726.2L1033.6 727.5M811.9 522.9L799.4 506.1M811.9 522.9L754.8 547.8M770.7 561.4L754.8 547.8M770.7 561.4L720.6 598.3M1234.5 734.4L1251.9 735.0"/><path stroke="rgb(144,160,48)" d="M960.8 761.0L968.8 760.4M968.8 760.4L976.5 758.0M993.9 741.8L996.9 734.2M975.5 795.4L990.8 790.6M990.8 790.6L1004.7 782.5M1016.4 771.6L1025.4 758.3M1025.4 758.3L1031.3 743.3M1110.0 552.0L1067.8 523.4M1067.8 523.4L1020.3 504.9M1020.3 504.9L969.8 497.4M1209.2 677.5L1192.4 623.6M970.7 473.4L914.5 477.8M914.5 477.8L860.6 494.6M1213.6 733.7L1209.2 677.5M1234.5 734.4L1229.7 673.5M962.0 725.0L952.8 759.9M962.0 725.0L952.8 759.9M960.8 761.0L975.5 795.4M968.8 760.4L975.5 795.4M968.8 760.4L990.8 790.6M976.5 758.0L990.8 790.6M993.9 741.8L1025.4 758.3M993.9 741.8L1031.3 743.3M996.9 734.2L1031.3 743.3M1185.6 682.0L1209.2 677.5M1185.6 682.0L1192.4 623.6M1170.4 633.3L1192.4 623.6M1170.4 633.3L1164.1 574.9M1067.8 523.4L1026.4 481.6M1020.3 504.9L1026.4 481.6M1020.3 504.9L970.7 473.4M969.8 497.4L970.7 473.4M969.8 497.4L914.5 477.8M919.0 501.4L914.5 477.8M919.0 501.4L860.6 494.6M1189.6 732.8L1209.2 677.5M1209.2 677.5L1229.7 673.5M1209.2 677.5L1211.6 615.2M914.5 477.8L910.5 457.3M914.5 477.8L852.2 475.4M860.6 494.6L852.2 475.4M860.6 494.6L799.4 506.1M1213.6 733.7L1229.7 673.5"/><path stroke="rgb(128,176,48)" d="M976.5 758.0L983.5 753.9M989.4 748.4L993.9 741.8M1211.6 615.2L1180.9 562.4M1180.9 562.4L1139.2 517.8M1139.2 517.8L1088.7 483.6M1088.7 483.6L1031.8 461.4M1031.8 461.4L971.4 452.5M971.4 452.5L910.5 457.3M1246.9 670.2L1227.6 608.2M1227.6 608.2L1194.9 552.0M962.0 725.0L968.8 760.4M962.0 725.0L968.8 760.4M962.0 725.0L976.5 758.0M962.0 725.0L976.5 758.0M962.0 725.0L993.9 741.8M962.0 725.0L993.9 741.8M1125.6 533.7L1139.2 517.8M1125.6 533.7L1088.7 483.6M1079.0 502.1L1088.7 483.6M1079.0 502.1L1031.8 461.4M1026.4 481.6L1031.8 461.4M1026.4 481.6L971.4 452.5M970.7 473.4L971.4 452.5M970.7 473.4L910.5 457.3M1211.6 615.2L1227.6 608.2M1211.6 615.2L1194.9 552.0M1180.9 562.4L1194.9 552.0M1180.9 562.4L1150.6 504.5M1139.2 517.8L1150.6 504.5M1139.2 517.8L1096.8 468.1M1088.7 483.6L1036.2 444.5M1031.8 461.4L1036.2 444.5M1031.8 461.4L972.0 435.1M971.4 452.5L907.2 440.1M910.5 457.3L907.2 440.1M910.5 457.3L845.2 459.4"/><path stroke="rgb(112,176,48)" d="M983.5 753.9L989.4 748.4M962.0 725.0L983.5 753.9M962.0 725.0L983.5 753.9M962.0 725.0L989.4 748.4M962.0 725.0L989.4 748.4M1088.7 483.6L1096.8 468.1"/><path stroke="rgb(176,160,48)" d="M998.0 726.2L997.4 718.2M720.6 598.3L698.4 655.2M698.4 655.2L689.5 715.6M1265.5 805.3L1275.7 735.8M1271.3 806.9L1281.8 736.0M1273.3 807.4L1283.8 736.1M962.0 725.0L997.4 718.2M962.0 725.0L997.4 718.2M739.1 608.0L720.6 598.3M739.1 608.0L698.4 655.2M718.6 660.6L698.4 655.2M718.6 660.6L689.5 715.6M698.4 655.2L672.1 715.0M1251.9 735.0L1265.8 735.5M1255.8 802.8L1275.7 735.8M1265.5 805.3L1281.8 736.0M1271.3 806.9L1283.8 736.1"/><path stroke="rgb(160,128,48)" d="M1027.6 696.2L1019.5 682.3M1019.5 682.3L1008.6 670.6M1008.6 670.6L995.3 661.6M1059.3 682.2L1047.4 661.6M1047.4 661.6L1031.1 644.2M1031.1 644.2L1011.4 630.8M1011.4 630.8L989.2 622.2M958.3 831.3L982.1 829.4M1099.2 698.6L1089.9 668.7M1052.8 618.8L1026.9 601.3M1026.9 601.3L997.8 589.9M997.8 589.9L966.8 585.4M966.8 585.4L935.6 587.8M988.4 862.2L1018.3 852.9M1018.3 852.9L1045.3 837.2M1085.7 789.9L1097.1 760.8M1097.1 760.8L1101.6 729.8M1101.6 729.8L1099.2 698.6M1041.6 573.3L1005.8 559.4M1005.8 559.4L967.9 553.8M967.9 553.8L929.6 556.8M929.6 556.8L893.0 568.2M1031.0 881.8L1064.1 862.5M1064.1 862.5L1092.2 836.4M1092.2 836.4L1113.7 804.6M1113.7 804.6L1127.6 768.8M1127.6 768.8L1133.2 730.9M881.2 541.2L842.3 563.8M1139.8 818.3L1156.1 776.4M1156.1 776.4L1162.6 731.9M1182.1 783.3L1189.6 732.8M1205.4 789.4L1213.6 733.7M1240.0 870.9L1265.5 805.3M1245.3 873.7L1271.3 806.9M1247.1 874.6L1273.3 807.4M1027.6 696.2L1047.4 661.6M1019.5 682.3L1047.4 661.6M1019.5 682.3L1031.1 644.2M1008.6 670.6L1031.1 644.2M1008.6 670.6L1011.4 630.8M995.3 661.6L1011.4 630.8M1066.4 704.9L1099.2 698.6M1066.4 704.9L1089.9 668.7M1059.3 682.2L1089.9 668.7M1059.3 682.2L1074.2 641.7M1047.4 661.6L1074.2 641.7M1047.4 661.6L1052.8 618.8M1031.1 644.2L1052.8 618.8M1031.1 644.2L1026.9 601.3M1011.4 630.8L1026.9 601.3M1011.4 630.8L997.8 589.9M989.2 622.2L997.8 589.9M989.2 622.2L966.8 585.4M965.7 618.7L966.8 585.4M982.1 829.4L988.4 862.2M982.1 829.4L1018.3 852.9M1004.8 822.3L1018.3 852.9M1064.8 752.2L1097.1 760.8M1064.8 752.2L1101.6 729.8M1068.3 728.7L1101.6 729.8M1026.9 601.3L1041.6 573.3M1026.9 601.3L1005.8 559.4M997.8 589.9L1005.8 559.4M997.8 589.9L967.9 553.8M966.8 585.4L967.9 553.8M966.8 585.4L929.6 556.8M935.6 587.8L929.6 556.8M935.6 587.8L893.0 568.2M988.4 862.2L1031.0 881.8M1018.3 852.9L1031.0 881.8M1018.3 852.9L1064.1 862.5M1045.3 837.2L1064.1 862.5M1085.7 789.9L1113.7 804.6M1085.7 789.9L1127.6 768.8M1097.1 760.8L1127.6 768.8M1097.1 760.8L1133.2 730.9M1101.6 729.8L1133.2 730.9M929.6 556.8L924.1 527.8M929.6 556.8L881.2 541.2M893.0 568.2L881.2 541.2M893.0 568.2L842.3 563.8M1064.1 862.5L1081.7 886.2M1064.1 862.5L1114.6 855.5M1092.2 836.4L1114.6 855.5M1092.2 836.4L1139.8 818.3M1113.7 804.6L1139.8 818.3M1113.7 804.6L1156.1 776.4M1127.6 768.8L1156.1 776.4M1127.6 768.8L1162.6 731.9M1133.2 730.9L1162.6 731.9M842.3 563.8L826.2 542.2M842.3 563.8L789.0 577.0M1139.8 818.3L1182.1 783.3M1156.1 776.4L1182.1 783.3M1156.1 776.4L1189.6 732.8M1162.6 731.9L1189.6 732.8M1182.1 783.3L1205.4 789.4M1182.1 783.3L1213.6 733.7M1205.4 789.4L1225.6 794.8M1225.6 794.8L1242.5 799.2M1242.5 799.2L1255.8 802.8M1240.0 870.9L1271.3 806.9M1245.3 873.7L1273.3 807.4"/><path stroke="rgb(128,160,48)" d="M1004.7 782.5L1016.4 771.6M1192.4 623.6L1164.1 574.9M1164.1 574.9L1125.6 533.7M1125.6 533.7L1079.0 502.1M1079.0 502.1L1026.4 481.6M1026.4 481.6L970.7 473.4M976.5 758.0L1004.7 782.5M983.5 753.9L1004.7 782.5M983.5 753.9L1016.4 771.6M989.4 748.4L1016.4 771.6M989.4 748.4L1025.4 758.3M1144.8 589.2L1164.1 574.9M1144.8 589.2L1125.6 533.7M1110.0 552.0L1125.6 533.7M1110.0 552.0L1079.0 502.1M1067.8 523.4L1079.0 502.1M1192.4 623.6L1211.6 615.2M1192.4 623.6L1180.9 562.4M1164.1 574.9L1180.9 562.4M1164.1 574.9L1139.2 517.8"/><path stroke="rgb(160,112,32)" d="M989.2 622.2L965.7 618.7M1153.3 888.6L1184.9 842.0M995.3 661.6L989.2 622.2M1097.8 907.8L1153.3 888.6M1135.0 873.0L1153.3 888.6M1153.3 888.6L1203.4 851.7M1203.4 851.7L1218.9 859.8"/><path stroke="rgb(144,144,48)" d="M1004.8 822.3L1025.4 810.4M1025.4 810.4L1042.8 794.1M1042.8 794.1L1056.2 774.4M1056.2 774.4L1064.8 752.2M1118.8 656.0L1099.5 622.9M1099.5 622.9L1073.4 594.8M1073.4 594.8L1041.6 573.3M1159.2 687.1L1145.8 644.2M1145.8 644.2L1123.2 605.3M1123.2 605.3L1092.5 572.4M1092.5 572.4L1055.3 547.2M1055.3 547.2L1013.4 530.9M1013.4 530.9L968.9 524.4M1162.6 731.9L1159.2 687.1M1185.6 682.0L1170.4 633.3M1170.4 633.3L1144.8 589.2M969.8 497.4L919.0 501.4M1189.6 732.8L1185.6 682.0M975.5 795.4L1004.8 822.3M990.8 790.6L1004.8 822.3M990.8 790.6L1025.4 810.4M1004.7 782.5L1025.4 810.4M1016.4 771.6L1056.2 774.4M1025.4 758.3L1056.2 774.4M1025.4 758.3L1064.8 752.2M1025.4 810.4L1068.2 815.8M1130.2 692.6L1159.2 687.1M1130.2 692.6L1145.8 644.2M1118.8 656.0L1145.8 644.2M1118.8 656.0L1123.2 605.3M1099.5 622.9L1123.2 605.3M1099.5 622.9L1092.5 572.4M1073.4 594.8L1092.5 572.4M1073.4 594.8L1055.3 547.2M1041.6 573.3L1055.3 547.2M1041.6 573.3L1013.4 530.9M1005.8 559.4L1013.4 530.9M1133.2 730.9L1159.2 687.1M1159.2 687.1L1185.6 682.0M1159.2 687.1L1170.4 633.3M1145.8 644.2L1170.4 633.3M1145.8 644.2L1144.8 589.2M1123.2 605.3L1144.8 589.2M1123.2 605.3L1110.0 552.0M1092.5 572.4L1110.0 552.0M1092.5 572.4L1067.8 523.4M1055.3 547.2L1067.8 523.4M1055.3 547.2L1020.3 504.9M1013.4 530.9L1020.3 504.9M1013.4 530.9L969.8 497.4M968.9 524.4L969.8 497.4M968.9 524.4L919.0 501.4M1162.6 731.9L1185.6 682.0"/><path stroke="rgb(144,128,48)" d="M1089.9 668.7L1074.2 641.7M1074.2 641.7L1052.8 618.8M1045.3 837.2L1068.2 815.8M1068.2 815.8L1085.7 789.9M1130.2 692.6L1118.8 656.0M1133.2 730.9L1130.2 692.6M1004.8 822.3L1045.3 837.2M1025.4 810.4L1045.3 837.2M1042.8 794.1L1068.2 815.8M1042.8 794.1L1085.7 789.9M1056.2 774.4L1085.7 789.9M1056.2 774.4L1097.1 760.8M1099.2 698.6L1130.2 692.6M1099.2 698.6L1118.8 656.0M1089.9 668.7L1118.8 656.0M1089.9 668.7L1099.5 622.9M1074.2 641.7L1099.5 622.9M1074.2 641.7L1073.4 594.8M1052.8 618.8L1073.4 594.8M1052.8 618.8L1041.6 573.3M1045.3 837.2L1092.2 836.4M1068.2 815.8L1092.2 836.4M1068.2 815.8L1113.7 804.6M1101.6 729.8L1130.2 692.6"/><path stroke="rgb(192,128,32)" d="M824.5 827.1L850.6 855.2M831.5 877.6L868.7 902.8M868.7 902.8L910.6 919.1M910.6 919.1L955.1 925.6M856.2 926.6L903.7 945.1M903.7 945.1L954.2 952.6M805.2 794.0L800.8 844.7M824.5 827.1L800.8 844.7M824.5 827.1L831.5 877.6M850.6 855.2L831.5 877.6M850.6 855.2L868.7 902.8M882.4 876.7L868.7 902.8M882.4 876.7L910.6 919.1M918.2 890.6L910.6 919.1M918.2 890.6L955.1 925.6M956.1 896.2L955.1 925.6M868.7 902.8L856.2 926.6M868.7 902.8L903.7 945.1M910.6 919.1L903.7 945.1M910.6 919.1L954.2 952.6M955.1 925.6L954.2 952.6M856.2 926.6L897.6 968.4M903.7 945.1L897.6 968.4M903.7 945.1L953.3 976.6M954.2 952.6L953.3 976.6"/><path stroke="rgb(192,128,48)" d="M764.8 762.9L778.2 805.8M778.2 805.8L800.8 844.7M800.8 844.7L831.5 877.6M779.2 860.8L814.0 898.0M814.0 898.0L856.2 926.6M805.2 794.0L778.2 805.8M778.2 805.8L779.2 860.8M800.8 844.7L779.2 860.8M800.8 844.7L814.0 898.0M831.5 877.6L814.0 898.0M831.5 877.6L856.2 926.6M814.0 898.0L798.4 916.3M814.0 898.0L845.0 947.9M856.2 926.6L845.0 947.9"/><path stroke="rgb(192,112,32)" d="M955.1 925.6L999.9 922.2M954.2 952.6L1005.0 948.6M1005.0 948.6L1053.7 933.4M1009.5 972.2L1063.4 955.4M1013.5 992.7L1071.8 974.6M1071.8 974.6L1124.6 943.9M926.0 723.8L890.4 722.5M955.1 925.6L1005.0 948.6M999.9 922.2L1005.0 948.6M954.2 952.6L1009.5 972.2M1005.0 948.6L1009.5 972.2M1005.0 948.6L1063.4 955.4M1009.5 972.2L1013.5 992.7M1009.5 972.2L1071.8 974.6M1063.4 955.4L1071.8 974.6M1063.4 955.4L1124.6 943.9M1071.8 974.6L1078.8 990.6"/><path stroke="rgb(176,112,48)" d="M1042.8 908.8L1081.7 886.2M1031.0 881.8L1042.8 908.8"/><path stroke="rgb(160,112,48)" d="M1081.7 886.2L1114.6 855.5M1114.6 855.5L1139.8 818.3M1097.8 907.8L1135.0 873.0M1135.0 873.0L1163.6 830.8M1163.6 830.8L1182.1 783.3M1184.9 842.0L1205.4 789.4M1203.4 851.7L1225.6 794.8M1218.9 859.8L1242.5 799.2M1231.1 866.2L1255.8 802.8M1031.0 881.8L1081.7 886.2M1081.7 886.2L1097.8 907.8M1081.7 886.2L1135.0 873.0M1114.6 855.5L1135.0 873.0M1114.6 855.5L1163.6 830.8M1139.8 818.3L1163.6 830.8M1135.0 873.0L1184.9 842.0M1163.6 830.8L1184.9 842.0M1163.6 830.8L1205.4 789.4M1184.9 842.0L1203.4 851.7M1184.9 842.0L1225.6 794.8M1203.4 851.7L1242.5 799.2M1218.9 859.8L1255.8 802.8M1231.1 866.2L1265.5 805.3M1240.0 870.9L1245.3 873.7M1245.3 873.7L1247.1 874.6"/><path stroke="rgb(128,144,48)" d="M1144.8 589.2L1110.0 552.0M1004.7 782.5L1042.8 794.1M1016.4 771.6L1042.8 794.1"/><path stroke="rgb(192,144,48)" d="M734.4 717.2L738.4 768.0M738.4 768.0L753.6 816.7M753.6 816.7L779.2 860.8M710.4 716.3L714.8 772.5M714.8 772.5L731.6 826.4M731.6 826.4L759.9 875.1M759.9 875.1L798.4 916.3M761.4 718.1L738.4 768.0M764.8 762.9L738.4 768.0M764.8 762.9L753.6 816.7M778.2 805.8L753.6 816.7M734.4 717.2L710.4 716.3M734.4 717.2L714.8 772.5M738.4 768.0L714.8 772.5M738.4 768.0L731.6 826.4M753.6 816.7L731.6 826.4M753.6 816.7L759.9 875.1M779.2 860.8L759.9 875.1M779.2 860.8L798.4 916.3M714.8 772.5L712.4 834.8M731.6 826.4L712.4 834.8M731.6 826.4L743.1 887.6"/><path stroke="rgb(208,128,48)" d="M798.4 916.3L845.0 947.9M845.0 947.9L897.6 968.4M835.3 966.4L892.2 988.6M845.0 947.9L835.3 966.4M845.0 947.9L892.2 988.6M892.2 988.6L887.8 1005.5"/><path stroke="rgb(208,128,32)" d="M897.6 968.4L953.3 976.6M892.2 988.6L952.6 997.5M952.6 997.5L1013.5 992.7M952.0 1014.9L1016.8 1009.9M897.6 968.4L892.2 988.6M897.6 968.4L952.6 997.5M953.3 976.6L952.6 997.5M953.3 976.6L1013.5 992.7M892.2 988.6L952.0 1014.9M952.6 997.5L952.0 1014.9M952.6 997.5L1016.8 1009.9"/><path stroke="rgb(208,112,32)" d="M953.3 976.6L1009.5 972.2M1016.8 1009.9L1078.8 990.6M1019.4 1023.5L1084.4 1003.2M1021.3 1033.3L1088.4 1012.4M1022.4 1039.2L1090.8 1017.9M1091.7 1019.7L1154.0 983.5M1013.5 992.7L1016.8 1009.9M1013.5 992.7L1078.8 990.6M1016.8 1009.9L1019.4 1023.5M1016.8 1009.9L1084.4 1003.2M1078.8 990.6L1084.4 1003.2M1019.4 1023.5L1088.4 1012.4M1084.4 1003.2L1088.4 1012.4M1021.3 1033.3L1090.8 1017.9M1088.4 1012.4L1090.8 1017.9M1022.4 1039.2L1091.7 1019.7M1090.8 1017.9L1091.7 1019.7"/><path stroke="rgb(144,176,48)" d="M1229.7 673.5L1211.6 615.2M910.5 457.3L852.2 475.4M852.2 475.4L799.4 506.1M845.2 459.4L789.0 492.1M789.0 492.1L741.5 536.4M1251.9 735.0L1246.9 670.2M962.0 725.0L960.8 761.0M962.0 725.0L960.8 761.0M962.0 725.0L996.9 734.2M962.0 725.0L996.9 734.2M1229.7 673.5L1246.9 670.2M1229.7 673.5L1227.6 608.2M852.2 475.4L845.2 459.4M852.2 475.4L789.0 492.1M799.4 506.1L789.0 492.1M1234.5 734.4L1246.9 670.2M1251.9 735.0L1260.5 667.6"/><path stroke="rgb(192,160,48)" d="M689.5 715.6L694.3 776.5M694.3 776.5L712.4 834.8M677.1 779.8L696.4 841.8M710.4 716.3L689.5 715.6M710.4 716.3L694.3 776.5M714.8 772.5L694.3 776.5M689.5 715.6L677.1 779.8M694.3 776.5L677.1 779.8M694.3 776.5L696.4 841.8"/><path stroke="rgb(208,144,48)" d="M712.4 834.8L743.1 887.6M743.1 887.6L784.8 932.2M784.8 932.2L835.3 966.4M773.4 945.5L827.2 981.9M827.2 981.9L887.8 1005.5M759.9 875.1L743.1 887.6M759.9 875.1L784.8 932.2M798.4 916.3L784.8 932.2M798.4 916.3L835.3 966.4M743.1 887.6L773.4 945.5M784.8 932.2L773.4 945.5M784.8 932.2L827.2 981.9M835.3 966.4L827.2 981.9M835.3 966.4L887.8 1005.5M773.4 945.5L820.8 994.1"/><path stroke="rgb(160,96,32)" d="M1169.2 902.2L1203.4 851.7M1169.2 902.2L1218.9 859.8M1218.9 859.8L1231.1 866.2M1231.1 866.2L1240.0 870.9"/><path stroke="rgb(112,192,48)" d="M1194.9 552.0L1150.6 504.5M1150.6 504.5L1096.8 468.1M1096.8 468.1L1036.2 444.5M1036.2 444.5L972.0 435.1M1227.6 608.2L1206.0 543.8M1194.9 552.0L1206.0 543.8M1194.9 552.0L1159.6 494.0M1150.6 504.5L1159.6 494.0M1150.6 504.5L1103.2 455.9M1096.8 468.1L1103.2 455.9M1096.8 468.1L1039.8 431.2M1036.2 444.5L1039.8 431.2M1036.2 444.5L972.5 421.2M972.0 435.1L972.5 421.2M972.0 435.1L904.6 426.5"/><path stroke="rgb(128,192,48)" d="M972.0 435.1L907.2 440.1M907.2 440.1L845.2 459.4M971.4 452.5L972.0 435.1M1246.9 670.2L1240.2 602.6M1227.6 608.2L1240.2 602.6M907.2 440.1L904.6 426.5M907.2 440.1L839.6 446.8M845.2 459.4L839.6 446.8"/><path stroke="rgb(160,176,48)" d="M741.5 536.4L705.1 590.2M799.4 506.1L741.5 536.4M754.8 547.8L741.5 536.4M754.8 547.8L705.1 590.2M720.6 598.3L705.1 590.2M741.5 536.4L692.9 583.8M705.1 590.2L692.9 583.8"/><path stroke="rgb(176,176,48)" d="M705.1 590.2L681.5 650.8M681.5 650.8L672.1 715.0M720.6 598.3L681.5 650.8M698.4 655.2L681.5 650.8M705.1 590.2L668.2 647.2M681.5 650.8L668.2 647.2M1265.8 735.5L1275.7 735.8M1275.7 735.8L1281.8 736.0M1281.8 736.0L1283.8 736.1"/><path stroke="rgb(192,176,48)" d="M672.1 715.0L677.1 779.8M658.2 714.5L663.5 782.4M689.5 715.6L672.1 715.0M681.5 650.8L658.2 714.5M672.1 715.0L658.2 714.5M672.1 715.0L663.5 782.4M677.1 779.8L663.5 782.4"/><path stroke="rgb(208,160,48)" d="M696.4 841.8L729.1 898.0M729.1 898.0L773.4 945.5M718.0 906.2L764.4 956.0M712.4 834.8L696.4 841.8M712.4 834.8L729.1 898.0M743.1 887.6L729.1 898.0M696.4 841.8L718.0 906.2M729.1 898.0L718.0 906.2M729.1 898.0L764.4 956.0M773.4 945.5L764.4 956.0"/><path stroke="rgb(224,128,32)" d="M887.8 1005.5L952.0 1014.9M951.5 1028.8L1019.4 1023.5M951.2 1038.7L1021.3 1033.3M951.0 1044.8L1022.4 1039.2M950.9 1046.8L1022.8 1041.2M952.0 1014.9L951.5 1028.8M952.0 1014.9L1019.4 1023.5M951.5 1028.8L951.2 1038.7M951.5 1028.8L1021.3 1033.3M1019.4 1023.5L1021.3 1033.3M951.2 1038.7L1022.4 1039.2M1021.3 1033.3L1022.4 1039.2M951.0 1044.8L1022.8 1041.2M1022.4 1039.2L1022.8 1041.2"/><path stroke="rgb(128,192,64)" d="M1260.5 667.6L1240.2 602.6M904.6 426.5L839.6 446.8M839.6 446.8L780.8 481.0M1260.5 667.6L1249.4 598.6M1240.2 602.6L1249.4 598.6"/><path stroke="rgb(112,192,64)" d="M1240.2 602.6L1206.0 543.8M1206.0 543.8L1159.6 494.0M1159.6 494.0L1103.2 455.9M1240.2 602.6L1214.0 537.8"/><path stroke="rgb(112,208,64)" d="M1103.2 455.9L1039.8 431.2M1039.8 431.2L972.5 421.2M972.5 421.2L904.6 426.5M1249.4 598.6L1214.0 537.8M1214.0 537.8L1166.1 486.4M1166.1 486.4L1107.9 447.0M1107.9 447.0L1042.3 421.5M1042.3 421.5L972.8 411.3M972.8 411.3L902.7 416.7M1254.9 596.2L1218.9 534.2M1218.9 534.2L1170.0 481.8M901.6 410.8L833.2 432.1M1256.7 595.3L1220.5 533.0M1220.5 533.0L1171.3 480.3M1206.0 543.8L1214.0 537.8M1206.0 543.8L1166.1 486.4M1159.6 494.0L1166.1 486.4M1159.6 494.0L1107.9 447.0M1103.2 455.9L1107.9 447.0M1103.2 455.9L1042.3 421.5M1039.8 431.2L1042.3 421.5M1039.8 431.2L972.8 411.3M972.5 421.2L972.8 411.3M972.5 421.2L902.7 416.7M904.6 426.5L902.7 416.7M1249.4 598.6L1254.9 596.2M1249.4 598.6L1218.9 534.2M1214.0 537.8L1218.9 534.2M1214.0 537.8L1170.0 481.8M1166.1 486.4L1170.0 481.8M1166.1 486.4L1110.7 441.7M972.8 411.3L901.6 410.8M902.7 416.7L901.6 410.8M902.7 416.7L833.2 432.1M1254.9 596.2L1256.7 595.3M1254.9 596.2L1220.5 533.0M1218.9 534.2L1220.5 533.0M1218.9 534.2L1171.3 480.3M901.6 410.8L832.3 430.3"/><path stroke="rgb(144,192,48)" d="M780.8 481.0L731.0 527.4M1246.9 670.2L1260.5 667.6M845.2 459.4L780.8 481.0M789.0 492.1L780.8 481.0M789.0 492.1L731.0 527.4M780.8 481.0L723.4 520.9M731.0 527.4L723.4 520.9"/><path stroke="rgb(160,192,48)" d="M731.0 527.4L692.9 583.8M723.4 520.9L684.0 579.1M741.5 536.4L731.0 527.4M731.0 527.4L684.0 579.1M692.9 583.8L684.0 579.1"/><path stroke="rgb(176,192,48)" d="M692.9 583.8L668.2 647.2M684.0 579.1L658.5 644.7M692.9 583.8L658.5 644.7M668.2 647.2L658.5 644.7M684.0 579.1L652.7 643.1M658.5 644.7L652.7 643.1"/><path stroke="rgb(192,192,48)" d="M668.2 647.2L658.2 714.5M658.5 644.7L648.3 714.2M648.3 714.2L653.7 784.3M652.7 643.1L642.2 714.0M642.2 714.0L647.8 785.4M650.7 642.6L640.2 713.9M640.2 713.9L645.8 785.8M668.2 647.2L648.3 714.2M658.2 714.5L648.3 714.2M658.2 714.5L653.7 784.3M658.5 644.7L642.2 714.0M648.3 714.2L642.2 714.0M648.3 714.2L647.8 785.4M652.7 643.1L640.2 713.9M642.2 714.0L640.2 713.9M642.2 714.0L645.8 785.8"/><path stroke="rgb(208,176,48)" d="M663.5 782.4L683.8 847.4M683.8 847.4L718.0 906.2M653.7 784.3L674.6 851.4M674.6 851.4L710.0 912.2M669.1 853.8L705.1 915.8M667.3 854.7L703.5 917.0M677.1 779.8L683.8 847.4M696.4 841.8L683.8 847.4M663.5 782.4L653.7 784.3M663.5 782.4L674.6 851.4M683.8 847.4L674.6 851.4M683.8 847.4L710.0 912.2M718.0 906.2L710.0 912.2M674.6 851.4L669.1 853.8M674.6 851.4L705.1 915.8M669.1 853.8L703.5 917.0"/><path stroke="rgb(224,144,48)" d="M764.4 956.0L820.8 994.1M820.8 994.1L884.2 1018.8M884.2 1018.8L951.5 1028.8M816.1 1003.0L881.7 1028.5M881.7 1028.5L951.2 1038.7M813.3 1008.3L880.1 1034.3M880.1 1034.3L951.0 1044.8M879.6 1036.3L950.9 1046.8M827.2 981.9L820.8 994.1M827.2 981.9L884.2 1018.8M887.8 1005.5L884.2 1018.8M820.8 994.1L816.1 1003.0M820.8 994.1L881.7 1028.5M884.2 1018.8L881.7 1028.5M884.2 1018.8L951.2 1038.7M816.1 1003.0L880.1 1034.3M881.7 1028.5L880.1 1034.3M881.7 1028.5L951.0 1044.8M951.2 1038.7L951.0 1044.8M880.1 1034.3L879.6 1036.3M880.1 1034.3L950.9 1046.8M951.0 1044.8L950.9 1046.8"/><path stroke="rgb(208,96,32)" d="M1084.4 1003.2L1143.2 969.0M1088.4 1012.4L1149.2 977.0M1090.8 1017.9L1152.8 981.9M1084.4 1003.2L1149.2 977.0M1088.4 1012.4L1152.8 981.9M1090.8 1017.9L1154.0 983.5"/><path stroke="rgb(144,192,64)" d="M1265.8 735.5L1260.5 667.6M1275.7 735.8L1270.3 665.7M1260.5 667.6L1270.3 665.7M1265.8 735.5L1270.3 665.7M1275.7 735.8L1276.2 664.6"/><path stroke="rgb(128,208,64)" d="M1270.3 665.7L1249.4 598.6M902.7 416.7L835.6 437.6M835.6 437.6L774.8 473.0M1276.2 664.6L1254.9 596.2M833.2 432.1L771.2 468.1M1278.2 664.2L1256.7 595.3M832.3 430.3L770.0 466.5M904.6 426.5L835.6 437.6M839.6 446.8L835.6 437.6M839.6 446.8L774.8 473.0M1270.3 665.7L1254.9 596.2M835.6 437.6L833.2 432.1M835.6 437.6L771.2 468.1M1276.2 664.6L1278.2 664.2M1276.2 664.6L1256.7 595.3M833.2 432.1L832.3 430.3M833.2 432.1L770.0 466.5"/><path stroke="rgb(144,208,64)" d="M774.8 473.0L723.4 520.9M771.2 468.1L718.8 517.0M1281.8 736.0L1276.2 664.6M770.0 466.5L717.3 515.7M1283.8 736.1L1278.2 664.2M780.8 481.0L774.8 473.0M1270.3 665.7L1276.2 664.6M774.8 473.0L771.2 468.1M774.8 473.0L718.8 517.0M771.2 468.1L770.0 466.5M771.2 468.1L717.3 515.7M718.8 517.0L717.3 515.7M1281.8 736.0L1278.2 664.2"/><path stroke="rgb(224,160,48)" d="M710.0 912.2L757.9 963.6M757.9 963.6L816.1 1003.0M754.0 968.2L813.3 1008.3M752.7 969.7L812.4 1010.1M812.4 1010.1L879.6 1036.3M718.0 906.2L757.9 963.6M764.4 956.0L757.9 963.6M764.4 956.0L816.1 1003.0M710.0 912.2L754.0 968.2M757.9 963.6L754.0 968.2M757.9 963.6L813.3 1008.3M816.1 1003.0L813.3 1008.3M754.0 968.2L752.7 969.7M754.0 968.2L812.4 1010.1M813.3 1008.3L812.4 1010.1M813.3 1008.3L879.6 1036.3"/><path stroke="rgb(96,208,64)" d="M1170.0 481.8L1110.7 441.7M1110.7 441.7L1043.9 415.7M1171.3 480.3L1111.6 439.9M1107.9 447.0L1110.7 441.7M1107.9 447.0L1043.9 415.7M1042.3 421.5L1043.9 415.7M1042.3 421.5L973.0 405.2M1170.0 481.8L1171.3 480.3M1170.0 481.8L1111.6 439.9"/><path stroke="rgb(96,224,64)" d="M1043.9 415.7L973.0 405.2M1111.6 439.9L1044.4 413.7M1044.4 413.7L973.1 403.2M972.8 411.3L973.0 405.2M1110.7 441.7L1111.6 439.9M1110.7 441.7L1044.4 413.7M1043.9 415.7L1044.4 413.7M1043.9 415.7L973.1 403.2M973.0 405.2L973.1 403.2"/><path stroke="rgb(112,224,64)" d="M973.0 405.2L901.6 410.8M973.1 403.2L901.2 408.8M901.2 408.8L832.3 430.3M973.0 405.2L901.2 408.8M901.6 410.8L901.2 408.8"/><path stroke="rgb(160,208,48)" d="M718.8 517.0L678.7 576.3M717.3 515.7L676.9 575.4M723.4 520.9L678.7 576.3M684.0 579.1L678.7 576.3M718.8 517.0L676.9 575.4M678.7 576.3L676.9 575.4"/><path stroke="rgb(176,208,48)" d="M678.7 576.3L652.7 643.1M676.9 575.4L650.7 642.6M678.7 576.3L650.7 642.6M652.7 643.1L650.7 642.6"/><path stroke="rgb(208,192,48)" d="M647.8 785.4L669.1 853.8M645.8 785.8L667.3 854.7M653.7 784.3L647.8 785.4M653.7 784.3L669.1 853.8M647.8 785.4L645.8 785.8M647.8 785.4L667.3 854.7M669.1 853.8L667.3 854.7"/><path stroke="rgb(224,176,48)" d="M705.1 915.8L754.0 968.2M703.5 917.0L752.7 969.7M710.0 912.2L705.1 915.8M705.1 915.8L703.5 917.0M705.1 915.8L752.7 969.7"/><path stroke="rgb(224,112,32)" d="M1022.8 1041.2L1091.7 1019.7"/><path stroke="rgb(224,128,48)" d="M887.8 1005.5L951.5 1028.8"/><path stroke="rgb(144,208,48)" d="M723.4 520.9L718.8 517.0"/></g></svg>
<div style="position:absolute;left:113px;top:236px;width:1675px;height:852px;overflow:hidden;">
<div style="position:absolute;left:63px;top:0px;width:1612px;height:32px;background:#1c1c1c;"></div>
<div style="position:absolute;left:63px;top:0px;width:4px;height:32px;background:#5a5a5a;"></div>
<div style="position:absolute;right:1632px;top:0px;height:32px;line-height:34px;font-size:18px;color:#dcdcdc;font-family:'Liberation Mono',monospace;">1</div>
<div style="position:absolute;left:64px;top:0px;height:32px;line-height:32px;font-size:26.67px;white-space:pre;font-family:'Liberation Mono',monospace;text-shadow:1px 1px 1px #000;-webkit-text-stroke-width:0.18px;"><span style="color:#8cc878">#include &lt;metal_stdlib&gt;</span></div>
<div style="position:absolute;right:1632px;top:32px;height:32px;line-height:34px;font-size:18px;color:#8a8a8a;font-family:'Liberation Mono',monospace;">2</div>
<div style="position:absolute;left:64px;top:32px;height:32px;line-height:32px;font-size:26.67px;white-space:pre;font-family:'Liberation Mono',monospace;text-shadow:1px 1px 1px #000;-webkit-text-stroke-width:0.18px;"><span style="background:rgba(0,0,0,.8);padding-right:0px;display:inline-block;height:32px"><span style="color:#e070c8">using namespace</span><span style="color:#ffffff"> metal</span><span style="color:#f4f060">;</span></span></div>
<div style="position:absolute;right:1632px;top:64px;height:32px;line-height:34px;font-size:18px;color:#8a8a8a;font-family:'Liberation Mono',monospace;">3</div>
<div style="position:absolute;right:1632px;top:96px;height:32px;line-height:34px;font-size:18px;color:#8a8a8a;font-family:'Liberation Mono',monospace;">4</div>
<div style="position:absolute;left:64px;top:96px;height:32px;line-height:32px;font-size:26.67px;white-space:pre;font-family:'Liberation Mono',monospace;text-shadow:1px 1px 1px #000;-webkit-text-stroke-width:0.18px;"><span style="background:rgba(0,0,0,.8);padding-right:0px;display:inline-block;height:32px"><span style="color:#f4f060">struct</span><span style="color:#ffffff"> VS_INPUT</span></span></div>
<div style="position:absolute;right:1632px;top:128px;height:32px;line-height:34px;font-size:18px;color:#8a8a8a;font-family:'Liberation Mono',monospace;">5</div>
<div style="position:absolute;left:64px;top:128px;height:32px;line-height:32px;font-size:26.67px;white-space:pre;font-family:'Liberation Mono',monospace;text-shadow:1px 1px 1px #000;-webkit-text-stroke-width:0.18px;"><span style="background:rgba(0,0,0,.8);padding-right:0px;display:inline-block;height:32px"><span style="color:#ffffff">{</span></span></div>
<div style="position:absolute;right:1632px;top:160px;height:32px;line-height:34px;font-size:18px;color:#8a8a8a;font-family:'Liberation Mono',monospace;">6</div>
<div style="position:absolute;left:64px;top:160px;height:32px;line-height:32px;font-size:26.67px;white-space:pre;font-family:'Liberation Mono',monospace;text-shadow:1px 1px 1px #000;-webkit-text-stroke-width:0.18px;"><span style="background:rgba(0,0,0,.8);padding-right:0px;display:inline-block;height:32px"><span style="color:#ffffff">    </span><span style="color:#e070c8">float4</span><span style="color:#ffffff"> a_position [[</span><span style="color:#84c8e4">attribute</span><span style="color:#ffffff">(</span><span style="color:#a484f4">0</span><span style="color:#ffffff">)]]</span><span style="color:#f4f060">;</span></span></div>
<div style="position:absolute;right:1632px;top:192px;height:32px;line-height:34px;font-size:18px;color:#8a8a8a;font-family:'Liberation Mono',monospace;">7</div>
<div style="position:absolute;left:64px;top:192px;height:32px;line-height:32px;font-size:26.67px;white-space:pre;font-family:'Liberation Mono',monospace;text-shadow:1px 1px 1px #000;-webkit-text-stroke-width:0.18px;"><span style="background:rgba(0,0,0,.8);padding-right:0px;display:inline-block;height:32px"><span style="color:#ffffff">    </span><span style="color:#e070c8">float3</span><span style="color:#ffffff"> a_normal   [[</span><span style="color:#84c8e4">attribute</span><span style="color:#ffffff">(</span><span style="color:#a484f4">1</span><span style="color:#ffffff">)]]</span><span style="color:#f4f060">;</span></span></div>
<div style="position:absolute;right:1632px;top:224px;height:32px;line-height:34px;font-size:18px;color:#8a8a8a;font-family:'Liberation Mono',monospace;">8</div>
<div style="position:absolute;left:64px;top:224px;height:32px;line-height:32px;font-size:26.67px;white-space:pre;font-family:'Liberation Mono',monospace;text-shadow:1px 1px 1px #000;-webkit-text-stroke-width:0.18px;"><span style="background:rgba(0,0,0,.8);padding-right:0px;display:inline-block;height:32px"><span style="color:#ffffff">    </span><span style="color:#e070c8">float2</span><span style="color:#ffffff"> a_texcoord [[</span><span style="color:#84c8e4">attribute</span><span style="color:#ffffff">(</span><span style="color:#a484f4">2</span><span style="color:#ffffff">)]]</span><span style="color:#f4f060">;</span></span></div>
<div style="position:absolute;right:1632px;top:256px;height:32px;line-height:34px;font-size:18px;color:#8a8a8a;font-family:'Liberation Mono',monospace;">9</div>
<div style="position:absolute;left:64px;top:256px;height:32px;line-height:32px;font-size:26.67px;white-space:pre;font-family:'Liberation Mono',monospace;text-shadow:1px 1px 1px #000;-webkit-text-stroke-width:0.18px;"><span style="background:rgba(0,0,0,.8);padding-right:0px;display:inline-block;height:32px"><span style="color:#ffffff">}</span><span style="color:#f4f060">;</span></span></div>
<div style="position:absolute;right:1632px;top:288px;height:32px;line-height:34px;font-size:18px;color:#8a8a8a;font-family:'Liberation Mono',monospace;">10</div>
<div style="position:absolute;right:1632px;top:320px;height:32px;line-height:34px;font-size:18px;color:#8a8a8a;font-family:'Liberation Mono',monospace;">11</div>
<div style="position:absolute;left:64px;top:320px;height:32px;line-height:32px;font-size:26.67px;white-space:pre;font-family:'Liberation Mono',monospace;text-shadow:1px 1px 1px #000;-webkit-text-stroke-width:0.18px;"><span style="background:rgba(0,0,0,.8);padding-right:0px;display:inline-block;height:32px"><span style="color:#f4f060">struct</span><span style="color:#ffffff"> VS_OUTPUT</span></span></div>
<div style="position:absolute;right:1632px;top:352px;height:32px;line-height:34px;font-size:18px;color:#8a8a8a;font-family:'Liberation Mono',monospace;">12</div>
<div style="position:absolute;left:64px;top:352px;height:32px;line-height:32px;font-size:26.67px;white-space:pre;font-family:'Liberation Mono',monospace;text-shadow:1px 1px 1px #000;-webkit-text-stroke-width:0.18px;"><span style="background:rgba(0,0,0,.8);padding-right:0px;display:inline-block;height:32px"><span style="color:#ffffff">{</span></span></div>
<div style="position:absolute;right:1632px;top:384px;height:32px;line-height:34px;font-size:18px;color:#8a8a8a;font-family:'Liberation Mono',monospace;">13</div>
<div style="position:absolute;left:64px;top:384px;height:32px;line-height:32px;font-size:26.67px;white-space:pre;font-family:'Liberation Mono',monospace;text-shadow:1px 1px 1px #000;-webkit-text-stroke-width:0.18px;"><span style="background:rgba(0,0,0,.8);padding-right:0px;display:inline-block;height:32px"><span style="color:#ffffff">    </span><span style="color:#e070c8">float4</span><span style="color:#ffffff"> v_position [[</span><span style="color:#84c8e4">position</span><span style="color:#ffffff">]]</span><span style="color:#f4f060">;</span></span></div>
<div style="position:absolute;right:1632px;top:416px;height:32px;line-height:34px;font-size:18px;color:#8a8a8a;font-family:'Liberation Mono',monospace;">14</div>
<div style="position:absolute;left:64px;top:416px;height:32px;line-height:32px;font-size:26.67px;white-space:pre;font-family:'Liberation Mono',monospace;text-shadow:1px 1px 1px #000;-webkit-text-stroke-width:0.18px;"><span style="background:rgba(0,0,0,.8);padding-right:0px;display:inline-block;height:32px"><span style="color:#ffffff">    </span><span style="color:#e070c8">float3</span><span style="color:#ffffff"> v_normal</span><span style="color:#f4f060">;</span></span></div>
<div style="position:absolute;right:1632px;top:448px;height:32px;line-height:34px;font-size:18px;color:#8a8a8a;font-family:'Liberation Mono',monospace;">15</div>
<div style="position:absolute;left:64px;top:448px;height:32px;line-height:32px;font-size:26.67px;white-space:pre;font-family:'Liberation Mono',monospace;text-shadow:1px 1px 1px #000;-webkit-text-stroke-width:0.18px;"><span style="background:rgba(0,0,0,.8);padding-right:0px;display:inline-block;height:32px"><span style="color:#ffffff">    </span><span style="color:#e070c8">float2</span><span style="color:#ffffff"> v_texcoord</span><span style="color:#f4f060">;</span></span></div>
<div style="position:absolute;right:1632px;top:480px;height:32px;line-height:34px;font-size:18px;color:#8a8a8a;font-family:'Liberation Mono',monospace;">16</div>
<div style="position:absolute;left:64px;top:480px;height:32px;line-height:32px;font-size:26.67px;white-space:pre;font-family:'Liberation Mono',monospace;text-shadow:1px 1px 1px #000;-webkit-text-stroke-width:0.18px;"><span style="background:rgba(0,0,0,.8);padding-right:0px;display:inline-block;height:32px"><span style="color:#ffffff">}</span><span style="color:#f4f060">;</span></span></div>
<div style="position:absolute;right:1632px;top:512px;height:32px;line-height:34px;font-size:18px;color:#8a8a8a;font-family:'Liberation Mono',monospace;">17</div>
<div style="position:absolute;right:1632px;top:544px;height:32px;line-height:34px;font-size:18px;color:#8a8a8a;font-family:'Liberation Mono',monospace;">18</div>
<div style="position:absolute;left:64px;top:544px;height:32px;line-height:32px;font-size:26.67px;white-space:pre;font-family:'Liberation Mono',monospace;text-shadow:1px 1px 1px #000;-webkit-text-stroke-width:0.18px;"><span style="background:rgba(0,0,0,.8);padding-right:0px;display:inline-block;height:32px"><span style="color:#f4f060">struct</span><span style="color:#ffffff"> VS_UNIFORM</span></span></div>
<div style="position:absolute;right:1632px;top:576px;height:32px;line-height:34px;font-size:18px;color:#8a8a8a;font-family:'Liberation Mono',monospace;">19</div>
<div style="position:absolute;left:64px;top:576px;height:32px;line-height:32px;font-size:26.67px;white-space:pre;font-family:'Liberation Mono',monospace;text-shadow:1px 1px 1px #000;-webkit-text-stroke-width:0.18px;"><span style="background:rgba(0,0,0,.8);padding-right:0px;display:inline-block;height:32px"><span style="color:#ffffff">{</span></span></div>
<div style="position:absolute;right:1632px;top:608px;height:32px;line-height:34px;font-size:18px;color:#8a8a8a;font-family:'Liberation Mono',monospace;">20</div>
<div style="position:absolute;left:64px;top:608px;height:32px;line-height:32px;font-size:26.67px;white-space:pre;font-family:'Liberation Mono',monospace;text-shadow:1px 1px 1px #000;-webkit-text-stroke-width:0.18px;"><span style="background:rgba(0,0,0,.8);padding-right:0px;display:inline-block;height:32px"><span style="color:#ffffff">    </span><span style="color:#e070c8">float</span><span style="color:#ffffff"> time</span><span style="color:#f4f060">;</span></span></div>
<div style="position:absolute;right:1632px;top:640px;height:32px;line-height:34px;font-size:18px;color:#8a8a8a;font-family:'Liberation Mono',monospace;">21</div>
<div style="position:absolute;left:64px;top:640px;height:32px;line-height:32px;font-size:26.67px;white-space:pre;font-family:'Liberation Mono',monospace;text-shadow:1px 1px 1px #000;-webkit-text-stroke-width:0.18px;"><span style="background:rgba(0,0,0,.8);padding-right:0px;display:inline-block;height:32px"><span style="color:#ffffff">    </span><span style="color:#e070c8">float2</span><span style="color:#ffffff"> resolution</span><span style="color:#f4f060">;</span></span></div>
<div style="position:absolute;right:1632px;top:672px;height:32px;line-height:34px;font-size:18px;color:#8a8a8a;font-family:'Liberation Mono',monospace;">22</div>
<div style="position:absolute;left:64px;top:672px;height:32px;line-height:32px;font-size:26.67px;white-space:pre;font-family:'Liberation Mono',monospace;text-shadow:1px 1px 1px #000;-webkit-text-stroke-width:0.18px;"><span style="background:rgba(0,0,0,.8);padding-right:0px;display:inline-block;height:32px"><span style="color:#ffffff">    </span><span style="color:#e070c8">float2</span><span style="color:#ffffff"> mouse</span><span style="color:#f4f060">;</span></span></div>
<div style="position:absolute;right:1632px;top:704px;height:32px;line-height:34px;font-size:18px;color:#8a8a8a;font-family:'Liberation Mono',monospace;">23</div>
<div style="position:absolute;left:64px;top:704px;height:32px;line-height:32px;font-size:26.67px;white-space:pre;font-family:'Liberation Mono',monospace;text-shadow:1px 1px 1px #000;-webkit-text-stroke-width:0.18px;"><span style="background:rgba(0,0,0,.8);padding-right:0px;display:inline-block;height:32px"><span style="color:#ffffff">    </span><span style="color:#e070c8">float3</span><span style="color:#ffffff"> spectrum</span><span style="color:#f4f060">;</span></span></div>
<div style="position:absolute;right:1632px;top:736px;height:32px;line-height:34px;font-size:18px;color:#8a8a8a;font-family:'Liberation Mono',monospace;">24</div>
<div style="position:absolute;left:64px;top:736px;height:32px;line-height:32px;font-size:26.67px;white-space:pre;font-family:'Liberation Mono',monospace;text-shadow:1px 1px 1px #000;-webkit-text-stroke-width:0.18px;"><span style="background:rgba(0,0,0,.8);padding-right:0px;display:inline-block;height:32px"><span style="color:#ffffff">    </span><span style="color:#e070c8">float4x4</span><span style="color:#ffffff"> mvp</span><span style="color:#f4f060">;</span></span></div>
<div style="position:absolute;right:1632px;top:768px;height:32px;line-height:34px;font-size:18px;color:#8a8a8a;font-family:'Liberation Mono',monospace;">25</div>
<div style="position:absolute;left:64px;top:768px;height:32px;line-height:32px;font-size:26.67px;white-space:pre;font-family:'Liberation Mono',monospace;text-shadow:1px 1px 1px #000;-webkit-text-stroke-width:0.18px;"><span style="background:rgba(0,0,0,.8);padding-right:0px;display:inline-block;height:32px"><span style="color:#ffffff">}</span><span style="color:#f4f060">;</span></span></div>
<div style="position:absolute;right:1632px;top:800px;height:32px;line-height:34px;font-size:18px;color:#8a8a8a;font-family:'Liberation Mono',monospace;">26</div>
<div style="position:absolute;right:1632px;top:832px;height:32px;line-height:34px;font-size:18px;color:#8a8a8a;font-family:'Liberation Mono',monospace;">27</div>
<div style="position:absolute;left:64px;top:832px;height:32px;line-height:32px;font-size:26.67px;white-space:pre;font-family:'Liberation Mono',monospace;text-shadow:1px 1px 1px #000;-webkit-text-stroke-width:0.18px;"><span style="background:rgba(0,0,0,.8);padding-right:0px;display:inline-block;height:32px"><span style="color:#f4f060">vertex</span></span></div>
</div>
<div style="position:absolute;left:1788px;top:236px;width:26px;height:852px;background:#1c1c1c;"></div>
<div style="position:absolute;left:1790px;top:236px;width:22px;height:612px;background:linear-gradient(90deg,#6a6a6a,#606060);"></div>
<div style="position:absolute;left:957px;top:1091px;width:12px;height:12px;background:#444;border-radius:50%;"></div>
<div style="position:absolute;left:1817px;top:720px;width:12px;height:12px;background:#444;border-radius:50%;"></div>
<div style="position:absolute;left:1834px;top:184px;width:540px;height:1136px;background:#2c2c2c;"></div>
<div style="position:absolute;left:1832px;top:133px;width:2px;height:1187px;background:#2c2c2c;"></div>
<div style="position:absolute;left:1834px;top:133px;width:188px;height:49px;background:#1c1c1c;"></div>
<div style="position:absolute;left:1628.0px;width:600px;text-align:center;top:137.0px;height:40px;line-height:40px;font-size:24px;color:#c8c8c8;white-space:pre;text-shadow:1px 1px 1px rgba(0,0,0,.8);">Project</div>
<div style="position:absolute;left:2024px;top:133px;width:188px;height:49px;background:linear-gradient(#696969,#5d5d5d);"></div>
<div style="position:absolute;left:1818.0px;width:600px;text-align:center;top:137.0px;height:40px;line-height:40px;font-size:24px;color:#fff;white-space:pre;text-shadow:1px 1px 1px rgba(0,0,0,.8);">Pass</div>
<div style="position:absolute;left:2214px;top:133px;width:183px;height:49px;background:#1c1c1c;"></div>
<div style="position:absolute;left:2006.0px;width:600px;text-align:center;top:137.0px;height:40px;line-height:40px;font-size:24px;color:#c8c8c8;white-space:pre;text-shadow:1px 1px 1px rgba(0,0,0,.8);">Shader Stage</div>
<div style="position:absolute;left:1834px;top:182px;width:563px;height:2px;background:#333;"></div>
<div style="position:absolute;left:2374px;top:184px;width:23px;height:1136px;background:#1c1c1c;"></div>
<div style="position:absolute;left:2376px;top:412px;width:21px;height:700px;background:linear-gradient(90deg,#6e6e6e,#646464);"></div>
<div style="position:absolute;left:1834px;top:184px;width:490px;height:36px;background:linear-gradient(#6a6a6a,#5e5e5e);"></div>
<div style="position:absolute;left:1846px;top:193.0px;width:0;height:0;border-left:6px solid transparent;border-right:6px solid transparent;border-top:7.199999999999999px solid #c0c0c0;"></div>
<div style="position:absolute;left:1870px;top:176.0px;height:40px;line-height:40px;font-size:24px;color:#fff;white-space:pre;text-shadow:1px 1px 1px rgba(0,0,0,.8);">Passes <span style="color:#a8a8a8">(1)</span></div>
<div style="position:absolute;left:2324px;top:184px;width:50px;height:36px;background:#1c1c1c;"></div>
<div style="position:absolute;left:2324.0px;width:50px;text-align:center;top:177.0px;height:40px;line-height:40px;font-size:30px;color:#fff;white-space:pre;font-weight:bold;">+</div>
<div style="position:absolute;left:1834px;top:222px;width:48px;height:48px;background:#1c1c1c;"></div>
<svg style="position:absolute;left:1850px;top:238px" width="18" height="16"><polygon points="1.9,1.7 14.4,8 1.9,14.3" fill="#fff"/></svg>
<div style="position:absolute;left:1884px;top:222px;width:48px;height:48px;background:#262626;"></div>
<div style="position:absolute;left:1884.0px;width:48px;text-align:center;top:227.0px;height:40px;line-height:40px;font-size:22px;color:#8a8a8a;white-space:pre;">R</div>
<div style="position:absolute;left:1934px;top:222px;width:48px;height:48px;background:#1c1c1c;"></div>
<svg style="position:absolute;left:1947.5px;top:235.7px" width="21.09999999999991" height="21.400000000000006"><polyline points="3,10.084000000000003 10.851999999999954,18.400000000000006 18.09999999999991,3" fill="none" stroke="#fff" stroke-width="2.3" stroke-linecap="butt" stroke-linejoin="miter"/></svg>
<div style="position:absolute;left:1984px;top:222px;width:340px;height:48px;background:#1c1c1c;"></div>
<div style="position:absolute;left:1992px;top:226.0px;height:40px;line-height:40px;font-size:24px;color:#fff;white-space:pre;">A</div>
<div style="position:absolute;left:2325px;top:222px;width:49px;height:48px;background:#352b2b;"></div>
<div style="position:absolute;left:2325.0px;width:48px;text-align:center;top:227.0px;height:40px;line-height:40px;font-size:24px;color:#8a8a8a;white-space:pre;">x</div>
<div style="position:absolute;left:1834px;top:272px;width:540px;height:50px;background:linear-gradient(#6a6a6a,#5e5e5e);"></div>
<div style="position:absolute;left:1846px;top:293.0px;width:0;height:0;border-left:6px solid transparent;border-right:6px solid transparent;border-top:7.199999999999999px solid #bdbdbd;"></div>
<div style="position:absolute;left:1870px;top:277.0px;height:40px;line-height:40px;font-size:24px;color:#fff;white-space:pre;text-shadow:1px 1px 1px rgba(0,0,0,.8);">Properties</div>
<div style="position:absolute;left:1834px;top:322px;width:540px;height:2px;background:#333;"></div>
<div style="position:absolute;left:1834px;top:324px;width:180px;height:48px;background:#1c1c1c;"></div>
<div style="position:absolute;left:2016px;top:324px;width:358px;height:48px;background:linear-gradient(#1c1c1c,#222);"></div>
<div style="position:absolute;left:1838px;top:328.0px;height:40px;line-height:40px;font-size:24px;color:#b4b4b4;white-space:pre;">Pass Type</div>
<div style="position:absolute;left:1834px;top:372px;width:540px;height:2px;background:#333;"></div>
<div style="position:absolute;left:2014px;top:324px;width:2px;height:48px;background:#333;"></div>
<div style="position:absolute;right:141px;top:328.0px;height:40px;line-height:40px;font-size:24px;color:#fff;white-space:pre;letter-spacing:-1.8px;">RENDER</div>
<div style="position:absolute;left:1834px;top:374px;width:180px;height:48px;background:#1c1c1c;"></div>
<div style="position:absolute;left:2016px;top:374px;width:358px;height:48px;background:linear-gradient(#1c1c1c,#222);"></div>
<div style="position:absolute;left:1838px;top:378.0px;height:40px;line-height:40px;font-size:24px;color:#b4b4b4;white-space:pre;">Enabled</div>
<div style="position:absolute;left:1834px;top:422px;width:540px;height:2px;background:#333;"></div>
<div style="position:absolute;left:2014px;top:374px;width:2px;height:48px;background:#333;"></div>
<div style="position:absolute;left:2063px;top:374px;width:311px;height:48px;background:#353535;"></div>
<svg style="position:absolute;left:2029.7px;top:387.4px" width="21.0" height="20.5"><polyline points="3,8.945 9.75,17.5 18.0,3" fill="none" stroke="#fff" stroke-width="2.2" stroke-linecap="butt" stroke-linejoin="miter"/></svg>
<div style="position:absolute;left:1834px;top:424px;width:180px;height:48px;background:#1c1c1c;"></div>
<div style="position:absolute;left:2016px;top:424px;width:358px;height:48px;background:linear-gradient(#1c1c1c,#222);"></div>
<div style="position:absolute;left:1838px;top:428.0px;height:40px;line-height:40px;font-size:24px;color:#b4b4b4;white-space:pre;">Name</div>
<div style="position:absolute;left:1834px;top:472px;width:540px;height:2px;background:#333;"></div>
<div style="position:absolute;left:2014px;top:424px;width:2px;height:48px;background:#333;"></div>
<div style="position:absolute;right:144px;top:428.0px;height:40px;line-height:40px;font-size:24px;color:#fff;white-space:pre;">A</div>
<div style="position:absolute;left:1834px;top:474px;width:180px;height:48px;background:#1c1c1c;"></div>
<div style="position:absolute;left:2016px;top:474px;width:358px;height:48px;background:linear-gradient(#1c1c1c,#222);"></div>
<div style="position:absolute;left:1838px;top:478.0px;height:40px;line-height:40px;font-size:24px;color:#b4b4b4;white-space:pre;">Primitive</div>
<div style="position:absolute;left:1834px;top:522px;width:540px;height:2px;background:#333;"></div>
<div style="position:absolute;left:2014px;top:474px;width:2px;height:48px;background:#333;"></div>
<div style="position:absolute;left:2020px;top:478.0px;height:40px;line-height:40px;font-size:24px;color:#fff;white-space:pre;">Sphere</div>
<div style="position:absolute;left:2356px;top:494.0px;width:0;height:0;border-left:6px solid transparent;border-right:6px solid transparent;border-top:7.199999999999999px solid #fff;"></div>
<div style="position:absolute;left:1834px;top:524px;width:180px;height:48px;background:#1c1c1c;"></div>
<div style="position:absolute;left:2016px;top:524px;width:358px;height:48px;background:linear-gradient(#1c1c1c,#222);"></div>
<div style="position:absolute;left:1838px;top:528.0px;height:40px;line-height:40px;font-size:24px;color:#b4b4b4;white-space:pre;">Type</div>
<div style="position:absolute;left:1834px;top:572px;width:540px;height:2px;background:#333;"></div>
<div style="position:absolute;left:2014px;top:524px;width:2px;height:48px;background:#333;"></div>
<div style="position:absolute;left:2020px;top:528.0px;height:40px;line-height:40px;font-size:24px;color:#fff;white-space:pre;letter-spacing:-1.3px;">LINE_STRIP</div>
<div style="position:absolute;left:2356px;top:544.0px;width:0;height:0;border-left:6px solid transparent;border-right:6px solid transparent;border-top:7.199999999999999px solid #fff;"></div>
<div style="position:absolute;left:1834px;top:574px;width:180px;height:48px;background:#1c1c1c;"></div>
<div style="position:absolute;left:2016px;top:574px;width:358px;height:48px;background:linear-gradient(#1c1c1c,#222);"></div>
<div style="position:absolute;left:1838px;top:578.0px;height:40px;line-height:40px;font-size:24px;color:#b4b4b4;white-space:pre;">Instances</div>
<div style="position:absolute;left:1834px;top:622px;width:540px;height:2px;background:#333;"></div>
<div style="position:absolute;left:2014px;top:574px;width:2px;height:48px;background:#333;"></div>
<div style="position:absolute;left:2066px;top:574px;width:258px;height:48px;background:linear-gradient(#1a1a1a,#262626);"></div>
<svg style="position:absolute;left:2030px;top:588px" width="330" height="20"><polygon points="6,10 16.1,4.8 16.1,15.1" fill="#fff"/><polygon points="314,4.8 324.2,10 314,15.1" fill="#fff"/></svg>
<div style="position:absolute;left:2165.0px;width:60px;text-align:center;top:578.0px;height:40px;line-height:40px;font-size:24px;color:#fff;white-space:pre;">4</div>
<div style="position:absolute;left:1834px;top:624px;width:540px;height:50px;background:linear-gradient(#6a6a6a,#5e5e5e);"></div>
<div style="position:absolute;left:1846px;top:645.0px;width:0;height:0;border-left:6px solid transparent;border-right:6px solid transparent;border-top:7.199999999999999px solid #bdbdbd;"></div>
<div style="position:absolute;left:1870px;top:629.0px;height:40px;line-height:40px;font-size:24px;color:#fff;white-space:pre;text-shadow:1px 1px 1px rgba(0,0,0,.8);">Render State</div>
<div style="position:absolute;left:1834px;top:674px;width:540px;height:2px;background:#333;"></div>
<div style="position:absolute;left:1834px;top:676px;width:540px;height:50px;background:linear-gradient(#514355,#473a4b);"></div>
<div style="position:absolute;left:1871.5px;top:695.0px;width:0;height:0;border-top:6px solid transparent;border-bottom:6px solid transparent;border-left:7.199999999999999px solid #c4bcc4;"></div>
<div style="position:absolute;left:1894px;top:681.0px;height:40px;line-height:40px;font-size:24px;color:#fff;white-space:pre;text-shadow:1px 1px 1px rgba(0,0,0,.8);">Back-face Culling</div>
<div style="position:absolute;left:1834px;top:726px;width:540px;height:2px;background:#333;"></div>
<div style="position:absolute;left:1834px;top:728px;width:540px;height:50px;background:linear-gradient(#514355,#473a4b);"></div>
<div style="position:absolute;left:1871.5px;top:747.0px;width:0;height:0;border-top:6px solid transparent;border-bottom:6px solid transparent;border-left:7.199999999999999px solid #c4bcc4;"></div>
<div style="position:absolute;left:1894px;top:733.0px;height:40px;line-height:40px;font-size:24px;color:#fff;white-space:pre;text-shadow:1px 1px 1px rgba(0,0,0,.8);">Depth Test</div>
<div style="position:absolute;left:1834px;top:778px;width:540px;height:2px;background:#333;"></div>
<div style="position:absolute;left:1834px;top:780px;width:540px;height:50px;background:linear-gradient(#514355,#473a4b);"></div>
<div style="position:absolute;left:1871.5px;top:799.0px;width:0;height:0;border-top:6px solid transparent;border-bottom:6px solid transparent;border-left:7.199999999999999px solid #c4bcc4;"></div>
<div style="position:absolute;left:1894px;top:785.0px;height:40px;line-height:40px;font-size:24px;color:#fff;white-space:pre;text-shadow:1px 1px 1px rgba(0,0,0,.8);">Blending</div>
<div style="position:absolute;left:1834px;top:830px;width:540px;height:2px;background:#333;"></div>
<div style="position:absolute;left:1834px;top:832px;width:540px;height:50px;background:linear-gradient(#514355,#473a4b);"></div>
<div style="position:absolute;left:1871.5px;top:851.0px;width:0;height:0;border-top:6px solid transparent;border-bottom:6px solid transparent;border-left:7.199999999999999px solid #c4bcc4;"></div>
<div style="position:absolute;left:1894px;top:837.0px;height:40px;line-height:40px;font-size:24px;color:#fff;white-space:pre;text-shadow:1px 1px 1px rgba(0,0,0,.8);">Color Mask</div>
<div style="position:absolute;left:1834px;top:882px;width:540px;height:2px;background:#333;"></div>
<div style="position:absolute;left:1834px;top:884px;width:540px;height:50px;background:linear-gradient(#6a6a6a,#5e5e5e);"></div>
<div style="position:absolute;left:1846px;top:905.0px;width:0;height:0;border-left:6px solid transparent;border-right:6px solid transparent;border-top:7.199999999999999px solid #bdbdbd;"></div>
<div style="position:absolute;left:1870px;top:889.0px;height:40px;line-height:40px;font-size:24px;color:#fff;white-space:pre;text-shadow:1px 1px 1px rgba(0,0,0,.8);">Transform</div>
<div style="position:absolute;left:1834px;top:934px;width:540px;height:2px;background:#333;"></div>
<div style="position:absolute;left:1834px;top:936px;width:540px;height:50px;background:linear-gradient(#514355,#473a4b);"></div>
<div style="position:absolute;left:1870px;top:957.0px;width:0;height:0;border-left:6px solid transparent;border-right:6px solid transparent;border-top:7.199999999999999px solid #bdbdbd;"></div>
<div style="position:absolute;left:1894px;top:941.0px;height:40px;line-height:40px;font-size:24px;color:#fff;white-space:pre;text-shadow:1px 1px 1px rgba(0,0,0,.8);">Projection</div>
<div style="position:absolute;left:1834px;top:986px;width:540px;height:2px;background:#333;"></div>
<div style="position:absolute;left:1834px;top:988px;width:180px;height:48px;background:#1c1c1c;"></div>
<div style="position:absolute;left:2016px;top:988px;width:358px;height:48px;background:linear-gradient(#1c1c1c,#222);"></div>
<div style="position:absolute;left:1834px;top:1036px;width:540px;height:2px;background:#333;"></div>
<div style="position:absolute;left:2014px;top:988px;width:2px;height:48px;background:#333;"></div>
<div style="position:absolute;left:2095.0px;width:200px;text-align:center;top:992.0px;height:40px;line-height:40px;font-size:24px;color:#fff;white-space:pre;">Reset</div>
<div style="position:absolute;left:1834px;top:1038px;width:180px;height:48px;background:#1c1c1c;"></div>
<div style="position:absolute;left:2016px;top:1038px;width:358px;height:48px;background:linear-gradient(#1c1c1c,#222);"></div>
<div style="position:absolute;left:1838px;top:1042.0px;height:40px;line-height:40px;font-size:24px;color:#b4b4b4;white-space:pre;">Projection</div>
<div style="position:absolute;left:1834px;top:1086px;width:540px;height:2px;background:#333;"></div>
<div style="position:absolute;left:2014px;top:1038px;width:2px;height:48px;background:#333;"></div>
<div style="position:absolute;left:2020px;top:1042.0px;height:40px;line-height:40px;font-size:24px;color:#fff;white-space:pre;">Perspective</div>
<div style="position:absolute;left:2356px;top:1058.0px;width:0;height:0;border-left:6px solid transparent;border-right:6px solid transparent;border-top:7.199999999999999px solid #fff;"></div>
<div style="position:absolute;left:1834px;top:1088px;width:180px;height:48px;background:#1c1c1c;"></div>
<div style="position:absolute;left:2016px;top:1088px;width:358px;height:48px;background:linear-gradient(#1c1c1c,#222);"></div>
<div style="position:absolute;left:1838px;top:1092.0px;height:40px;line-height:40px;font-size:24px;color:#b4b4b4;white-space:pre;">FOV</div>
<div style="position:absolute;left:1834px;top:1136px;width:540px;height:2px;background:#333;"></div>
<div style="position:absolute;left:2014px;top:1088px;width:2px;height:48px;background:#333;"></div>
<div style="position:absolute;right:144px;top:1092.0px;height:40px;line-height:40px;font-size:24px;color:#fff;white-space:pre;">60</div>
<div style="position:absolute;left:1834px;top:1138px;width:180px;height:48px;background:#1c1c1c;"></div>
<div style="position:absolute;left:2016px;top:1138px;width:358px;height:48px;background:linear-gradient(#1c1c1c,#222);"></div>
<div style="position:absolute;left:1838px;top:1142.0px;height:40px;line-height:40px;font-size:24px;color:#b4b4b4;white-space:pre;">Z Near</div>
<div style="position:absolute;left:1834px;top:1186px;width:540px;height:2px;background:#333;"></div>
<div style="position:absolute;left:2014px;top:1138px;width:2px;height:48px;background:#333;"></div>
<div style="position:absolute;right:144px;top:1142.0px;height:40px;line-height:40px;font-size:24px;color:#fff;white-space:pre;">1</div>
<div style="position:absolute;left:1834px;top:1188px;width:180px;height:48px;background:#1c1c1c;"></div>
<div style="position:absolute;left:2016px;top:1188px;width:358px;height:48px;background:linear-gradient(#1c1c1c,#222);"></div>
<div style="position:absolute;left:1838px;top:1192.0px;height:40px;line-height:40px;font-size:24px;color:#b4b4b4;white-space:pre;">Z Far</div>
<div style="position:absolute;left:1834px;top:1236px;width:540px;height:2px;background:#333;"></div>
<div style="position:absolute;left:2014px;top:1188px;width:2px;height:48px;background:#333;"></div>
<div style="position:absolute;right:144px;top:1192.0px;height:40px;line-height:40px;font-size:24px;color:#fff;white-space:pre;">1000</div>
<div style="position:absolute;left:1834px;top:1238px;width:540px;height:50px;background:linear-gradient(#514355,#473a4b);"></div>
<div style="position:absolute;left:1871.5px;top:1257.0px;width:0;height:0;border-top:6px solid transparent;border-bottom:6px solid transparent;border-left:7.199999999999999px solid #c4bcc4;"></div>
<div style="position:absolute;left:1894px;top:1243.0px;height:40px;line-height:40px;font-size:24px;color:#fff;white-space:pre;text-shadow:1px 1px 1px rgba(0,0,0,.8);">View</div>
<div style="position:absolute;left:1834px;top:1288px;width:540px;height:2px;background:#333;"></div>
<div style="position:absolute;left:1834px;top:1290px;width:540px;height:50px;background:linear-gradient(#514355,#473a4b);"></div>
<div style="position:absolute;left:1871.5px;top:1309.0px;width:0;height:0;border-top:6px solid transparent;border-bottom:6px solid transparent;border-left:7.199999999999999px solid #c4bcc4;"></div>
<div style="position:absolute;left:1894px;top:1295.0px;height:40px;line-height:40px;font-size:24px;color:#fff;white-space:pre;text-shadow:1px 1px 1px rgba(0,0,0,.8);">Model</div>
</div></div>
<div style="position:absolute;left:112px;top:76px;width:2286px;height:1244px;border-radius:20px;border:2px solid rgba(255,255,255,.2);border-top:2px solid rgba(255,255,255,.32);border-right-color:rgba(255,255,255,.3);pointer-events:none;"></div>
<div style="position:absolute;left:1816px;top:454px;width:584px;height:183px;border:12px solid rgba(226,8,8,.95);border-radius:36px;"></div>
<div style="position:absolute;left:1816px;top:920px;width:584px;height:182px;border:12px solid rgba(226,8,8,.95);border-radius:36px;"></div>
</body></html>
